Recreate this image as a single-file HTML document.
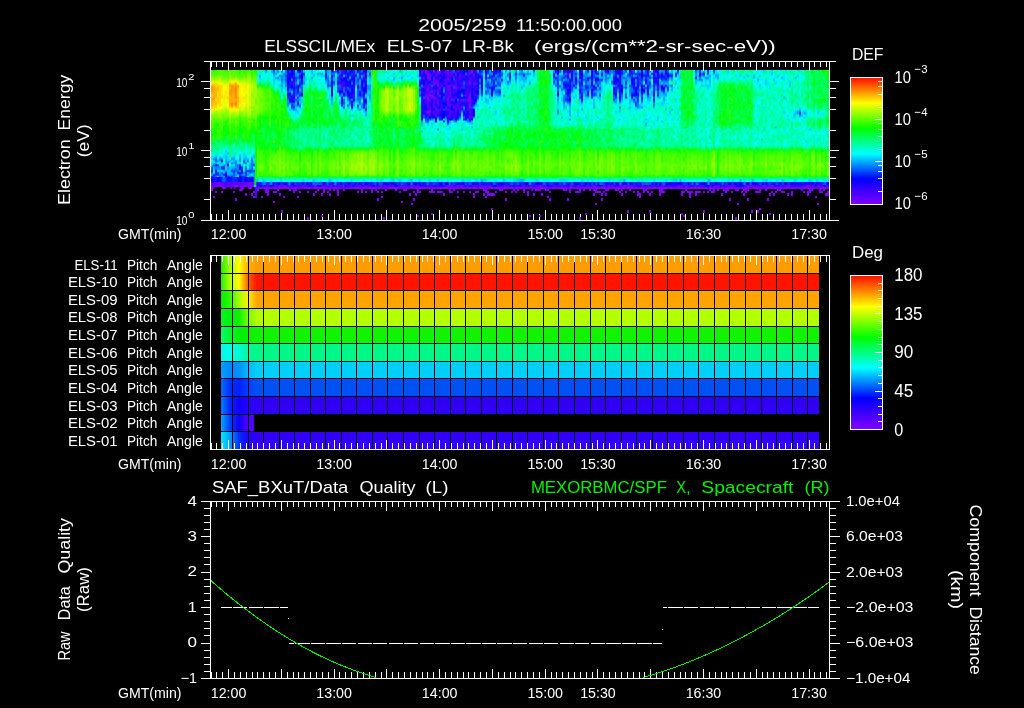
<!DOCTYPE html>
<html><head><meta charset="utf-8"><title>ELS plot</title>
<style>
html,body{margin:0;padding:0;background:#000}
#pg{position:relative;width:1024px;height:708px;background:#000;overflow:hidden}
#sp{position:absolute;left:211px;top:70px;width:618px;height:150px;display:flex;align-items:flex-start;background:#000}
#sp i{display:block;flex:0 0 2px;width:2px;height:107px}
#sb{position:absolute;left:211px;top:70px;width:618px;height:150px}
.st{position:absolute;left:0;width:618px}
svg{position:absolute;left:0;top:0;will-change:transform}
text{font-family:"Liberation Sans",sans-serif;fill:#fff}
</style></head><body><div id="pg">
<div id="sp"><i style="background:linear-gradient(#4f0,#5f0,#3f0,#7f0,#8f0,#af0,#df0,#fe0,#fa0,#f90,#f90,#fa0,#fb0,#fc0,#fb0,#fa0,#fa0,#fb0,#fb0,#fd0,#fe0,#cf0,#af0,#8f0,#7f0,#7f0,#4f0,#4f0,#4f0,#4f0,#2f0,#2f0,#1f0,#0f1,#0f2,#1f0,#0f4,#0f1,#0f7,#0f8,#0f6,#0f8,#0fd,#0ff,#0df,#0df,#0fd,#0df,#0cf,#07f,#05f,#02f,#06f,#0bf,#01f)"></i><i style="background:linear-gradient(#2f0,#3f0,#5f0,#5f0,#7f0,#9f0,#ef0,#fc0,#fb0,#fa0,#fa0,#fa0,#fb0,#fb0,#f90,#fa0,#fb0,#fc0,#fc0,#fd0,#fe0,#bf0,#9f0,#8f0,#6f0,#4f0,#5f0,#3f0,#3f0,#3f0,#1f0,#2f0,#0f1,#2f0,#4f0,#3f0,#0f8,#0f2,#0f5,#0f9,#0fc,#0fa,#0fa,#0fd,#0df,#08f,#0df,#0cf,#06f,#0af,#0af,#0ef,#0fd,#00f,#05f)"></i><i style="background:linear-gradient(#3f0,#4f0,#3f0,#6f0,#7f0,#9f0,#ef0,#fc0,#fd0,#fb0,#fb0,#fb0,#fb0,#fa0,#fc0,#fd0,#fc0,#fb0,#fc0,#fd0,#ef0,#af0,#8f0,#7f0,#6f0,#5f0,#3f0,#2f0,#1f0,#1f0,#2f0,#1f0,#0f0,#1f0,#1f0,#0f3,#0f8,#0f7,#0f6,#0f6,#0f7,#0fe,#0f8,#0df,#0bf,#04f,#05f,#0cf,#01f,#08f,#06f,#01f,#03f,#03f,#08f)"></i><i style="background:linear-gradient(#4f0,#5f0,#5f0,#8f0,#8f0,#bf0,#df0,#fe0,#fc0,#fb0,#fb0,#fc0,#fd0,#fd0,#fc0,#fc0,#fc0,#fd0,#ff0,#ff0,#df0,#bf0,#9f0,#8f0,#6f0,#4f0,#5f0,#2f0,#1f0,#3f0,#2f0,#4f0,#2f0,#3f0,#3f0,#0f6,#0f2,#0f6,#0f9,#0f7,#0f6,#0fb,#0df,#0fc,#0fe,#0ef,#09f,#0ff,#03f,#08f,#08f,#0df,#02f,#03f,#0fe)"></i><i style="background:linear-gradient(#4f0,#5f0,#4f0,#7f0,#9f0,#cf0,#cf0,#ef0,#fd0,#fd0,#fd0,#fc0,#fc0,#fc0,#fd0,#fd0,#fd0,#fd0,#fd0,#ff0,#df0,#af0,#9f0,#9f0,#7f0,#6f0,#4f0,#4f0,#4f0,#3f0,#3f0,#3f0,#2f0,#3f0,#4f0,#2f0,#0f6,#0f7,#0f8,#0f9,#0fa,#0fc,#0fb,#0ff,#0cf,#07f,#0af,#0df,#0cf,#09f,#09f,#0cf,#08f,#07f,#05f)"></i><i style="background:linear-gradient(#4f0,#5f0,#5f0,#7f0,#7f0,#8f0,#cf0,#ef0,#fd0,#fd0,#fe0,#fe0,#fe0,#fd0,#fd0,#ff0,#ff0,#fe0,#fe0,#ff0,#cf0,#af0,#8f0,#6f0,#8f0,#5f0,#5f0,#4f0,#4f0,#4f0,#4f0,#1f0,#1f0,#2f0,#2f0,#0f2,#0f6,#0f8,#0f8,#0f8,#0f9,#0fb,#0ef,#0fe,#0ef,#07f,#00f,#0bf,#0f9,#02f,#04f,#0fd,#05f,#08f,#08f)"></i><i style="background:linear-gradient(#3f0,#4f0,#4f0,#5f0,#6f0,#9f0,#af0,#cf0,#ff0,#ef0,#ff0,#ff0,#ff0,#fe0,#fd0,#df0,#df0,#ef0,#ef0,#cf0,#cf0,#af0,#8f0,#6f0,#6f0,#5f0,#3f0,#2f0,#2f0,#0f0,#0f0,#0f0,#2f0,#0f0,#0f3,#0f2,#0f5,#0f3,#0f5,#0fa,#0fe,#0fd,#0ef,#0ef,#0df,#0fe,#0f8,#0ff,#0af,#02f,#03f,#0bf,#0bf,#00f,#0df)"></i><i style="background:linear-gradient(#2f0,#3f0,#5f0,#6f0,#7f0,#8f0,#af0,#cf0,#ef0,#ff0,#fe0,#fd0,#fe0,#fe0,#fe0,#ef0,#ef0,#ef0,#ef0,#cf0,#af0,#8f0,#7f0,#8f0,#6f0,#5f0,#1f0,#1f0,#0f0,#2f0,#0f0,#0f1,#0f1,#1f0,#1f0,#0f4,#0f9,#0f6,#0f8,#0fc,#0ef,#0bf,#0fb,#0cf,#0bf,#0bf,#09f,#0af,#0af,#0df,#0cf,#09f,#20f,#00f,#00f)"></i><i style="background:linear-gradient(#2f0,#3f0,#4f0,#5f0,#6f0,#7f0,#af0,#df0,#fe0,#fe0,#ff0,#fe0,#fe0,#ff0,#fc0,#fe0,#fe0,#ff0,#ff0,#ef0,#cf0,#9f0,#8f0,#7f0,#5f0,#3f0,#2f0,#3f0,#3f0,#1f0,#0f0,#0f0,#0f0,#0f4,#0f7,#2f0,#0f4,#0f7,#0f9,#0f9,#0fa,#0fd,#0af,#0ef,#0df,#0df,#0cf,#07f,#00f,#09f,#09f,#0bf,#0bf,#09f,#10f)"></i><i style="background:linear-gradient(#6f0,#7f0,#8f0,#9f0,#8f0,#cf0,#fe0,#fb0,#f90,#fb0,#fa0,#f90,#f90,#fa0,#fb0,#fa0,#fa0,#fa0,#fa0,#fd0,#ef0,#ef0,#cf0,#af0,#8f0,#7f0,#7f0,#5f0,#4f0,#4f0,#4f0,#2f0,#2f0,#3f0,#2f0,#0f4,#1f0,#0f1,#0f3,#0f6,#0f8,#0fa,#0f7,#0f7,#0fa,#0fe,#09f,#0ff,#0fe,#0cf,#0bf,#0af,#0bf,#0af,#04f)"></i><i style="background:linear-gradient(#4f0,#5f0,#4f0,#7f0,#7f0,#bf0,#ef0,#fd0,#f90,#f90,#f90,#f90,#f90,#fa0,#fa0,#fa0,#fa0,#f80,#f80,#fc0,#fe0,#cf0,#af0,#8f0,#5f0,#5f0,#5f0,#3f0,#2f0,#2f0,#2f0,#2f0,#1f0,#1f0,#1f0,#3f0,#0f1,#0f4,#0f8,#0fa,#0fa,#0f7,#0f9,#0fc,#0df,#07f,#0fe,#07f,#0cf,#0bf,#09f,#03f,#0bf,#08f,#03f)"></i><i style="background:linear-gradient(#4f0,#5f0,#6f0,#5f0,#6f0,#bf0,#ef0,#fc0,#fa0,#f90,#f90,#f90,#fa0,#fa0,#fa0,#fa0,#fa0,#f90,#fb0,#fe0,#ff0,#cf0,#9f0,#9f0,#7f0,#4f0,#4f0,#3f0,#2f0,#2f0,#2f0,#2f0,#0f0,#0f3,#0f5,#0f3,#0f4,#0fa,#0fb,#0f9,#0f9,#0fd,#0ef,#0ef,#0bf,#08f,#0bf,#09f,#0ff,#0af,#09f,#04f,#04f,#06f,#06f)"></i><i style="background:linear-gradient(#3f0,#4f0,#6f0,#7f0,#af0,#cf0,#fe0,#fa0,#f90,#f80,#f80,#f80,#f80,#f80,#f80,#fa0,#f90,#f80,#f90,#fc0,#fe0,#df0,#af0,#9f0,#6f0,#4f0,#7f0,#5f0,#4f0,#4f0,#3f0,#3f0,#2f0,#5f0,#6f0,#0f4,#0f1,#0f5,#0f6,#0f8,#0fa,#0fb,#0f7,#0fa,#0fc,#0fc,#09f,#08f,#08f,#09f,#07f,#05f,#0af,#08f,#0bf)"></i><i style="background:linear-gradient(#3f0,#4f0,#5f0,#5f0,#7f0,#af0,#df0,#fe0,#f90,#fb0,#fb0,#fc0,#fc0,#fc0,#fa0,#fb0,#fb0,#fc0,#fc0,#fd0,#ef0,#df0,#bf0,#9f0,#6f0,#5f0,#4f0,#4f0,#4f0,#1f0,#2f0,#1f0,#1f0,#0f1,#0f3,#0f4,#0f5,#0f3,#0f7,#0f9,#0f9,#0ef,#0fc,#0fd,#0ff,#0ff,#0cf,#0ff,#06f,#08f,#07f,#07f,#10f,#0df,#0cf)"></i><i style="background:linear-gradient(#1f0,#2f0,#3f0,#4f0,#5f0,#8f0,#bf0,#ef0,#fe0,#fe0,#ff0,#fe0,#fe0,#fe0,#fe0,#fd0,#fd0,#fd0,#ff0,#bf0,#bf0,#af0,#7f0,#6f0,#3f0,#3f0,#2f0,#1f0,#0f0,#1f0,#0f0,#0f2,#0f1,#0f1,#0f2,#0f5,#0f7,#0f6,#0f8,#0f9,#0f9,#0ff,#0fe,#0bf,#0af,#08f,#09f,#0ef,#03f,#00f,#01f,#09f,#01f,#04f,#00f)"></i><i style="background:linear-gradient(#4f0,#5f0,#6f0,#4f0,#6f0,#9f0,#bf0,#df0,#fe0,#ff0,#ff0,#ff0,#ff0,#ef0,#fe0,#fe0,#fe0,#ef0,#df0,#df0,#ef0,#af0,#8f0,#7f0,#5f0,#5f0,#3f0,#2f0,#2f0,#3f0,#0f0,#0f0,#0f1,#0f4,#0f4,#1f0,#0f4,#0f7,#0f9,#0f8,#0f6,#0fc,#0fd,#0fe,#0fe,#0fa,#0fe,#0fd,#0df,#04f,#03f,#00f,#30f,#08f,#10f)"></i><i style="background:linear-gradient(#2f0,#3f0,#4f0,#5f0,#8f0,#af0,#df0,#fe0,#fe0,#fe0,#fe0,#fe0,#ff0,#ff0,#fd0,#fe0,#fe0,#ff0,#ff0,#df0,#cf0,#af0,#9f0,#7f0,#5f0,#4f0,#4f0,#3f0,#3f0,#1f0,#1f0,#2f0,#3f0,#4f0,#3f0,#0f2,#0f2,#0f4,#0f6,#0f8,#0fa,#0f8,#0df,#0df,#0df,#0bf,#04f,#08f,#0ff,#0f9,#0fb,#0df,#06f,#0af,#10f)"></i><i style="background:linear-gradient(#2f0,#3f0,#3f0,#5f0,#6f0,#8f0,#af0,#cf0,#cf0,#df0,#df0,#ef0,#df0,#cf0,#cf0,#df0,#df0,#df0,#cf0,#af0,#af0,#9f0,#8f0,#8f0,#4f0,#4f0,#2f0,#4f0,#3f0,#2f0,#1f0,#1f0,#0f1,#1f0,#1f0,#1f0,#0f5,#0fa,#0fb,#0fc,#0fd,#0ff,#0fd,#0df,#0cf,#0af,#0df,#06f,#0fc,#06f,#06f,#07f,#02f,#04f,#06f)"></i><i style="background:linear-gradient(#3f0,#4f0,#7f0,#9f0,#9f0,#af0,#bf0,#df0,#ef0,#ff0,#ef0,#ef0,#ef0,#df0,#ef0,#ef0,#ef0,#ef0,#ef0,#df0,#cf0,#bf0,#af0,#9f0,#7f0,#5f0,#5f0,#4f0,#4f0,#4f0,#3f0,#2f0,#2f0,#3f0,#3f0,#0f2,#0f0,#0f5,#0f7,#0f8,#0fa,#0fc,#0f8,#0fe,#0ff,#0bf,#06f,#0ff,#0f5,#0ff,#0df,#02f,#0cf,#08f,#0ff)"></i><i style="background:linear-gradient(#4f0,#5f0,#5f0,#7f0,#8f0,#af0,#af0,#cf0,#ef0,#cf0,#cf0,#cf0,#df0,#df0,#bf0,#cf0,#cf0,#cf0,#cf0,#af0,#bf0,#cf0,#bf0,#8f0,#7f0,#5f0,#6f0,#4f0,#4f0,#4f0,#3f0,#0f0,#1f0,#0f0,#0f1,#2f0,#0f0,#0f7,#0f8,#0f8,#0f9,#0f8,#0f9,#0fe,#0ff,#0fe,#0ff,#0cf,#0af,#0af,#08f,#03f,#06f,#0df,#08f)"></i><i style="background:linear-gradient(#1f0,#2f0,#3f0,#3f0,#5f0,#7f0,#8f0,#9f0,#bf0,#bf0,#af0,#af0,#9f0,#8f0,#af0,#9f0,#9f0,#af0,#af0,#7f0,#af0,#7f0,#7f0,#6f0,#5f0,#3f0,#5f0,#1f0,#1f0,#1f0,#1f0,#0f0,#0f1,#0f4,#0f6,#0f3,#0f2,#0f5,#0f7,#0f8,#0fa,#0ff,#0fc,#0fe,#0cf,#06f,#07f,#07f,#07f,#06f,#05f,#05f,#08f,#0ff,#04f)"></i><i style="background:linear-gradient(#3f0,#3f0,#4f0,#5f0,#5f0,#7f0,#8f0,#9f0,#af0,#af0,#9f0,#9f0,#af0,#9f0,#9f0,#bf0,#bf0,#af0,#9f0,#7f0,#8f0,#7f0,#7f0,#7f0,#7f0,#2f0,#2f0,#3f0,#3f0,#1f0,#0f0,#1f0,#0f2,#0f5,#0f4,#0f5,#0f8,#0f5,#0f6,#0fa,#0fe,#0fd,#0ef,#0bf,#0bf,#0ef,#0cf,#0bf,#03f,#0ff,#0cf,#03f,#0af,#0af,#0af)"></i><i style="background:linear-gradient(#1f0,#2f0,#4f0,#5f0,#6f0,#6f0,#7f0,#8f0,#9f0,#af0,#9f0,#9f0,#9f0,#af0,#9f0,#6f0,#6f0,#7f0,#9f0,#9f0,#8f0,#8f0,#8f0,#7f0,#6f0,#5f0,#4f0,#4f0,#3f0,#3f0,#3f0,#0f0,#0f0,#0f0,#0f0,#0f0,#0f0,#0f0,#0f0,#0f0,#0f0,#0f0,#0f0,#0f0,#0f0,#0f0,#0f0,#0f0,#0f0,#0f0,#0f0,#0f0,#0f0,#0f0,#0f0)"></i><i style="background:linear-gradient(#0fd,#0fc,#0f8,#0fc,#0fe,#0ff,#0ff,#0fa,#0f3,#4f0,#7f0,#8f0,#7f0,#7f0,#8f0,#9f0,#8f0,#7f0,#8f0,#9f0,#7f0,#8f0,#6f0,#4f0,#3f0,#1f0,#1f0,#3f0,#3f0,#0f0,#0f2,#2f0,#1f0,#1f0,#1f0,#0f4,#0f2,#0f0,#1f0,#3f0,#3f0,#5f0,#5f0,#5f0,#5f0,#4f0,#5f0,#5f0,#6f0,#6f0,#6f0,#5f0,#5f0,#6f0,#2f0)"></i><i style="background:linear-gradient(#0fa,#0fa,#0ef,#09f,#0cf,#0fd,#0f7,#0f3,#2f0,#7f0,#7f0,#7f0,#7f0,#8f0,#6f0,#6f0,#7f0,#7f0,#6f0,#6f0,#7f0,#5f0,#4f0,#2f0,#0f0,#1f0,#0f0,#0f1,#0f1,#0f0,#0f1,#4f0,#0f0,#0f2,#0f2,#0f3,#0f2,#0f0,#0f4,#0f3,#1f0,#2f0,#3f0,#4f0,#4f0,#4f0,#3f0,#5f0,#5f0,#6f0,#5f0,#5f0,#2f0,#3f0,#0f0)"></i><i style="background:linear-gradient(#0f9,#0f8,#0fb,#0ff,#0fe,#0fa,#0fc,#0f9,#1f0,#2f0,#5f0,#7f0,#7f0,#6f0,#7f0,#5f0,#5f0,#7f0,#7f0,#6f0,#6f0,#6f0,#5f0,#2f0,#1f0,#0f4,#3f0,#1f0,#0f0,#0f3,#0f6,#0f4,#1f0,#0f1,#0f2,#0f5,#0f0,#0f0,#0f0,#0f0,#1f0,#4f0,#4f0,#3f0,#4f0,#5f0,#6f0,#4f0,#7f0,#7f0,#6f0,#5f0,#4f0,#4f0,#0f0)"></i><i style="background:linear-gradient(#0df,#0ef,#0ff,#0ff,#0fd,#0fd,#0f9,#0f5,#1f0,#4f0,#4f0,#4f0,#5f0,#5f0,#5f0,#6f0,#6f0,#6f0,#5f0,#5f0,#5f0,#4f0,#3f0,#2f0,#0f0,#0f3,#0f1,#0f1,#0f2,#0f3,#0f6,#0f5,#0f2,#0f6,#0f8,#0f3,#0f0,#0f0,#0f0,#0f1,#0f0,#2f0,#1f0,#3f0,#3f0,#3f0,#4f0,#4f0,#4f0,#5f0,#5f0,#4f0,#3f0,#2f0,#0f0)"></i><i style="background:linear-gradient(#08f,#0af,#0ff,#0fc,#0fe,#0fc,#0fb,#0f8,#0f8,#1f0,#4f0,#4f0,#4f0,#4f0,#5f0,#4f0,#4f0,#5f0,#5f0,#5f0,#5f0,#3f0,#2f0,#1f0,#0f0,#0f2,#2f0,#0f2,#0f3,#0f7,#0f1,#0f2,#0f3,#0f1,#0f0,#0f2,#0f5,#2f0,#0f3,#0f1,#1f0,#2f0,#2f0,#2f0,#2f0,#2f0,#3f0,#2f0,#3f0,#4f0,#4f0,#4f0,#3f0,#3f0,#1f0)"></i><i style="background:linear-gradient(#0f9,#0f8,#0fe,#0fd,#0fc,#0f9,#0f8,#0f5,#0f1,#3f0,#4f0,#4f0,#4f0,#4f0,#4f0,#3f0,#4f0,#5f0,#4f0,#4f0,#3f0,#3f0,#2f0,#1f0,#1f0,#0f0,#0f3,#1f0,#0f0,#0f0,#0f1,#0f3,#0f2,#0f5,#0f5,#0f6,#0f4,#0f4,#0f3,#0f1,#1f0,#3f0,#2f0,#3f0,#3f0,#3f0,#5f0,#4f0,#4f0,#2f0,#2f0,#4f0,#3f0,#3f0,#0f2)"></i><i style="background:linear-gradient(#0ef,#0ff,#0fc,#0fe,#0ff,#0fd,#0fa,#0f7,#0f7,#3f0,#4f0,#5f0,#5f0,#6f0,#5f0,#4f0,#5f0,#5f0,#5f0,#5f0,#5f0,#4f0,#3f0,#4f0,#2f0,#5f0,#3f0,#5f0,#4f0,#0f6,#0f2,#1f0,#0f2,#0f3,#0f4,#0f0,#2f0,#0f2,#0f0,#1f0,#3f0,#2f0,#4f0,#3f0,#5f0,#6f0,#6f0,#7f0,#7f0,#6f0,#7f0,#8f0,#6f0,#3f0,#2f0)"></i><i style="background:linear-gradient(#0af,#0af,#0ff,#0ef,#0fd,#0ef,#0fe,#0fb,#0fb,#0f9,#0f2,#3f0,#3f0,#3f0,#4f0,#3f0,#3f0,#2f0,#1f0,#1f0,#2f0,#3f0,#2f0,#1f0,#0f0,#0f2,#0f4,#0f0,#0f1,#0f2,#0f2,#0f4,#0f4,#0f3,#0f3,#0f3,#0f3,#0f2,#0f3,#0f4,#0f2,#2f0,#3f0,#5f0,#4f0,#4f0,#6f0,#5f0,#5f0,#6f0,#6f0,#5f0,#3f0,#3f0,#0f0)"></i><i style="background:linear-gradient(#06f,#06f,#07f,#0cf,#0df,#0cf,#0cf,#0df,#0f7,#0f8,#0f6,#0f2,#1f0,#2f0,#1f0,#4f0,#4f0,#4f0,#3f0,#2f0,#4f0,#2f0,#1f0,#1f0,#0f0,#0f0,#0f2,#0f1,#0f1,#0f5,#0f1,#0f3,#0f3,#0f6,#0f7,#0f1,#5f0,#0f3,#0f3,#0f2,#0f0,#2f0,#3f0,#5f0,#5f0,#6f0,#6f0,#8f0,#4f0,#5f0,#5f0,#6f0,#6f0,#4f0,#2f0)"></i><i style="background:linear-gradient(#0cf,#0cf,#0af,#0ef,#0af,#0ef,#0fd,#0fc,#0ff,#0fe,#0fb,#0f6,#0f1,#2f0,#2f0,#1f0,#1f0,#2f0,#1f0,#1f0,#0f0,#2f0,#1f0,#1f0,#0f0,#2f0,#6f0,#2f0,#1f0,#1f0,#0f0,#0f2,#1f0,#0f5,#0f7,#0f4,#0f2,#0f0,#0f3,#0f3,#0f0,#1f0,#2f0,#5f0,#5f0,#5f0,#5f0,#7f0,#6f0,#5f0,#5f0,#6f0,#5f0,#4f0,#0f0)"></i><i style="background:linear-gradient(#08f,#08f,#0ef,#0fc,#07f,#0cf,#0fe,#0fc,#0ef,#0fa,#0f7,#0f1,#1f0,#1f0,#4f0,#1f0,#2f0,#4f0,#4f0,#3f0,#1f0,#2f0,#2f0,#2f0,#3f0,#1f0,#1f0,#0f1,#0f2,#0f2,#2f0,#0f1,#0f2,#0f0,#0f0,#0f2,#0f0,#0f1,#0f2,#0f2,#0f0,#5f0,#6f0,#4f0,#5f0,#6f0,#6f0,#5f0,#7f0,#6f0,#6f0,#6f0,#5f0,#5f0,#1f0)"></i><i style="background:linear-gradient(#0fd,#0fd,#0ff,#07f,#0cf,#0bf,#0fe,#0fc,#0cf,#0f9,#0fb,#0fa,#0f7,#0f5,#0f1,#0f5,#2f0,#3f0,#2f0,#2f0,#3f0,#2f0,#2f0,#3f0,#1f0,#3f0,#4f0,#3f0,#3f0,#0f3,#2f0,#0f0,#0f0,#0f0,#0f0,#0f2,#0f3,#0f1,#2f0,#5f0,#6f0,#5f0,#5f0,#5f0,#6f0,#7f0,#af0,#8f0,#8f0,#8f0,#8f0,#7f0,#6f0,#6f0,#4f0)"></i><i style="background:linear-gradient(#08f,#08f,#0ef,#07f,#09f,#05f,#09f,#0af,#08f,#0cf,#0bf,#0df,#0ef,#0ef,#0ff,#0f7,#0f6,#0f5,#0f2,#1f0,#2f0,#0f0,#0f0,#0f1,#0f0,#1f0,#0f3,#0f0,#0f1,#0f2,#0f1,#0f5,#0f1,#0f3,#0f3,#0f3,#3f0,#0f5,#0f4,#0f2,#1f0,#4f0,#4f0,#4f0,#4f0,#5f0,#4f0,#7f0,#4f0,#6f0,#5f0,#4f0,#5f0,#4f0,#3f0)"></i><i style="background:linear-gradient(#0ff,#0fe,#07f,#09f,#0af,#0af,#0bf,#0cf,#0f9,#0cf,#0ff,#0fb,#0f7,#0f5,#0f6,#0f1,#1f0,#2f0,#0f0,#0f0,#4f0,#3f0,#2f0,#0f2,#3f0,#0f1,#1f0,#1f0,#1f0,#1f0,#3f0,#2f0,#1f0,#0f2,#0f3,#0f5,#0f3,#0f3,#0f2,#1f0,#3f0,#4f0,#6f0,#6f0,#6f0,#7f0,#6f0,#7f0,#7f0,#9f0,#8f0,#6f0,#8f0,#6f0,#3f0)"></i><i style="background:linear-gradient(#06f,#07f,#07f,#04f,#07f,#04f,#07f,#09f,#07f,#0df,#0cf,#0fd,#0f8,#0f6,#0f4,#0f0,#0f1,#0f3,#0f3,#0f4,#0f1,#0f1,#0f1,#0f2,#2f0,#1f0,#0f0,#4f0,#3f0,#0f3,#0f7,#0f7,#0f6,#0f6,#0f6,#0f4,#0f7,#0f1,#0f4,#0f3,#1f0,#2f0,#2f0,#4f0,#4f0,#4f0,#4f0,#5f0,#6f0,#5f0,#4f0,#4f0,#5f0,#3f0,#1f0)"></i><i style="background:linear-gradient(#00f,#00f,#01f,#20f,#00f,#01f,#10f,#10f,#02f,#10f,#00f,#05f,#01f,#20f,#03f,#07f,#09f,#08f,#07f,#0df,#0fd,#0f9,#0f5,#0f1,#2f0,#0f1,#4f0,#4f0,#4f0,#0f1,#0f0,#0f3,#0f2,#0f2,#0f2,#0f1,#0f6,#0f4,#0f3,#0f2,#0f0,#2f0,#4f0,#4f0,#4f0,#5f0,#6f0,#7f0,#6f0,#7f0,#7f0,#5f0,#4f0,#5f0,#2f0)"></i><i style="background:linear-gradient(#03f,#03f,#10f,#20f,#10f,#00f,#01f,#02f,#02f,#02f,#08f,#07f,#10f,#30f,#03f,#10f,#01f,#09f,#0fc,#0fe,#0bf,#0ff,#0fc,#0f9,#0f5,#0f1,#0f1,#0f4,#0f4,#0f1,#0f3,#0f9,#0f5,#0f5,#0f5,#0f5,#0f4,#0f6,#0f4,#0f2,#0f1,#2f0,#1f0,#4f0,#4f0,#4f0,#4f0,#4f0,#4f0,#4f0,#4f0,#5f0,#5f0,#4f0,#0f0)"></i><i style="background:linear-gradient(#10f,#10f,#00f,#10f,#02f,#09f,#20f,#40f,#00f,#01f,#04f,#0cf,#08f,#02f,#20f,#40f,#10f,#06f,#02f,#03f,#0cf,#0ef,#0ff,#0fc,#0fd,#0f5,#0f1,#0f3,#0f3,#0f1,#0f6,#0f8,#0f7,#0f5,#0f4,#0f4,#0f8,#0f6,#0f7,#0f6,#0f2,#2f0,#3f0,#3f0,#3f0,#4f0,#4f0,#6f0,#5f0,#6f0,#5f0,#4f0,#4f0,#5f0,#0f0)"></i><i style="background:linear-gradient(#02f,#02f,#10f,#02f,#30f,#20f,#40f,#50f,#03f,#10f,#01f,#01f,#20f,#40f,#20f,#40f,#20f,#06f,#06f,#04f,#08f,#0fa,#0fd,#0fb,#0fd,#0fc,#0f7,#0f2,#0f1,#0f3,#0f2,#0f6,#0f9,#0f7,#0f5,#0f4,#0f6,#0f6,#0f5,#0f7,#0f5,#0f0,#3f0,#3f0,#4f0,#5f0,#5f0,#5f0,#5f0,#6f0,#6f0,#3f0,#3f0,#2f0,#0f0)"></i><i style="background:linear-gradient(#0bf,#0cf,#08f,#08f,#03f,#04f,#06f,#07f,#04f,#03f,#05f,#05f,#05f,#06f,#0cf,#04f,#09f,#0cf,#09f,#0cf,#0af,#0df,#0ef,#0fe,#0fc,#0f8,#0f4,#0f4,#0f4,#0f3,#0f5,#0fa,#0fa,#0f9,#0f9,#0fc,#0f6,#0f8,#0f7,#0f4,#0f0,#2f0,#3f0,#4f0,#4f0,#4f0,#3f0,#5f0,#4f0,#5f0,#5f0,#5f0,#5f0,#3f0,#0f0)"></i><i style="background:linear-gradient(#01f,#01f,#0bf,#09f,#05f,#0af,#0cf,#0cf,#00f,#01f,#01f,#00f,#05f,#09f,#70f,#08f,#03f,#00f,#07f,#0ef,#0fd,#0cf,#0df,#0ff,#0fc,#0f6,#0f7,#0f2,#0f0,#0f1,#0f6,#0f5,#0f6,#0f6,#0f6,#0f3,#0f4,#0f4,#0f8,#0f8,#0f4,#3f0,#4f0,#5f0,#5f0,#5f0,#5f0,#5f0,#5f0,#7f0,#6f0,#5f0,#4f0,#2f0,#1f0)"></i><i style="background:linear-gradient(#00f,#00f,#07f,#01f,#01f,#08f,#03f,#02f,#02f,#06f,#0bf,#07f,#04f,#04f,#0bf,#09f,#0cf,#0bf,#05f,#09f,#0fe,#0ff,#0fd,#0f9,#0f9,#0f4,#0f2,#0f4,#0f5,#0f8,#0fa,#0f7,#0fb,#0fc,#0fc,#0f9,#0f7,#0f5,#0f8,#0fa,#0f7,#0f1,#0f1,#0f0,#1f0,#1f0,#1f0,#3f0,#3f0,#3f0,#2f0,#2f0,#2f0,#0f0,#0f1)"></i><i style="background:linear-gradient(#04f,#04f,#10f,#10f,#00f,#00f,#01f,#02f,#08f,#05f,#06f,#07f,#01f,#20f,#0fa,#0cf,#0cf,#0df,#0ff,#0fa,#0fc,#0f8,#0f5,#0f4,#0f3,#0f2,#0f3,#0f0,#0f2,#0f7,#0f7,#0f6,#0f9,#0f9,#0f9,#0f8,#0f7,#0f5,#0f6,#0f8,#0f6,#0f0,#3f0,#3f0,#3f0,#4f0,#3f0,#6f0,#6f0,#5f0,#4f0,#4f0,#4f0,#3f0,#0f1)"></i><i style="background:linear-gradient(#0bf,#0cf,#00f,#07f,#09f,#0cf,#08f,#08f,#0f8,#0f8,#0f6,#0f5,#0f5,#0f5,#0f1,#0f8,#0f6,#0f1,#0f3,#0f8,#0f1,#0f3,#0f4,#0f5,#0f0,#0f5,#0f2,#0f4,#0f6,#0f5,#0f9,#0fa,#0f9,#0f7,#0f7,#0fb,#0f9,#0fc,#0f9,#0f7,#0f5,#2f0,#1f0,#3f0,#4f0,#4f0,#4f0,#4f0,#3f0,#4f0,#3f0,#3f0,#2f0,#2f0,#0f2)"></i><i style="background:linear-gradient(#0fb,#0fb,#0ff,#0ff,#0cf,#0cf,#0ef,#0ef,#0fb,#0f9,#0f8,#0f7,#0f4,#0f2,#0f2,#0f3,#0f2,#0f4,#0f4,#0f0,#0f1,#0f1,#0f2,#0f3,#0f5,#1f0,#0f3,#0f4,#0f6,#0f6,#0f8,#0f8,#0f6,#0fa,#0fb,#0fb,#0fc,#0f7,#0f8,#0f5,#0f0,#1f0,#2f0,#3f0,#4f0,#5f0,#6f0,#5f0,#4f0,#4f0,#4f0,#4f0,#2f0,#2f0,#0f2)"></i><i style="background:linear-gradient(#0ff,#0fe,#0fd,#0fa,#0fe,#0fe,#0ff,#0ef,#0fe,#0fb,#0f7,#0f3,#0f1,#0f1,#0f0,#0f2,#0f0,#1f0,#1f0,#4f0,#1f0,#0f3,#0f2,#1f0,#0f0,#0f0,#0f5,#0f0,#0f1,#0f5,#0f6,#0fa,#0f8,#0f6,#0f6,#0f8,#0f5,#0f6,#0f6,#0f5,#0f1,#1f0,#3f0,#3f0,#4f0,#4f0,#3f0,#7f0,#6f0,#6f0,#6f0,#3f0,#7f0,#3f0,#0f1)"></i><i style="background:linear-gradient(#0ef,#0ef,#0ff,#0fe,#0fa,#0f5,#0f7,#0f6,#0f1,#0f4,#0f1,#0f2,#0f3,#0f3,#0f6,#0f2,#0f2,#0f3,#0f3,#0f4,#0f1,#1f0,#0f0,#0f2,#0f1,#0f1,#1f0,#1f0,#0f1,#0f6,#0f8,#0f8,#0f8,#0f6,#0f5,#0f8,#0f9,#0fb,#0f7,#0f4,#0f1,#1f0,#3f0,#4f0,#4f0,#4f0,#5f0,#5f0,#6f0,#7f0,#6f0,#6f0,#6f0,#4f0,#1f0)"></i><i style="background:linear-gradient(#0af,#0bf,#0df,#0ef,#09f,#0df,#0df,#0fe,#0f9,#0f9,#0f6,#0f6,#0f0,#4f0,#0f6,#0f7,#0f5,#0f3,#0f4,#0f3,#0f3,#0f7,#0f6,#0f4,#0f4,#0f2,#0f0,#0f6,#0f7,#0f7,#0f9,#0f8,#0f9,#0f8,#0f8,#0fa,#0fa,#0f8,#0fa,#0f8,#0f2,#0f0,#0f0,#0f0,#1f0,#2f0,#3f0,#2f0,#4f0,#3f0,#3f0,#4f0,#2f0,#2f0,#0f2)"></i><i style="background:linear-gradient(#0fc,#0fc,#0df,#0bf,#0fe,#0fc,#0fa,#0f7,#0fb,#0f8,#0f6,#0f3,#0f1,#0f0,#0f3,#1f0,#0f1,#0f3,#0f1,#0f2,#2f0,#0f0,#0f0,#0f2,#0f4,#0f0,#0f0,#0f6,#0f7,#0f1,#0f9,#0f5,#0f5,#0f9,#0fa,#0f9,#0f8,#0f9,#0fb,#0f8,#0f2,#3f0,#4f0,#4f0,#4f0,#3f0,#3f0,#5f0,#6f0,#4f0,#4f0,#5f0,#5f0,#6f0,#0f0)"></i><i style="background:linear-gradient(#0ef,#0ff,#0f7,#0ff,#0fd,#0fc,#0fc,#0fa,#0fc,#0f4,#0f2,#0f2,#0f3,#0f2,#0f3,#0f4,#0f3,#1f0,#2f0,#0f2,#0f3,#0f3,#0f2,#0f0,#0f0,#0f1,#0f2,#0f1,#0f2,#0f1,#0f8,#0f9,#0f8,#0f6,#0f5,#0f6,#0f8,#0f6,#0f7,#0f6,#0f2,#4f0,#6f0,#4f0,#5f0,#6f0,#7f0,#6f0,#6f0,#6f0,#6f0,#7f0,#7f0,#5f0,#1f0)"></i><i style="background:linear-gradient(#0ff,#0ff,#09f,#0fa,#0fe,#0fe,#0fd,#0fd,#0fd,#0fd,#0f9,#0f3,#0f0,#0f0,#0f6,#0f2,#0f2,#0f2,#0f5,#0f6,#0f1,#0f3,#0f3,#0f5,#0f3,#0f3,#0f7,#0f3,#0f5,#0fa,#0f9,#0fb,#0f9,#0f8,#0f8,#0f6,#0f9,#0f8,#0fa,#0f6,#0f0,#1f0,#2f0,#3f0,#3f0,#4f0,#4f0,#4f0,#3f0,#4f0,#4f0,#3f0,#3f0,#2f0,#1f0)"></i><i style="background:linear-gradient(#0fe,#0fe,#0bf,#0ef,#0ff,#0ef,#0fd,#0fc,#0ff,#0fe,#0fa,#0f7,#0f4,#0f0,#6f0,#0f2,#0f2,#0f0,#3f0,#0f0,#0f3,#0f1,#0f1,#0f0,#2f0,#1f0,#1f0,#0f3,#0f4,#0f1,#0f6,#0f6,#0f5,#0f3,#0f3,#0f7,#0f3,#0f8,#0f7,#0f5,#0f3,#4f0,#5f0,#5f0,#6f0,#6f0,#6f0,#8f0,#7f0,#6f0,#6f0,#8f0,#7f0,#3f0,#3f0)"></i><i style="background:linear-gradient(#0fd,#0fc,#0af,#0cf,#0fd,#0ff,#0ef,#0fe,#0f9,#0f8,#0f5,#0f3,#1f0,#3f0,#0f5,#0f0,#0f3,#0f6,#0f4,#0f4,#0f1,#0f1,#0f1,#0f4,#0f1,#0f1,#0f2,#0f4,#0f6,#0f8,#0f9,#0f6,#0fb,#0fc,#0fc,#0f9,#0f7,#0f7,#0f8,#0f8,#0f4,#2f0,#3f0,#3f0,#3f0,#3f0,#4f0,#5f0,#6f0,#5f0,#5f0,#4f0,#2f0,#3f0,#0f0)"></i><i style="background:linear-gradient(#0ff,#0ff,#0f9,#0bf,#0ff,#0ff,#0ff,#0fd,#0ef,#0fb,#0f9,#0f6,#0f3,#0f2,#0f1,#0f4,#0f4,#0f2,#0f1,#0f2,#0f3,#0f4,#0f4,#0f4,#0f5,#2f0,#0f0,#0f0,#0f1,#0f8,#0f6,#0f8,#0fa,#0f7,#0f6,#0f6,#0f6,#0f8,#0fa,#0fb,#0f9,#0f0,#4f0,#3f0,#3f0,#4f0,#5f0,#5f0,#4f0,#5f0,#5f0,#4f0,#4f0,#3f0,#0f2)"></i><i style="background:linear-gradient(#04f,#04f,#01f,#02f,#02f,#06f,#0bf,#0df,#0ff,#0ff,#0fd,#0f5,#0f3,#0f4,#0f8,#0f6,#0f4,#0f3,#0f5,#0f2,#0f3,#0f5,#0f5,#0f5,#0f3,#0f3,#0f3,#0f1,#0f3,#0f8,#0f8,#0fa,#0fa,#0fc,#0fd,#0fc,#0f8,#0fd,#0fd,#0f7,#0f0,#1f0,#1f0,#2f0,#3f0,#4f0,#4f0,#5f0,#4f0,#4f0,#4f0,#3f0,#2f0,#2f0,#0f2)"></i><i style="background:linear-gradient(#0af,#0af,#0bf,#09f,#07f,#06f,#07f,#07f,#03f,#0af,#0df,#0ff,#0ff,#0fe,#0fd,#0f4,#0f3,#0f3,#0f2,#0f3,#0f6,#0f4,#0f5,#0f7,#0f6,#0f4,#0f4,#0f0,#0f1,#0f6,#0fc,#0fb,#0f9,#0f9,#0f9,#0f9,#0f6,#0f8,#0f8,#0f6,#0f1,#1f0,#1f0,#2f0,#3f0,#3f0,#4f0,#4f0,#5f0,#4f0,#4f0,#3f0,#2f0,#4f0,#0f0)"></i><i style="background:linear-gradient(#0bf,#0bf,#0cf,#0ff,#0cf,#0cf,#09f,#08f,#05f,#0fb,#0fd,#0fd,#0ff,#0df,#0ef,#0df,#0ff,#0fa,#0f7,#0fa,#0f3,#1f0,#1f0,#0f1,#1f0,#0f1,#0f0,#0f4,#0f5,#0f9,#0f7,#0f4,#0f3,#0f8,#0f9,#0f5,#0f7,#0f6,#0f7,#0f5,#0f0,#3f0,#3f0,#5f0,#5f0,#4f0,#5f0,#5f0,#8f0,#7f0,#7f0,#6f0,#6f0,#4f0,#2f0)"></i><i style="background:linear-gradient(#30f,#30f,#07f,#00f,#02f,#03f,#10f,#20f,#02f,#10f,#10f,#00f,#10f,#20f,#08f,#0af,#0af,#0af,#0df,#0df,#0fb,#0fb,#0f8,#0f7,#0f2,#0f5,#0f1,#0f3,#0f5,#0f6,#0f9,#0f7,#0f6,#0f8,#0f9,#0f9,#0f9,#0f3,#0f5,#0f7,#0f5,#2f0,#4f0,#4f0,#4f0,#4f0,#5f0,#6f0,#6f0,#5f0,#5f0,#6f0,#5f0,#5f0,#2f0)"></i><i style="background:linear-gradient(#04f,#04f,#08f,#04f,#0bf,#0af,#05f,#04f,#0bf,#0f7,#0fb,#0ff,#0fd,#0fc,#0ef,#0fc,#0f8,#0f4,#0f1,#2f0,#1f0,#0f3,#0f3,#0f4,#0f5,#0f3,#2f0,#0f5,#0f6,#0f6,#0f5,#0f3,#0f4,#0f7,#0f8,#0fa,#0f4,#0f8,#0f8,#0f4,#2f0,#3f0,#2f0,#2f0,#3f0,#5f0,#6f0,#7f0,#7f0,#7f0,#7f0,#6f0,#6f0,#5f0,#3f0)"></i><i style="background:linear-gradient(#05f,#05f,#0fe,#0f7,#0df,#0bf,#0df,#0ef,#0ff,#0fd,#0fc,#0fb,#0f9,#0f7,#0f4,#0f3,#0f3,#0f2,#0f2,#0f2,#0f2,#0f3,#0f3,#0f3,#0f0,#0f7,#0f3,#0f2,#0f3,#0f7,#0f8,#0fa,#0f6,#0f6,#0f6,#0f6,#0fd,#0fb,#0f7,#0f4,#0f1,#3f0,#4f0,#4f0,#4f0,#4f0,#5f0,#6f0,#5f0,#6f0,#5f0,#4f0,#4f0,#5f0,#0f1)"></i><i style="background:linear-gradient(#20f,#20f,#06f,#09f,#02f,#05f,#10f,#20f,#07f,#03f,#04f,#02f,#0ff,#0f9,#0fa,#0fa,#0fb,#0fb,#0f6,#0f4,#0f2,#0f2,#0f2,#0f1,#0f3,#2f0,#0f4,#0f7,#0f8,#0f8,#0f7,#0f5,#0f7,#0f7,#0f7,#0f7,#0f5,#0fa,#0f9,#0f4,#1f0,#5f0,#5f0,#6f0,#6f0,#6f0,#6f0,#af0,#7f0,#9f0,#8f0,#6f0,#7f0,#5f0,#2f0)"></i><i style="background:linear-gradient(#05f,#05f,#05f,#02f,#02f,#03f,#30f,#50f,#06f,#04f,#03f,#10f,#01f,#06f,#0ff,#0ef,#0bf,#0bf,#0fe,#0fe,#0fd,#0fc,#0f9,#0f6,#0f5,#0f3,#0f5,#0f6,#0f7,#0f6,#0fa,#0f6,#0fb,#0f8,#0f7,#0f7,#0f8,#0fa,#0fa,#0f8,#0f4,#2f0,#4f0,#3f0,#3f0,#4f0,#4f0,#4f0,#4f0,#6f0,#5f0,#3f0,#3f0,#3f0,#1f0)"></i><i style="background:linear-gradient(#50f,#50f,#40f,#20f,#70f,#00f,#20f,#30f,#40f,#40f,#40f,#00f,#07f,#09f,#40f,#20f,#00f,#02f,#03f,#0fd,#0fd,#0ef,#0fd,#0fa,#0f9,#0f3,#0f4,#0f5,#0f5,#0f3,#0f6,#0f9,#0f6,#0f7,#0f7,#0f9,#0f7,#0fb,#0f7,#0f3,#1f0,#4f0,#6f0,#5f0,#6f0,#6f0,#7f0,#7f0,#7f0,#6f0,#6f0,#6f0,#7f0,#5f0,#1f0)"></i><i style="background:linear-gradient(#02f,#02f,#20f,#0df,#00f,#10f,#30f,#40f,#30f,#05f,#06f,#06f,#00f,#20f,#0df,#06f,#05f,#05f,#0af,#05f,#0f9,#0fd,#0fb,#0f8,#0f8,#0f6,#0f3,#0f1,#0f1,#0f4,#0f6,#0f1,#0f9,#0f8,#0f7,#0fb,#0f6,#0fa,#0fa,#0f6,#0f0,#4f0,#6f0,#7f0,#7f0,#7f0,#7f0,#8f0,#9f0,#9f0,#9f0,#8f0,#8f0,#7f0,#3f0)"></i><i style="background:linear-gradient(#20f,#20f,#02f,#04f,#00f,#00f,#01f,#01f,#10f,#50f,#30f,#04f,#06f,#05f,#0fb,#0ef,#0ff,#0fe,#0fe,#0fd,#0f5,#0f5,#0f4,#0f6,#0f6,#0f8,#0f6,#0f3,#0f4,#0f8,#0fa,#0f9,#0fa,#0f9,#0f9,#0fa,#0fb,#0f7,#0f8,#0f5,#0f0,#2f0,#3f0,#5f0,#4f0,#4f0,#6f0,#7f0,#7f0,#7f0,#6f0,#5f0,#6f0,#5f0,#1f0)"></i><i style="background:linear-gradient(#04f,#04f,#00f,#20f,#30f,#05f,#10f,#20f,#00f,#06f,#03f,#00f,#20f,#30f,#06f,#07f,#0df,#0df,#04f,#0cf,#0fd,#0ef,#0fe,#0fa,#0f7,#0f6,#0f9,#0f4,#0f5,#0f8,#0f9,#0fc,#0fa,#0f7,#0f6,#0f9,#0fb,#0fa,#0fa,#0f4,#2f0,#4f0,#3f0,#3f0,#4f0,#6f0,#5f0,#7f0,#7f0,#6f0,#6f0,#6f0,#5f0,#3f0,#0f3)"></i><i style="background:linear-gradient(#02f,#02f,#01f,#03f,#0bf,#02f,#00f,#00f,#01f,#02f,#05f,#03f,#10f,#20f,#10f,#04f,#06f,#06f,#0bf,#0fe,#0f9,#0fa,#0f8,#0f6,#0f5,#0f6,#0f3,#0f9,#0fa,#0f5,#0f5,#0f9,#0f6,#0f6,#0f7,#0fe,#0f5,#0fb,#0fa,#0f7,#0f0,#3f0,#5f0,#7f0,#7f0,#7f0,#8f0,#7f0,#7f0,#8f0,#8f0,#8f0,#8f0,#7f0,#0f1)"></i><i style="background:linear-gradient(#00f,#00f,#04f,#02f,#01f,#30f,#04f,#07f,#00f,#02f,#00f,#10f,#10f,#10f,#20f,#08f,#00f,#40f,#10f,#00f,#0bf,#0ff,#0fe,#0cf,#0ff,#0fe,#0ef,#0f6,#0f4,#0f7,#0f6,#0f6,#0fb,#0fd,#0fd,#0f6,#0f8,#0f6,#0f6,#0f6,#0f2,#5f0,#7f0,#5f0,#6f0,#8f0,#8f0,#9f0,#9f0,#af0,#9f0,#8f0,#7f0,#7f0,#4f0)"></i><i style="background:linear-gradient(#03f,#03f,#40f,#50f,#10f,#10f,#10f,#10f,#30f,#30f,#30f,#30f,#40f,#50f,#03f,#00f,#05f,#0bf,#0af,#0ef,#0fe,#0fd,#0fb,#0f8,#0f9,#0fc,#1f0,#0f3,#0f4,#0fb,#0fa,#0fa,#0f9,#0fa,#0fa,#0fc,#0f7,#0f7,#0fa,#0f7,#0f1,#5f0,#5f0,#7f0,#7f0,#7f0,#8f0,#7f0,#af0,#9f0,#8f0,#8f0,#7f0,#6f0,#1f0)"></i><i style="background:linear-gradient(#07f,#07f,#06f,#10f,#09f,#06f,#07f,#08f,#0bf,#0fa,#0ff,#0df,#0df,#0df,#0cf,#09f,#0df,#0fe,#0fe,#0fc,#0fd,#0fa,#0f9,#0f6,#0f7,#0f4,#0f6,#0f6,#0f6,#0fb,#0fb,#0fb,#0f7,#0fb,#0fd,#0fa,#0fb,#0fa,#0f9,#0f7,#0f2,#5f0,#6f0,#8f0,#7f0,#6f0,#8f0,#8f0,#9f0,#af0,#9f0,#8f0,#7f0,#5f0,#0f1)"></i><i style="background:linear-gradient(#10f,#00f,#0bf,#0bf,#06f,#03f,#06f,#07f,#00f,#00f,#05f,#05f,#04f,#05f,#07f,#05f,#0af,#0df,#03f,#07f,#0cf,#0ff,#0fe,#0fe,#0fd,#0f9,#0f6,#0f6,#0f6,#0f7,#0f9,#0f9,#0fa,#0f8,#0f7,#0f9,#0fb,#0f9,#0fa,#0f5,#1f0,#5f0,#7f0,#9f0,#9f0,#8f0,#9f0,#9f0,#9f0,#9f0,#9f0,#6f0,#8f0,#7f0,#1f0)"></i><i style="background:linear-gradient(#03f,#03f,#20f,#04f,#00f,#09f,#09f,#09f,#07f,#05f,#08f,#01f,#10f,#01f,#07f,#07f,#06f,#07f,#0df,#0fe,#08f,#0f9,#0f8,#0fa,#0f7,#0f5,#0f7,#0f9,#0f9,#0f5,#0fd,#0f9,#0fc,#0f9,#0f7,#0f7,#0fc,#0f8,#0fc,#0f8,#0f0,#5f0,#7f0,#7f0,#7f0,#7f0,#8f0,#9f0,#af0,#8f0,#8f0,#af0,#8f0,#6f0,#1f0)"></i><i style="background:linear-gradient(#06f,#06f,#00f,#0bf,#08f,#02f,#00f,#00f,#00f,#10f,#02f,#05f,#05f,#03f,#07f,#0fb,#0ff,#09f,#09f,#08f,#0df,#0ff,#0fd,#0f7,#0fc,#0f8,#0f8,#0f5,#0f5,#0f8,#0f8,#0f8,#0f8,#0f6,#0f5,#0f9,#0fb,#0f8,#0f9,#0f5,#2f0,#5f0,#9f0,#9f0,#9f0,#9f0,#af0,#bf0,#bf0,#bf0,#bf0,#9f0,#af0,#6f0,#2f0)"></i><i style="background:linear-gradient(#10f,#10f,#60f,#05f,#30f,#40f,#01f,#04f,#05f,#10f,#00f,#00f,#10f,#20f,#04f,#20f,#00f,#03f,#02f,#01f,#0df,#0cf,#0ff,#0f9,#0fc,#0f5,#0fa,#0f9,#0f9,#0f8,#0fb,#0f8,#0f8,#0fc,#0fe,#0fb,#0f8,#0f9,#0f7,#0f5,#0f0,#7f0,#6f0,#7f0,#7f0,#7f0,#7f0,#8f0,#9f0,#7f0,#6f0,#7f0,#9f0,#6f0,#1f0)"></i><i style="background:linear-gradient(#00f,#00f,#02f,#10f,#20f,#03f,#01f,#00f,#00f,#01f,#00f,#10f,#06f,#0ef,#08f,#00f,#10f,#03f,#08f,#07f,#00f,#0af,#0bf,#0af,#0fd,#0fb,#0fc,#0fb,#0fa,#0f8,#0fc,#0fd,#0fa,#0f9,#0f9,#0f7,#0fd,#0fb,#0fb,#0f7,#0f1,#4f0,#7f0,#7f0,#7f0,#7f0,#8f0,#7f0,#8f0,#af0,#af0,#9f0,#8f0,#5f0,#0f0)"></i><i style="background:linear-gradient(#09f,#09f,#0ef,#09f,#0ef,#0ef,#0ef,#0ef,#08f,#08f,#0af,#0cf,#0cf,#0cf,#0ff,#0ef,#0fc,#0fa,#0fb,#0f7,#0fa,#0fb,#0fa,#0f7,#0f7,#0fb,#0fb,#0fc,#0fc,#0f8,#0f7,#0fb,#0fb,#0fe,#0fe,#0fe,#0ff,#0f6,#0f9,#0f8,#0f1,#3f0,#5f0,#5f0,#5f0,#6f0,#7f0,#6f0,#7f0,#7f0,#7f0,#6f0,#6f0,#4f0,#0f0)"></i><i style="background:linear-gradient(#0af,#0af,#01f,#08f,#0af,#0cf,#0cf,#0df,#08f,#09f,#09f,#0cf,#0bf,#09f,#09f,#0cf,#0df,#0ff,#0fc,#0fc,#0ff,#0fd,#0fc,#0fa,#0f7,#0fb,#0f6,#0fa,#0fb,#0f5,#0fd,#0f3,#0f5,#0f8,#0f9,#0f7,#0fc,#0f8,#0f5,#0f2,#2f0,#7f0,#8f0,#5f0,#6f0,#9f0,#af0,#bf0,#9f0,#9f0,#9f0,#9f0,#bf0,#7f0,#2f0)"></i><i style="background:linear-gradient(#0f2,#0f1,#0f3,#0f6,#0f6,#0fa,#0fb,#0fc,#0f6,#0f9,#0f8,#0f5,#0f4,#0f6,#0f5,#0f5,#0f6,#0f6,#0f4,#0f8,#0f7,#0f6,#0f7,#0f8,#0f8,#0fa,#0f7,#0f3,#0f4,#0f7,#0f8,#0f6,#0f5,#0f5,#0f5,#0fa,#0f6,#0fa,#0f8,#0f7,#0f2,#6f0,#8f0,#7f0,#8f0,#8f0,#8f0,#8f0,#8f0,#af0,#9f0,#8f0,#7f0,#7f0,#1f0)"></i><i style="background:linear-gradient(#2f0,#2f0,#3f0,#4f0,#3f0,#3f0,#3f0,#3f0,#4f0,#2f0,#2f0,#2f0,#3f0,#4f0,#2f0,#4f0,#5f0,#5f0,#4f0,#4f0,#3f0,#3f0,#3f0,#2f0,#3f0,#5f0,#1f0,#0f0,#0f1,#0f2,#0f5,#0f0,#0f4,#0f4,#0f4,#0f4,#0f1,#0f2,#0f5,#0f1,#4f0,#7f0,#7f0,#8f0,#8f0,#8f0,#9f0,#9f0,#9f0,#af0,#af0,#9f0,#8f0,#8f0,#1f0)"></i><i style="background:linear-gradient(#1f0,#1f0,#1f0,#2f0,#1f0,#2f0,#3f0,#3f0,#1f0,#3f0,#2f0,#1f0,#2f0,#2f0,#2f0,#1f0,#1f0,#1f0,#1f0,#3f0,#1f0,#0f0,#0f0,#2f0,#0f0,#0f0,#0f0,#0f3,#0f4,#0f6,#1f0,#0f4,#0f3,#0f3,#0f3,#0f4,#0f2,#0f2,#0f3,#0f2,#1f0,#4f0,#6f0,#6f0,#6f0,#7f0,#9f0,#8f0,#7f0,#7f0,#7f0,#6f0,#6f0,#7f0,#1f0)"></i><i style="background:linear-gradient(#0f5,#0f6,#0fd,#0df,#0fe,#0f9,#0f3,#1f0,#2f0,#1f0,#0f0,#1f0,#1f0,#1f0,#2f0,#0f0,#0f0,#1f0,#2f0,#0f0,#0f0,#1f0,#1f0,#0f0,#0f0,#4f0,#2f0,#0f1,#0f2,#0f2,#0f7,#0f4,#0f7,#0f4,#0f3,#0f4,#0f5,#0f1,#0f3,#0f5,#0f2,#2f0,#4f0,#4f0,#4f0,#3f0,#5f0,#5f0,#6f0,#5f0,#5f0,#6f0,#5f0,#3f0,#0f0)"></i><i style="background:linear-gradient(#0fb,#0fa,#0f9,#0fb,#0fa,#0ef,#0fa,#0f5,#0f3,#0f2,#4f0,#6f0,#5f0,#4f0,#4f0,#6f0,#6f0,#6f0,#6f0,#6f0,#6f0,#5f0,#4f0,#2f0,#2f0,#4f0,#3f0,#1f0,#0f0,#0f1,#0f2,#0f0,#2f0,#0f2,#0f3,#0f0,#1f0,#0f0,#0f2,#1f0,#4f0,#6f0,#4f0,#5f0,#6f0,#7f0,#7f0,#7f0,#9f0,#af0,#9f0,#8f0,#6f0,#5f0,#4f0)"></i><i style="background:linear-gradient(#0f9,#0f8,#0ff,#0fe,#0fe,#0fd,#0f8,#0f3,#0f1,#3f0,#7f0,#8f0,#7f0,#7f0,#6f0,#8f0,#8f0,#7f0,#8f0,#8f0,#7f0,#5f0,#4f0,#5f0,#3f0,#0f0,#3f0,#1f0,#1f0,#0f0,#0f3,#0f0,#0f3,#0f4,#0f4,#0f2,#0f0,#0f7,#0f4,#2f0,#5f0,#3f0,#5f0,#5f0,#6f0,#6f0,#6f0,#7f0,#8f0,#7f0,#7f0,#6f0,#7f0,#6f0,#2f0)"></i><i style="background:linear-gradient(#0f8,#0f7,#0f9,#0fb,#0fb,#0ef,#0fb,#0f6,#0f2,#0f1,#5f0,#8f0,#9f0,#9f0,#9f0,#9f0,#8f0,#7f0,#9f0,#9f0,#8f0,#7f0,#5f0,#2f0,#0f0,#0f1,#0f0,#0f5,#0f6,#0f0,#0f3,#0f8,#0f1,#0f3,#0f4,#0f1,#0f5,#0f3,#0f2,#0f0,#2f0,#3f0,#3f0,#3f0,#4f0,#4f0,#5f0,#5f0,#7f0,#6f0,#5f0,#5f0,#4f0,#2f0,#0f0)"></i><i style="background:linear-gradient(#0df,#0df,#0fe,#0fd,#0fe,#0f9,#0f4,#1f0,#4f0,#9f0,#bf0,#bf0,#af0,#9f0,#af0,#af0,#af0,#bf0,#af0,#bf0,#af0,#9f0,#7f0,#5f0,#2f0,#3f0,#0f0,#0f1,#0f1,#0f1,#0f3,#0f2,#0f2,#0f4,#0f4,#0f3,#0f4,#0f3,#0f2,#0f1,#2f0,#3f0,#3f0,#4f0,#5f0,#6f0,#6f0,#6f0,#6f0,#6f0,#6f0,#6f0,#6f0,#5f0,#2f0)"></i><i style="background:linear-gradient(#0fb,#0fa,#0fa,#0fe,#0df,#0fc,#0f5,#0f0,#2f0,#7f0,#bf0,#bf0,#bf0,#bf0,#af0,#bf0,#bf0,#bf0,#9f0,#9f0,#bf0,#8f0,#6f0,#4f0,#3f0,#1f0,#2f0,#0f0,#0f0,#0f5,#3f0,#0f0,#0f1,#0f2,#0f1,#0f2,#0f1,#0f3,#0f4,#0f1,#3f0,#5f0,#6f0,#5f0,#5f0,#6f0,#6f0,#8f0,#7f0,#7f0,#7f0,#6f0,#6f0,#6f0,#2f0)"></i><i style="background:linear-gradient(#0fd,#0fb,#0ff,#0ef,#0fe,#0fb,#0fa,#0f6,#0f1,#4f0,#7f0,#7f0,#8f0,#8f0,#8f0,#7f0,#7f0,#6f0,#7f0,#7f0,#9f0,#5f0,#3f0,#3f0,#0f0,#0f8,#2f0,#0f0,#0f0,#0f5,#0f5,#0f3,#0f5,#0f3,#0f3,#0f2,#0f0,#0f1,#0f3,#0f3,#0f1,#1f0,#2f0,#1f0,#1f0,#2f0,#3f0,#5f0,#4f0,#4f0,#4f0,#5f0,#2f0,#3f0,#0f1)"></i><i style="background:linear-gradient(#0ef,#0ff,#0fa,#0ef,#0ff,#0ef,#0f7,#0f1,#4f0,#7f0,#af0,#8f0,#8f0,#9f0,#bf0,#8f0,#8f0,#8f0,#8f0,#8f0,#9f0,#6f0,#5f0,#4f0,#2f0,#1f0,#2f0,#0f3,#0f4,#0f0,#1f0,#0f6,#0f2,#0f3,#0f3,#0f6,#0f3,#0f2,#0f1,#0f0,#1f0,#4f0,#5f0,#5f0,#6f0,#5f0,#5f0,#5f0,#6f0,#5f0,#5f0,#5f0,#4f0,#4f0,#1f0)"></i><i style="background:linear-gradient(#0fe,#0fe,#0af,#0fb,#0af,#0af,#0ef,#0fb,#0f8,#0f1,#4f0,#6f0,#5f0,#4f0,#7f0,#7f0,#7f0,#7f0,#6f0,#5f0,#4f0,#5f0,#3f0,#0f0,#0f2,#0f9,#0f2,#0f3,#0f4,#0f3,#0f9,#0f8,#0f6,#0fa,#0fb,#0f7,#0f6,#0f6,#0f6,#0f6,#0f3,#0f0,#0f0,#1f0,#1f0,#1f0,#2f0,#3f0,#4f0,#3f0,#2f0,#1f0,#1f0,#2f0,#0f2)"></i><i style="background:linear-gradient(#0fe,#0fd,#0fc,#0fa,#0fa,#0ef,#0fc,#0f7,#0f7,#3f0,#8f0,#8f0,#9f0,#9f0,#9f0,#9f0,#8f0,#8f0,#7f0,#8f0,#8f0,#7f0,#5f0,#3f0,#1f0,#1f0,#2f0,#0f0,#0f1,#2f0,#0f1,#0f3,#0f5,#0f6,#0f6,#0f5,#0f1,#0f3,#0f1,#1f0,#2f0,#3f0,#4f0,#3f0,#4f0,#4f0,#5f0,#7f0,#6f0,#5f0,#4f0,#5f0,#5f0,#6f0,#2f0)"></i><i style="background:linear-gradient(#0fc,#0fb,#0f8,#0fd,#0fd,#0fc,#0f4,#1f0,#5f0,#9f0,#bf0,#af0,#af0,#af0,#bf0,#af0,#af0,#af0,#af0,#9f0,#af0,#9f0,#7f0,#5f0,#5f0,#2f0,#6f0,#5f0,#4f0,#0f2,#0f1,#1f0,#0f1,#0f0,#0f0,#2f0,#0f2,#0f2,#0f0,#1f0,#3f0,#7f0,#5f0,#6f0,#7f0,#7f0,#7f0,#7f0,#7f0,#9f0,#8f0,#6f0,#7f0,#7f0,#3f0)"></i><i style="background:linear-gradient(#0af,#0bf,#0fe,#0fe,#0df,#0ff,#0fa,#0f6,#0f7,#2f0,#4f0,#7f0,#7f0,#7f0,#6f0,#6f0,#5f0,#5f0,#6f0,#5f0,#7f0,#6f0,#4f0,#1f0,#1f0,#0f0,#2f0,#4f0,#3f0,#0f0,#0fa,#0f4,#0f5,#0f4,#0f3,#0f8,#0f3,#0f4,#0f4,#0f4,#0f2,#1f0,#3f0,#2f0,#3f0,#4f0,#5f0,#5f0,#4f0,#6f0,#5f0,#3f0,#4f0,#2f0,#1f0)"></i><i style="background:linear-gradient(#0f4,#0f3,#0f8,#0df,#09f,#0df,#0f8,#0f2,#1f0,#3f0,#7f0,#8f0,#8f0,#8f0,#7f0,#6f0,#7f0,#7f0,#6f0,#6f0,#7f0,#6f0,#4f0,#0f0,#0f1,#0f2,#4f0,#0f3,#0f4,#0f2,#0f5,#0f6,#0f6,#0f5,#0f4,#0f4,#0f7,#0f5,#0f6,#0f5,#0f2,#1f0,#1f0,#3f0,#3f0,#2f0,#3f0,#5f0,#4f0,#5f0,#4f0,#3f0,#4f0,#4f0,#0f0)"></i><i style="background:linear-gradient(#0fe,#0fe,#0fb,#0df,#0fd,#0f8,#0f3,#2f0,#7f0,#9f0,#8f0,#9f0,#af0,#af0,#bf0,#9f0,#9f0,#9f0,#9f0,#af0,#9f0,#7f0,#5f0,#4f0,#2f0,#1f0,#0f0,#3f0,#2f0,#2f0,#0f3,#0f6,#0f4,#0f5,#0f6,#0f2,#0f5,#0f2,#0f4,#0f2,#2f0,#2f0,#4f0,#4f0,#4f0,#5f0,#5f0,#4f0,#6f0,#5f0,#5f0,#7f0,#6f0,#2f0,#0f0)"></i><i style="background:linear-gradient(#0fc,#0fb,#0cf,#0ff,#0ff,#0fb,#0f7,#0f2,#1f0,#6f0,#8f0,#8f0,#af0,#af0,#7f0,#8f0,#9f0,#9f0,#8f0,#af0,#af0,#8f0,#6f0,#3f0,#1f0,#0f0,#0f1,#3f0,#2f0,#1f0,#0f5,#0f4,#0f5,#0f3,#0f2,#1f0,#0f5,#0f4,#0f3,#0f3,#0f2,#2f0,#2f0,#4f0,#4f0,#4f0,#6f0,#4f0,#7f0,#5f0,#5f0,#5f0,#4f0,#4f0,#0f1)"></i><i style="background:linear-gradient(#0ff,#0ef,#0fe,#0df,#0ff,#0f8,#0f2,#4f0,#af0,#df0,#cf0,#bf0,#bf0,#cf0,#af0,#af0,#bf0,#bf0,#bf0,#af0,#df0,#af0,#7f0,#4f0,#3f0,#0f1,#0f2,#1f0,#0f0,#4f0,#0f8,#0f0,#0f4,#0f2,#0f1,#0f4,#0f5,#0f1,#0f4,#0f1,#4f0,#3f0,#4f0,#5f0,#6f0,#5f0,#6f0,#6f0,#8f0,#6f0,#6f0,#6f0,#5f0,#5f0,#3f0)"></i><i style="background:linear-gradient(#0ff,#0fe,#0f8,#0ef,#0ff,#0df,#0fa,#0f4,#0f0,#7f0,#cf0,#cf0,#cf0,#cf0,#cf0,#bf0,#bf0,#df0,#df0,#df0,#df0,#9f0,#6f0,#4f0,#3f0,#2f0,#3f0,#1f0,#0f0,#1f0,#0f1,#0f1,#0f5,#0f4,#0f3,#0f1,#0f2,#0f4,#0f2,#2f0,#4f0,#3f0,#4f0,#4f0,#5f0,#6f0,#7f0,#8f0,#6f0,#5f0,#5f0,#8f0,#5f0,#4f0,#0f0)"></i><i style="background:linear-gradient(#0fc,#0fb,#0fc,#0fe,#0cf,#0fe,#0f5,#0f0,#4f0,#8f0,#bf0,#bf0,#bf0,#bf0,#af0,#bf0,#cf0,#cf0,#bf0,#af0,#bf0,#9f0,#7f0,#5f0,#3f0,#4f0,#0f2,#5f0,#4f0,#0f0,#0f6,#2f0,#0f2,#2f0,#3f0,#0f1,#0f1,#1f0,#0f0,#1f0,#3f0,#4f0,#5f0,#6f0,#6f0,#6f0,#7f0,#8f0,#6f0,#8f0,#7f0,#6f0,#8f0,#4f0,#3f0)"></i><i style="background:linear-gradient(#0fb,#0fa,#0fd,#0fe,#0fb,#0fa,#0f6,#0f2,#3f0,#6f0,#8f0,#9f0,#9f0,#8f0,#9f0,#8f0,#8f0,#9f0,#9f0,#9f0,#af0,#8f0,#6f0,#4f0,#2f0,#4f0,#3f0,#2f0,#1f0,#2f0,#1f0,#0f2,#0f2,#0f2,#0f2,#0f1,#1f0,#0f1,#0f1,#3f0,#6f0,#5f0,#5f0,#6f0,#7f0,#7f0,#7f0,#9f0,#9f0,#8f0,#8f0,#7f0,#8f0,#7f0,#2f0)"></i><i style="background:linear-gradient(#0fc,#0fc,#0fb,#0fc,#0fc,#0fb,#0f4,#1f0,#4f0,#3f0,#3f0,#5f0,#5f0,#5f0,#5f0,#5f0,#5f0,#6f0,#6f0,#5f0,#5f0,#2f0,#2f0,#1f0,#0f1,#0f2,#2f0,#0f1,#0f2,#0f4,#0f5,#0f7,#0f6,#0f5,#0f4,#0f4,#0f1,#0f3,#0f4,#0f2,#1f0,#3f0,#2f0,#3f0,#4f0,#5f0,#4f0,#6f0,#6f0,#4f0,#4f0,#4f0,#3f0,#4f0,#0f0)"></i><i style="background:linear-gradient(#0df,#0ef,#0fd,#0bf,#0fd,#0ff,#0fd,#0fa,#0f8,#0f2,#0f0,#0f0,#1f0,#1f0,#2f0,#0f0,#0f0,#1f0,#1f0,#1f0,#1f0,#0f1,#0f1,#1f0,#0f0,#2f0,#2f0,#0f2,#0f3,#0f3,#0f7,#0f6,#0f3,#0f3,#0f3,#0f2,#0f4,#0f0,#0f4,#0f4,#0f1,#2f0,#2f0,#3f0,#4f0,#5f0,#4f0,#5f0,#8f0,#7f0,#6f0,#5f0,#4f0,#4f0,#0f2)"></i><i style="background:linear-gradient(#00f,#00f,#30f,#00f,#0cf,#04f,#20f,#30f,#00f,#08f,#02f,#07f,#07f,#03f,#0ef,#0ff,#0fe,#0fa,#0f6,#0f3,#0f4,#0f6,#0f6,#0f5,#0f6,#0f5,#0f6,#0f4,#0f4,#0f5,#0f4,#0f4,#0f0,#1f0,#2f0,#0f2,#0f1,#0f5,#0f5,#0f5,#0f2,#2f0,#6f0,#7f0,#7f0,#7f0,#8f0,#8f0,#7f0,#6f0,#6f0,#6f0,#6f0,#5f0,#3f0)"></i><i style="background:linear-gradient(#60f,#60f,#60f,#10f,#50f,#20f,#01f,#01f,#09f,#40f,#10f,#40f,#30f,#01f,#20f,#30f,#40f,#40f,#10f,#10f,#40f,#20f,#20f,#30f,#00f,#00f,#08f,#0af,#0bf,#0fc,#0fd,#0bf,#0fb,#0fe,#0fa,#0f6,#0f4,#0f4,#0f7,#0f6,#0f2,#3f0,#5f0,#3f0,#3f0,#4f0,#5f0,#6f0,#6f0,#6f0,#5f0,#5f0,#7f0,#4f0,#1f0)"></i><i style="background:linear-gradient(#20f,#20f,#10f,#02f,#60f,#30f,#00f,#00f,#40f,#50f,#00f,#20f,#30f,#10f,#06f,#20f,#20f,#20f,#30f,#10f,#01f,#30f,#10f,#05f,#05f,#0fa,#0ff,#0fa,#0f9,#0f8,#0f8,#0fc,#0fc,#0fb,#0fb,#0f8,#0f7,#0f8,#0f9,#0f5,#1f0,#1f0,#4f0,#4f0,#4f0,#4f0,#5f0,#6f0,#5f0,#4f0,#4f0,#5f0,#4f0,#1f0,#1f0)"></i><i style="background:linear-gradient(#80f,#80f,#50f,#00f,#10f,#00f,#40f,#50f,#30f,#30f,#40f,#30f,#50f,#60f,#60f,#40f,#40f,#40f,#20f,#01f,#10f,#50f,#40f,#01f,#02f,#04f,#07f,#0df,#0ff,#0fc,#0f9,#0fe,#0fc,#0fc,#0fc,#0f9,#0fe,#0f8,#0f8,#0f7,#0f4,#3f0,#5f0,#4f0,#4f0,#5f0,#5f0,#6f0,#7f0,#5f0,#5f0,#5f0,#4f0,#3f0,#3f0)"></i><i style="background:linear-gradient(#40f,#40f,#80f,#70f,#70f,#60f,#20f,#10f,#50f,#80f,#70f,#40f,#40f,#50f,#80f,#80f,#50f,#40f,#60f,#30f,#40f,#80f,#70f,#30f,#04f,#01f,#05f,#0cf,#0df,#0fe,#0ff,#0fd,#0fb,#0fc,#0fb,#0f7,#0fe,#0f8,#0f9,#0f6,#0f0,#2f0,#3f0,#3f0,#3f0,#4f0,#6f0,#6f0,#7f0,#5f0,#5f0,#6f0,#5f0,#4f0,#2f0)"></i><i style="background:linear-gradient(#20f,#20f,#50f,#70f,#70f,#70f,#00f,#03f,#50f,#30f,#40f,#50f,#70f,#80f,#10f,#60f,#50f,#30f,#30f,#50f,#50f,#80f,#60f,#03f,#00f,#05f,#0fe,#0ff,#0fe,#0fc,#0fa,#0fd,#0fb,#0fc,#0fd,#0fb,#0fe,#0f8,#0f9,#0f8,#0f3,#2f0,#3f0,#3f0,#3f0,#4f0,#5f0,#3f0,#5f0,#6f0,#5f0,#4f0,#4f0,#3f0,#0f0)"></i><i style="background:linear-gradient(#20f,#20f,#30f,#03f,#00f,#10f,#30f,#30f,#06f,#40f,#02f,#05f,#30f,#80f,#70f,#01f,#10f,#20f,#10f,#20f,#20f,#30f,#20f,#01f,#20f,#08f,#0fe,#0cf,#0df,#0fa,#0ff,#0fd,#0fa,#0fa,#0fa,#0f9,#0fc,#0fc,#0fe,#0fa,#0f3,#1f0,#3f0,#3f0,#2f0,#1f0,#4f0,#4f0,#5f0,#3f0,#3f0,#4f0,#3f0,#2f0,#0f1)"></i><i style="background:linear-gradient(#80f,#80f,#10f,#30f,#70f,#60f,#60f,#60f,#60f,#00f,#50f,#60f,#50f,#60f,#80f,#40f,#50f,#60f,#60f,#50f,#00f,#60f,#50f,#10f,#10f,#0bf,#0df,#0fb,#0fa,#0ff,#0fa,#0ef,#0fc,#0fd,#0fd,#0f8,#0ff,#0fd,#0fb,#0f6,#0f2,#1f0,#2f0,#2f0,#2f0,#3f0,#3f0,#5f0,#4f0,#7f0,#6f0,#5f0,#4f0,#3f0,#0f1)"></i><i style="background:linear-gradient(#10f,#10f,#40f,#60f,#00f,#40f,#60f,#70f,#10f,#00f,#30f,#30f,#00f,#01f,#60f,#40f,#30f,#20f,#30f,#03f,#60f,#30f,#40f,#70f,#10f,#00f,#30f,#0ff,#0fe,#0fd,#0fb,#0ff,#0fb,#0fc,#0fb,#0f7,#0fa,#0f6,#0f7,#0f5,#0f1,#1f0,#5f0,#5f0,#6f0,#6f0,#5f0,#8f0,#6f0,#7f0,#7f0,#5f0,#7f0,#4f0,#1f0)"></i><i style="background:linear-gradient(#80f,#80f,#60f,#00f,#40f,#10f,#60f,#70f,#80f,#20f,#40f,#60f,#70f,#60f,#30f,#50f,#50f,#70f,#50f,#01f,#50f,#50f,#50f,#10f,#07f,#0cf,#0fe,#0fd,#0fc,#0fe,#08f,#0ff,#0fb,#0f8,#0f8,#0fc,#0fb,#0fb,#0fb,#0f8,#0f3,#1f0,#2f0,#3f0,#3f0,#4f0,#4f0,#3f0,#4f0,#4f0,#4f0,#4f0,#4f0,#3f0,#0f0)"></i><i style="background:linear-gradient(#70f,#70f,#30f,#10f,#60f,#00f,#20f,#40f,#01f,#70f,#40f,#30f,#00f,#05f,#01f,#20f,#20f,#10f,#20f,#20f,#50f,#30f,#30f,#20f,#03f,#02f,#0f9,#0f9,#0f8,#0fd,#0fa,#0f8,#0f8,#0fc,#0fa,#0f8,#0f7,#0f9,#0f7,#0f5,#0f1,#4f0,#5f0,#6f0,#6f0,#5f0,#6f0,#7f0,#8f0,#9f0,#9f0,#7f0,#6f0,#6f0,#3f0)"></i><i style="background:linear-gradient(#10f,#10f,#40f,#01f,#20f,#00f,#20f,#30f,#60f,#01f,#00f,#01f,#00f,#10f,#00f,#30f,#20f,#20f,#50f,#30f,#20f,#01f,#00f,#10f,#00f,#02f,#0fc,#0df,#0ef,#0fe,#0ff,#0fb,#0fa,#0fb,#0fa,#0f9,#0f9,#0f9,#0f7,#0f7,#0f5,#2f0,#2f0,#4f0,#4f0,#3f0,#4f0,#5f0,#6f0,#5f0,#5f0,#6f0,#4f0,#2f0,#0f0)"></i><i style="background:linear-gradient(#20f,#20f,#10f,#10f,#20f,#02f,#30f,#40f,#00f,#05f,#08f,#08f,#01f,#20f,#05f,#03f,#01f,#10f,#01f,#00f,#05f,#00f,#00f,#00f,#00f,#0cf,#03f,#0fd,#0fa,#0f9,#0ff,#0fb,#0f9,#0fc,#0fd,#0f7,#0f8,#0f9,#0fa,#0f7,#0f1,#2f0,#5f0,#5f0,#5f0,#5f0,#5f0,#5f0,#7f0,#4f0,#4f0,#5f0,#4f0,#3f0,#0f0)"></i><i style="background:linear-gradient(#60f,#60f,#40f,#40f,#20f,#50f,#50f,#50f,#30f,#50f,#30f,#40f,#50f,#50f,#50f,#40f,#20f,#00f,#10f,#04f,#50f,#20f,#20f,#01f,#06f,#0af,#0ef,#0df,#0ef,#0fc,#0ef,#0ff,#0fe,#0fb,#0fa,#0fe,#0fc,#0fb,#0f9,#0f6,#0f2,#2f0,#4f0,#4f0,#3f0,#3f0,#6f0,#3f0,#5f0,#3f0,#3f0,#4f0,#6f0,#3f0,#2f0)"></i><i style="background:linear-gradient(#70f,#70f,#60f,#40f,#60f,#70f,#20f,#00f,#70f,#60f,#70f,#40f,#30f,#40f,#60f,#70f,#60f,#50f,#60f,#20f,#70f,#00f,#10f,#50f,#10f,#30f,#40f,#05f,#0cf,#0fe,#0df,#0ff,#0ef,#0ff,#0fe,#0cf,#0fc,#0ff,#0fd,#0f9,#0f5,#1f0,#3f0,#2f0,#2f0,#2f0,#2f0,#3f0,#4f0,#3f0,#3f0,#4f0,#3f0,#3f0,#0f0)"></i><i style="background:linear-gradient(#40f,#40f,#50f,#50f,#20f,#60f,#20f,#00f,#70f,#60f,#50f,#60f,#60f,#50f,#60f,#30f,#40f,#60f,#50f,#02f,#30f,#50f,#50f,#40f,#50f,#20f,#0af,#0cf,#0ff,#0cf,#0fa,#0fd,#0fd,#0fd,#0fd,#0f9,#0f9,#0fc,#0fc,#0f8,#0f3,#2f0,#2f0,#2f0,#3f0,#3f0,#4f0,#5f0,#6f0,#4f0,#4f0,#4f0,#5f0,#2f0,#0f0)"></i><i style="background:linear-gradient(#03f,#03f,#60f,#30f,#20f,#10f,#30f,#40f,#50f,#10f,#30f,#30f,#20f,#20f,#30f,#05f,#01f,#30f,#30f,#10f,#10f,#50f,#40f,#10f,#20f,#01f,#0ff,#0fe,#0fc,#0fd,#0fd,#0ef,#0f8,#0fb,#0fc,#0f9,#0fa,#0fa,#0fa,#0f7,#0f3,#2f0,#2f0,#2f0,#3f0,#4f0,#5f0,#6f0,#6f0,#7f0,#6f0,#5f0,#4f0,#4f0,#1f0)"></i><i style="background:linear-gradient(#05f,#05f,#20f,#40f,#04f,#04f,#20f,#30f,#60f,#06f,#20f,#50f,#30f,#10f,#20f,#80f,#40f,#10f,#50f,#50f,#10f,#30f,#30f,#40f,#50f,#05f,#0af,#0fe,#0fe,#0fc,#0fc,#0f5,#0f8,#0fc,#0fb,#0f5,#0f5,#0f4,#0f5,#0f3,#2f0,#7f0,#6f0,#5f0,#7f0,#8f0,#7f0,#9f0,#8f0,#8f0,#7f0,#7f0,#5f0,#7f0,#3f0)"></i><i style="background:linear-gradient(#30f,#20f,#70f,#40f,#30f,#50f,#50f,#50f,#60f,#70f,#40f,#40f,#20f,#00f,#70f,#00f,#00f,#30f,#50f,#40f,#50f,#40f,#30f,#20f,#02f,#00f,#07f,#0ef,#0fe,#0ef,#0fc,#0fa,#0fb,#0fa,#0fa,#0fc,#0f7,#0f9,#0f8,#0f3,#3f0,#0f0,#2f0,#3f0,#4f0,#5f0,#7f0,#6f0,#6f0,#5f0,#5f0,#6f0,#4f0,#4f0,#2f0)"></i><i style="background:linear-gradient(#50f,#50f,#00f,#00f,#30f,#20f,#10f,#10f,#10f,#50f,#10f,#00f,#00f,#01f,#00f,#06f,#02f,#40f,#50f,#20f,#30f,#10f,#10f,#20f,#10f,#04f,#0f8,#0fc,#0fb,#0fb,#0fc,#0fc,#0fa,#0fa,#0f8,#0f7,#0f7,#0f5,#0f7,#0f4,#2f0,#5f0,#6f0,#7f0,#6f0,#6f0,#8f0,#7f0,#6f0,#9f0,#9f0,#8f0,#6f0,#4f0,#3f0)"></i><i style="background:linear-gradient(#20f,#20f,#02f,#80f,#40f,#40f,#40f,#40f,#10f,#20f,#20f,#10f,#20f,#30f,#10f,#50f,#40f,#30f,#20f,#40f,#50f,#50f,#50f,#30f,#06f,#0bf,#0fe,#0fc,#0fc,#0ff,#0fa,#0fb,#0fb,#0f7,#0f5,#0f4,#0f9,#0f8,#0f7,#0f5,#0f1,#3f0,#5f0,#4f0,#5f0,#5f0,#4f0,#7f0,#8f0,#6f0,#6f0,#6f0,#6f0,#6f0,#3f0)"></i><i style="background:linear-gradient(#00f,#01f,#30f,#10f,#40f,#20f,#30f,#40f,#40f,#50f,#10f,#00f,#04f,#0af,#00f,#60f,#40f,#20f,#50f,#50f,#01f,#08f,#0cf,#0df,#0ff,#0fc,#0ef,#0fa,#0f9,#0fa,#0cf,#0fb,#0fb,#0f8,#0f8,#0f6,#0fa,#0f8,#0fb,#0f5,#4f0,#4f0,#2f0,#4f0,#4f0,#4f0,#6f0,#5f0,#5f0,#5f0,#4f0,#5f0,#5f0,#2f0,#0f0)"></i><i style="background:linear-gradient(#00f,#00f,#00f,#50f,#30f,#00f,#05f,#06f,#03f,#04f,#10f,#20f,#00f,#03f,#00f,#04f,#03f,#00f,#02f,#0af,#05f,#01f,#00f,#20f,#07f,#10f,#0ff,#0df,#0ef,#0df,#0fa,#0ff,#0fe,#0fd,#0fb,#0fa,#0fa,#0f8,#0fb,#0fa,#0f4,#2f0,#4f0,#3f0,#4f0,#4f0,#5f0,#5f0,#5f0,#4f0,#4f0,#4f0,#5f0,#4f0,#1f0)"></i><i style="background:linear-gradient(#10f,#10f,#07f,#00f,#20f,#20f,#40f,#40f,#01f,#30f,#30f,#30f,#50f,#60f,#10f,#50f,#40f,#20f,#10f,#20f,#20f,#30f,#20f,#10f,#20f,#00f,#0cf,#0ff,#0fe,#0fc,#0f8,#0fe,#0f9,#0f9,#0f8,#0fa,#0ff,#0f7,#0f7,#0f5,#0f0,#3f0,#7f0,#4f0,#5f0,#6f0,#7f0,#6f0,#7f0,#7f0,#7f0,#6f0,#5f0,#6f0,#2f0)"></i><i style="background:linear-gradient(#01f,#01f,#40f,#50f,#20f,#20f,#30f,#40f,#30f,#20f,#50f,#40f,#30f,#40f,#40f,#70f,#50f,#30f,#30f,#20f,#60f,#00f,#00f,#30f,#00f,#07f,#07f,#0ff,#0fd,#0f9,#0f9,#0f9,#0fa,#0fc,#0fb,#0f6,#0fa,#0f8,#0f8,#0f7,#0f3,#4f0,#6f0,#6f0,#6f0,#7f0,#7f0,#7f0,#7f0,#7f0,#6f0,#5f0,#6f0,#5f0,#1f0)"></i><i style="background:linear-gradient(#60f,#60f,#70f,#10f,#50f,#40f,#70f,#80f,#30f,#20f,#30f,#40f,#60f,#80f,#80f,#80f,#70f,#70f,#80f,#80f,#40f,#50f,#50f,#40f,#70f,#30f,#06f,#0df,#0fd,#0fc,#0fb,#0f9,#0f9,#0f8,#0f8,#0fc,#0f6,#0fa,#0f9,#0f6,#0f3,#2f0,#1f0,#5f0,#4f0,#4f0,#5f0,#5f0,#5f0,#5f0,#5f0,#5f0,#4f0,#4f0,#2f0)"></i><i style="background:linear-gradient(#80f,#80f,#30f,#40f,#40f,#40f,#30f,#30f,#20f,#30f,#10f,#10f,#10f,#00f,#00f,#40f,#30f,#30f,#30f,#05f,#20f,#20f,#20f,#20f,#50f,#10f,#0bf,#0bf,#0ef,#0af,#0fd,#0ff,#0fe,#0fe,#0fe,#0fc,#0fa,#0fa,#0fa,#0f6,#0f0,#3f0,#1f0,#4f0,#5f0,#5f0,#5f0,#5f0,#7f0,#6f0,#5f0,#4f0,#5f0,#4f0,#0f0)"></i><i style="background:linear-gradient(#10f,#10f,#50f,#03f,#40f,#00f,#40f,#60f,#40f,#00f,#20f,#40f,#40f,#20f,#02f,#10f,#10f,#10f,#05f,#0bf,#00f,#00f,#00f,#00f,#08f,#0fc,#0fd,#0fc,#0fb,#0fd,#0f8,#0fb,#0fb,#0fb,#0fb,#0f9,#0f8,#0fb,#0f8,#0f3,#1f0,#2f0,#5f0,#7f0,#6f0,#5f0,#5f0,#8f0,#7f0,#6f0,#5f0,#4f0,#5f0,#4f0,#1f0)"></i><i style="background:linear-gradient(#50f,#50f,#00f,#20f,#30f,#10f,#50f,#60f,#01f,#40f,#30f,#10f,#30f,#50f,#20f,#00f,#02f,#07f,#0bf,#0ef,#0fd,#0f9,#0f8,#0f9,#0fb,#0f8,#0f8,#0f9,#0f8,#0f9,#0f8,#0fa,#0f8,#0fa,#0fa,#0fa,#0f6,#0f9,#0f7,#0f4,#0f0,#3f0,#5f0,#4f0,#5f0,#6f0,#7f0,#7f0,#8f0,#6f0,#5f0,#6f0,#5f0,#6f0,#2f0)"></i><i style="background:linear-gradient(#08f,#08f,#30f,#20f,#10f,#20f,#20f,#20f,#00f,#30f,#01f,#00f,#00f,#04f,#03f,#0af,#0ef,#0ff,#0cf,#0ef,#0df,#0fd,#0fd,#0ef,#0cf,#0fc,#0fc,#0ff,#0ff,#0fc,#0f5,#0fe,#0fa,#0f8,#0f7,#0fa,#0f5,#0fa,#0f9,#0f7,#0f3,#3f0,#5f0,#3f0,#4f0,#4f0,#4f0,#5f0,#4f0,#5f0,#5f0,#4f0,#6f0,#4f0,#1f0)"></i><i style="background:linear-gradient(#01f,#01f,#05f,#01f,#30f,#08f,#05f,#03f,#0cf,#06f,#0bf,#0af,#0af,#0ef,#0ff,#0ff,#0fd,#0fc,#0fd,#0ff,#0fd,#0f8,#0f8,#0f9,#0f8,#0fd,#0fc,#0fa,#0f9,#0f9,#0f8,#0fc,#0f9,#0f8,#0f8,#0f4,#0fe,#0f8,#0f8,#0f4,#1f0,#3f0,#3f0,#5f0,#4f0,#4f0,#6f0,#5f0,#8f0,#6f0,#6f0,#6f0,#4f0,#6f0,#2f0)"></i><i style="background:linear-gradient(#03f,#03f,#07f,#03f,#40f,#00f,#10f,#20f,#00f,#20f,#01f,#02f,#03f,#07f,#0ef,#0bf,#0ff,#0fc,#0fd,#0ff,#0f6,#0fa,#0fb,#0fc,#0fd,#0fa,#0f8,#0f9,#0f8,#0fb,#0fb,#0fc,#0f8,#0f6,#0f5,#0f5,#0f8,#0f8,#0f9,#0f8,#0f4,#1f0,#3f0,#2f0,#3f0,#4f0,#5f0,#6f0,#4f0,#6f0,#6f0,#5f0,#4f0,#5f0,#2f0)"></i><i style="background:linear-gradient(#0bf,#0bf,#0ef,#0ff,#0df,#0fe,#0fc,#0fb,#0fc,#0ff,#0fe,#0fe,#0fe,#0fe,#0fb,#0fe,#0fc,#0fb,#0fc,#0fd,#0f8,#0fc,#0fc,#0fc,#0fa,#0fc,#0fc,#0fd,#0fc,#0f9,#0fa,#0f1,#0f4,#0f5,#0f5,#0f6,#0f6,#0f8,#0f9,#0f6,#0f0,#4f0,#6f0,#5f0,#5f0,#5f0,#6f0,#6f0,#6f0,#6f0,#6f0,#6f0,#5f0,#4f0,#1f0)"></i><i style="background:linear-gradient(#10f,#10f,#10f,#00f,#10f,#03f,#06f,#07f,#03f,#08f,#0bf,#03f,#05f,#0ef,#0df,#0af,#0bf,#0ef,#0fd,#0fc,#0f7,#0f8,#0f9,#0fb,#0fd,#0fb,#0fa,#0fc,#0fb,#0fa,#0f7,#0f9,#0fa,#0f5,#0f3,#0f8,#0f3,#0f4,#0f7,#0f6,#0f2,#3f0,#5f0,#4f0,#5f0,#6f0,#5f0,#5f0,#6f0,#7f0,#6f0,#5f0,#4f0,#3f0,#1f0)"></i><i style="background:linear-gradient(#02f,#02f,#05f,#0fe,#04f,#0bf,#06f,#04f,#03f,#04f,#07f,#06f,#09f,#0ef,#0ff,#0bf,#0cf,#0df,#0ff,#0fc,#0f9,#0fe,#0fd,#0f9,#0fa,#0fa,#0fb,#0ef,#0fe,#0f5,#0f8,#0f6,#0fa,#0f8,#0f7,#0f4,#0f5,#0f2,#0f5,#0f2,#3f0,#4f0,#5f0,#5f0,#6f0,#7f0,#7f0,#7f0,#7f0,#6f0,#6f0,#7f0,#5f0,#5f0,#0f0)"></i><i style="background:linear-gradient(#09f,#09f,#07f,#04f,#20f,#0cf,#09f,#07f,#06f,#10f,#0af,#0af,#08f,#0bf,#0af,#0fd,#0fe,#0fe,#0fd,#0bf,#0ff,#0f9,#0f9,#0fa,#0f9,#0ff,#0ff,#0fa,#0f9,#0fb,#0f8,#0f3,#0f7,#0f3,#0f1,#0f5,#0f7,#0f6,#0f6,#0f3,#1f0,#1f0,#2f0,#3f0,#3f0,#4f0,#5f0,#4f0,#3f0,#7f0,#6f0,#3f0,#2f0,#3f0,#0f1)"></i><i style="background:linear-gradient(#03f,#03f,#0af,#02f,#04f,#03f,#05f,#06f,#06f,#20f,#10f,#00f,#10f,#00f,#0df,#0cf,#0ef,#0fe,#0fe,#0ff,#0ff,#0fd,#0fd,#0fa,#0fe,#0fb,#0fe,#0fc,#0fb,#0f6,#0f9,#0f8,#0fb,#0f8,#0f8,#0f3,#0f3,#0f1,#0f5,#0f5,#0f1,#3f0,#3f0,#4f0,#5f0,#6f0,#5f0,#4f0,#5f0,#5f0,#5f0,#5f0,#4f0,#4f0,#0f0)"></i><i style="background:linear-gradient(#40f,#40f,#01f,#20f,#07f,#04f,#02f,#02f,#04f,#00f,#04f,#08f,#0bf,#0ef,#0df,#0ff,#0fe,#0fe,#0fc,#0f8,#0fb,#0fa,#0fa,#0fa,#0fe,#0f7,#0fd,#0fe,#0fb,#0f5,#0f1,#0f5,#0f4,#0f3,#0f2,#0f2,#0f1,#0f4,#0f4,#0f3,#0f1,#4f0,#3f0,#5f0,#6f0,#7f0,#7f0,#7f0,#7f0,#5f0,#5f0,#7f0,#4f0,#5f0,#1f0)"></i><i style="background:linear-gradient(#10f,#10f,#03f,#09f,#04f,#03f,#09f,#0bf,#01f,#0bf,#08f,#05f,#08f,#0bf,#0fb,#0f9,#0fb,#0fd,#0fb,#0fd,#0fd,#0cf,#0cf,#0ef,#0fd,#0fb,#0f9,#0f7,#0f6,#0fb,#0f9,#0f3,#0f4,#0f3,#0f3,#0f2,#0f1,#0f5,#0f3,#0f3,#0f3,#2f0,#3f0,#2f0,#3f0,#4f0,#4f0,#3f0,#6f0,#4f0,#4f0,#4f0,#5f0,#2f0,#0f0)"></i><i style="background:linear-gradient(#02f,#02f,#06f,#04f,#06f,#07f,#05f,#04f,#06f,#0df,#05f,#05f,#08f,#09f,#0fc,#0fd,#0fd,#0fd,#0fb,#0fd,#0fd,#0fe,#0fe,#0fe,#0fb,#0fd,#0ef,#0fb,#0f9,#0f5,#0f2,#0f4,#0f3,#0f7,#0f8,#0f4,#0f7,#0f4,#0f3,#0f5,#0f4,#1f0,#3f0,#2f0,#2f0,#3f0,#4f0,#4f0,#4f0,#4f0,#4f0,#5f0,#3f0,#3f0,#0f0)"></i><i style="background:linear-gradient(#00f,#00f,#05f,#01f,#06f,#09f,#06f,#05f,#05f,#0df,#06f,#01f,#05f,#09f,#0ef,#0ef,#0ef,#0fe,#0fb,#0fb,#0fa,#0fb,#0fb,#0fa,#0fa,#0fc,#0fb,#0ef,#0fc,#0f6,#0f7,#0f5,#0f3,#1f0,#2f0,#0f1,#0f2,#0f0,#0f1,#0f0,#2f0,#5f0,#6f0,#4f0,#5f0,#5f0,#6f0,#7f0,#6f0,#5f0,#5f0,#6f0,#6f0,#6f0,#1f0)"></i><i style="background:linear-gradient(#09f,#09f,#04f,#06f,#0cf,#10f,#09f,#0ef,#0ef,#0ff,#0fe,#0ff,#0fd,#0fb,#0fe,#0fb,#0fc,#0fd,#0fc,#0fc,#0df,#0fc,#0fc,#0fc,#0ef,#0fd,#0fd,#0fc,#0fa,#0f8,#0f6,#0f5,#0f3,#0f6,#0f7,#0f7,#0f3,#0f3,#0f2,#1f0,#2f0,#1f0,#3f0,#3f0,#3f0,#3f0,#4f0,#3f0,#6f0,#4f0,#3f0,#5f0,#4f0,#1f0,#0f0)"></i><i style="background:linear-gradient(#0ff,#0fe,#0df,#0fd,#0ff,#0bf,#0ef,#0ff,#0ff,#0fb,#0fa,#0fa,#0ef,#09f,#0fa,#0fc,#0fd,#0fc,#0fa,#0fa,#0f8,#0f4,#0f6,#0fc,#0fd,#0fa,#0ff,#0fe,#0fc,#0f6,#0f7,#0f0,#0f2,#0f6,#0f7,#0f1,#0f5,#0f0,#0f2,#0f2,#0f0,#3f0,#3f0,#4f0,#4f0,#4f0,#5f0,#5f0,#6f0,#5f0,#4f0,#4f0,#3f0,#2f0,#0f0)"></i><i style="background:linear-gradient(#08f,#0bf,#0ef,#0cf,#0bf,#0df,#0cf,#0cf,#0fa,#0fc,#0fc,#0fa,#0f9,#0f9,#0fc,#0f9,#0fa,#0fb,#0fa,#0f6,#0fa,#0f8,#0f8,#0fa,#0f8,#0f9,#0f9,#0fa,#0f8,#0f4,#0f3,#0f6,#0f3,#0f3,#0f3,#0f4,#2f0,#0f1,#0f1,#0f0,#2f0,#6f0,#4f0,#5f0,#5f0,#6f0,#7f0,#7f0,#7f0,#9f0,#8f0,#6f0,#7f0,#5f0,#3f0)"></i><i style="background:linear-gradient(#0fb,#0fb,#09f,#07f,#0fd,#0fc,#06f,#09f,#0df,#0cf,#0ef,#0fe,#0fc,#0fb,#0f6,#0fe,#0fe,#0fd,#0fa,#0f8,#0f7,#0f9,#0f9,#0f8,#0f9,#0f6,#0fa,#0fc,#0fa,#0f6,#0f1,#1f0,#1f0,#0f2,#0f2,#0f3,#3f0,#0f0,#0f0,#1f0,#2f0,#4f0,#5f0,#6f0,#5f0,#4f0,#2f0,#6f0,#6f0,#7f0,#6f0,#5f0,#5f0,#3f0,#1f0)"></i><i style="background:linear-gradient(#0af,#0af,#00f,#04f,#10f,#06f,#09f,#0cf,#0fd,#0fd,#0fa,#0fd,#0fc,#0f8,#0fa,#0fd,#0fb,#0fa,#0fc,#0fb,#0fa,#0f5,#0f6,#0f8,#0fc,#0f9,#0fc,#0f9,#0f7,#0f7,#0f1,#2f0,#0f4,#0f1,#0f0,#0f1,#0f3,#0f1,#0f3,#0f1,#2f0,#3f0,#6f0,#6f0,#6f0,#5f0,#6f0,#6f0,#6f0,#7f0,#7f0,#6f0,#6f0,#3f0,#1f0)"></i><i style="background:linear-gradient(#0f9,#0f8,#0fd,#0fc,#0fc,#0df,#0fd,#0fb,#0f9,#0f9,#0fa,#0fa,#0f7,#0f5,#0f8,#0fa,#0fa,#0f8,#0f7,#0f9,#0f6,#0fb,#0fb,#0f9,#0fd,#0fc,#0fb,#0f6,#0f4,#1f0,#0f1,#0f1,#0f1,#0f2,#0f3,#4f0,#0f3,#0f3,#0f2,#0f0,#2f0,#4f0,#6f0,#8f0,#7f0,#5f0,#5f0,#5f0,#8f0,#9f0,#8f0,#7f0,#7f0,#6f0,#2f0)"></i><i style="background:linear-gradient(#0f8,#0f8,#0cf,#0bf,#0ff,#0ef,#0fc,#0fa,#0fa,#0fe,#0fc,#0fa,#0f8,#0f7,#0fb,#0f4,#0f6,#0f9,#0f9,#0f6,#0f5,#0fa,#0f9,#0f6,#0fa,#0f9,#0f8,#0fb,#0f9,#0f6,#0f7,#0f5,#0f2,#0f4,#0f4,#0f0,#0f3,#0f3,#0f1,#0f1,#1f0,#4f0,#3f0,#5f0,#5f0,#5f0,#8f0,#6f0,#7f0,#6f0,#6f0,#6f0,#4f0,#6f0,#1f0)"></i><i style="background:linear-gradient(#09f,#09f,#00f,#09f,#05f,#08f,#0bf,#0df,#0fb,#0fa,#0fc,#0fa,#0f8,#0f8,#0f9,#0fa,#0fa,#0f8,#0f8,#0f9,#0fa,#0fa,#0fa,#0fa,#0f6,#0f7,#0fc,#0fa,#0f8,#0f1,#0f2,#2f0,#0f2,#0f2,#0f1,#0f2,#0f4,#0f1,#0f1,#0f3,#1f0,#4f0,#5f0,#6f0,#7f0,#8f0,#9f0,#7f0,#9f0,#9f0,#9f0,#8f0,#6f0,#5f0,#1f0)"></i><i style="background:linear-gradient(#0fe,#0fe,#0bf,#0cf,#0ef,#0ff,#0ff,#0ff,#0fc,#0fc,#0fd,#0fd,#0f8,#0f5,#0f4,#0fb,#0f9,#0f7,#0f7,#0f5,#0f8,#0f7,#0f8,#0f8,#0f7,#0f9,#0f2,#0f4,#0f2,#0f6,#0f2,#0f2,#0f2,#0f0,#0f0,#0f2,#0f3,#0f2,#0f1,#0f0,#2f0,#5f0,#4f0,#4f0,#4f0,#5f0,#6f0,#6f0,#7f0,#7f0,#7f0,#8f0,#7f0,#7f0,#3f0)"></i><i style="background:linear-gradient(#0af,#0bf,#07f,#0bf,#0cf,#0cf,#0df,#0ef,#0fb,#0f9,#0f9,#0f9,#0f9,#0f8,#0f8,#0f6,#0f9,#0fb,#0f9,#0fb,#0f8,#0f7,#0f7,#0f9,#0f9,#0fa,#0f7,#0f6,#0f4,#0f3,#0f6,#0f0,#1f0,#0f1,#0f1,#0f3,#0f6,#0f4,#0f4,#0f2,#0f0,#3f0,#2f0,#3f0,#4f0,#5f0,#6f0,#5f0,#5f0,#7f0,#6f0,#5f0,#3f0,#3f0,#1f0)"></i><i style="background:linear-gradient(#06f,#08f,#06f,#0af,#0bf,#0bf,#0ff,#0fd,#0cf,#09f,#0ef,#0ff,#0fd,#0fb,#0fb,#0f9,#0fa,#0fc,#0fd,#0fe,#0f7,#0fd,#0fc,#0f8,#0fb,#0f9,#0fe,#0f8,#0f7,#0f5,#0f4,#0f3,#0f3,#0f5,#0f6,#1f0,#0f0,#0f3,#0f3,#0f3,#0f2,#0f0,#0f0,#2f0,#2f0,#2f0,#2f0,#2f0,#4f0,#5f0,#4f0,#2f0,#1f0,#1f0,#0f1)"></i><i style="background:linear-gradient(#0ef,#0ff,#04f,#02f,#0cf,#0af,#0cf,#0df,#0bf,#0fc,#0fd,#0fa,#0f8,#0f9,#0f6,#0fe,#0fb,#0f8,#0fa,#0f9,#0f6,#0f7,#0f8,#0f9,#0f7,#0f8,#0fb,#0f6,#0f4,#0f3,#0f3,#0f4,#0f6,#0f3,#0f2,#0f4,#0f3,#0f2,#0f5,#0f3,#0f0,#3f0,#3f0,#2f0,#4f0,#5f0,#5f0,#4f0,#5f0,#4f0,#4f0,#6f0,#5f0,#3f0,#0f1)"></i><i style="background:linear-gradient(#0ff,#0fe,#09f,#0bf,#09f,#0bf,#0df,#0ff,#0fd,#0f8,#0fb,#0fb,#0f8,#0f7,#0fa,#0fa,#0f9,#0fa,#0fc,#0fc,#0fa,#0fb,#0fa,#0f8,#0fc,#0f6,#0fd,#0f8,#0f6,#0f5,#0f1,#0f4,#0f3,#0f1,#0f1,#0f5,#0f4,#0f8,#0f6,#0f3,#0f1,#2f0,#4f0,#1f0,#2f0,#3f0,#2f0,#5f0,#5f0,#4f0,#4f0,#4f0,#3f0,#2f0,#0f1)"></i><i style="background:linear-gradient(#0af,#0cf,#07f,#0df,#0df,#0ef,#0fc,#0fa,#0f9,#0f9,#0f7,#0f6,#0f4,#0f4,#0f6,#0f4,#0f5,#0f7,#0f6,#0f3,#0f7,#0f7,#0f6,#0f6,#0f5,#0f7,#0fc,#0f8,#0f6,#0f8,#0f6,#0f0,#0f2,#0f0,#0f0,#1f0,#0f5,#0f0,#0f1,#0f0,#2f0,#4f0,#4f0,#4f0,#5f0,#6f0,#7f0,#6f0,#7f0,#7f0,#7f0,#7f0,#7f0,#5f0,#2f0)"></i><i style="background:linear-gradient(#0fd,#0fc,#09f,#0fc,#0ff,#0fe,#0af,#09f,#0fb,#0f8,#0f9,#0f7,#0f7,#0f9,#0f7,#0f8,#0f9,#0f9,#0f7,#0f7,#0f7,#0f8,#0f7,#0f7,#0f4,#0f7,#0f5,#0f6,#0f5,#0f4,#0f3,#0f3,#0f2,#0f2,#0f2,#0f4,#0f4,#0f2,#0f0,#1f0,#1f0,#2f0,#4f0,#3f0,#3f0,#3f0,#4f0,#5f0,#4f0,#4f0,#4f0,#4f0,#4f0,#2f0,#0f0)"></i><i style="background:linear-gradient(#0ef,#0ff,#0ef,#0ff,#0fd,#0ef,#0fe,#0fc,#0f9,#0f9,#0f7,#0f7,#0f8,#0f8,#0f3,#0f5,#0f7,#0fb,#0f8,#0f3,#0f4,#0f7,#0f7,#0fb,#0f9,#0f5,#0f9,#0f9,#0f8,#0f7,#0f4,#0f3,#0f5,#0f2,#0f1,#0f6,#0f4,#0f1,#0f1,#0f1,#0f0,#2f0,#4f0,#4f0,#3f0,#3f0,#4f0,#3f0,#3f0,#4f0,#4f0,#4f0,#3f0,#1f0,#0f0)"></i><i style="background:linear-gradient(#02f,#08f,#0cf,#0bf,#0fd,#0fd,#0fc,#0fa,#0fa,#0f6,#0f5,#0f5,#0f8,#0f9,#0f6,#0f9,#0f7,#0f5,#0f5,#0f8,#0fa,#0f8,#0f8,#0f7,#0f5,#0f5,#0f7,#0f7,#0f6,#0f5,#0f3,#1f0,#0f0,#0f1,#0f0,#0f3,#1f0,#0f2,#0f3,#0f1,#1f0,#2f0,#2f0,#5f0,#5f0,#5f0,#6f0,#8f0,#6f0,#5f0,#5f0,#6f0,#5f0,#3f0,#1f0)"></i><i style="background:linear-gradient(#0fa,#0fb,#0fa,#0ef,#0fd,#0fe,#0fb,#0f8,#0f5,#0f8,#0f8,#0f6,#0f5,#0f5,#0f6,#0f6,#0f6,#0f5,#0f3,#0f2,#0f7,#0f8,#0f7,#0f3,#0f7,#0f7,#0f7,#0f5,#0f4,#0f3,#0f5,#0f3,#0f0,#0f2,#0f2,#0f3,#0f4,#0f3,#0f5,#0f2,#1f0,#1f0,#0f0,#1f0,#2f0,#3f0,#4f0,#4f0,#4f0,#4f0,#3f0,#3f0,#4f0,#1f0,#0f1)"></i><i style="background:linear-gradient(#0f7,#0f7,#0f5,#0f5,#0f6,#0f4,#0f8,#0f9,#0f4,#0f8,#0f8,#0f7,#0f6,#0f6,#0f5,#0f8,#0fa,#0fa,#0f6,#0f4,#0f5,#0f4,#0f4,#0f4,#0f4,#0f7,#0f7,#0f6,#0f6,#0f2,#0f5,#0f2,#0f2,#0f3,#0f3,#0f3,#0f3,#0f7,#0f4,#0f1,#0f0,#2f0,#2f0,#2f0,#2f0,#3f0,#4f0,#6f0,#5f0,#4f0,#4f0,#3f0,#4f0,#2f0,#0f2)"></i><i style="background:linear-gradient(#1f0,#1f0,#0f3,#0f0,#0f3,#0f1,#1f0,#2f0,#0f1,#0f1,#0f1,#0f2,#1f0,#3f0,#2f0,#0f5,#0f2,#1f0,#0f3,#0f6,#1f0,#0f1,#0f2,#0f3,#0f6,#0f0,#0f0,#0f5,#0f4,#3f0,#0f2,#4f0,#0f0,#0f1,#0f0,#0f2,#3f0,#2f0,#1f0,#1f0,#3f0,#3f0,#6f0,#6f0,#6f0,#7f0,#8f0,#8f0,#9f0,#7f0,#7f0,#7f0,#7f0,#4f0,#4f0)"></i><i style="background:linear-gradient(#0f4,#0f4,#0f5,#0f2,#0f0,#0f3,#0f1,#0f1,#0f4,#0f2,#0f3,#0f6,#0f2,#1f0,#0f5,#0f3,#0f3,#0f4,#0f3,#0f0,#0f0,#0f0,#0f0,#0f3,#0f2,#0f4,#0f4,#0f4,#0f4,#0f3,#0f1,#0f1,#0f3,#0f6,#0f7,#0f1,#4f0,#0f1,#0f3,#0f1,#1f0,#2f0,#2f0,#3f0,#4f0,#5f0,#4f0,#3f0,#5f0,#4f0,#4f0,#5f0,#5f0,#2f0,#2f0)"></i><i style="background:linear-gradient(#0f0,#0f0,#0f3,#0f4,#0f1,#0f0,#3f0,#3f0,#0f2,#0f3,#0f5,#0f4,#0f2,#0f2,#0f4,#0f1,#0f2,#0f2,#0f2,#0f6,#0f0,#2f0,#1f0,#0f3,#0f3,#3f0,#0f3,#0f2,#0f2,#0f3,#0f4,#0f4,#0f0,#0f2,#0f2,#0f4,#0f2,#0f2,#0f3,#0f4,#0f1,#1f0,#1f0,#2f0,#2f0,#2f0,#3f0,#4f0,#5f0,#5f0,#4f0,#2f0,#4f0,#1f0,#0f0)"></i><i style="background:linear-gradient(#0f1,#0f1,#5f0,#1f0,#0f2,#0f1,#0f0,#0f0,#0f1,#0f0,#1f0,#1f0,#1f0,#1f0,#0f1,#0f0,#0f0,#1f0,#3f0,#0f0,#2f0,#2f0,#2f0,#2f0,#0f0,#0f0,#0f1,#0f2,#0f3,#2f0,#3f0,#0f4,#0f2,#0f0,#0f0,#0f2,#0f3,#0f2,#0f3,#0f2,#1f0,#5f0,#5f0,#4f0,#6f0,#7f0,#7f0,#6f0,#7f0,#6f0,#6f0,#7f0,#5f0,#4f0,#1f0)"></i><i style="background:linear-gradient(#1f0,#1f0,#0f2,#0f3,#0f6,#1f0,#1f0,#0f0,#0f5,#0f3,#0f4,#0f4,#0f4,#0f4,#0f0,#0f4,#0f4,#0f3,#0f3,#0f5,#0f0,#0f5,#0f4,#0f2,#0f5,#0f0,#0f4,#0f2,#0f2,#1f0,#1f0,#1f0,#2f0,#0f0,#0f1,#0f1,#0f1,#0f6,#0f5,#0f4,#0f0,#4f0,#4f0,#4f0,#4f0,#5f0,#5f0,#6f0,#5f0,#6f0,#6f0,#5f0,#4f0,#4f0,#2f0)"></i><i style="background:linear-gradient(#0fb,#0fb,#0f7,#0f0,#0f4,#0f4,#0f3,#0f3,#0f8,#0f9,#0f6,#0f5,#0f6,#0f6,#0f8,#0f8,#0f7,#0f7,#0f8,#0f7,#0f8,#0f4,#0f4,#0f4,#0f6,#0f2,#0f5,#0f8,#0f7,#0f0,#0f3,#2f0,#0f2,#0f0,#1f0,#0f5,#0f8,#0f2,#0f2,#0f0,#1f0,#3f0,#3f0,#5f0,#5f0,#5f0,#5f0,#6f0,#5f0,#6f0,#5f0,#5f0,#4f0,#2f0,#1f0)"></i><i style="background:linear-gradient(#0ef,#0ff,#0fa,#0fd,#0fb,#0fe,#0ff,#0fe,#0f8,#0fb,#0fa,#0f6,#0f6,#0f8,#0f5,#0f9,#0f8,#0f7,#0f6,#0f9,#0f9,#0f8,#0f8,#0fa,#0f9,#0fa,#0f7,#0fa,#0f8,#0f5,#0f8,#0f4,#0f0,#0f1,#0f1,#0f2,#1f0,#0f2,#0f0,#0f1,#0f1,#3f0,#1f0,#2f0,#3f0,#4f0,#4f0,#5f0,#6f0,#6f0,#5f0,#3f0,#3f0,#3f0,#0f0)"></i><i style="background:linear-gradient(#09f,#09f,#01f,#00f,#03f,#08f,#03f,#07f,#0fe,#0ff,#0fd,#0fc,#0fc,#0fb,#0fe,#0f9,#0f8,#0fa,#0fc,#0f9,#0f9,#0fc,#0fc,#0fc,#0f9,#0fa,#0fe,#0fb,#0f9,#0f6,#0f3,#0f4,#0f0,#0f1,#0f1,#0f4,#0f0,#2f0,#0f2,#0f3,#0f0,#2f0,#4f0,#3f0,#3f0,#3f0,#4f0,#5f0,#7f0,#4f0,#3f0,#4f0,#4f0,#2f0,#0f1)"></i><i style="background:linear-gradient(#10f,#10f,#08f,#0cf,#10f,#07f,#09f,#09f,#05f,#0fd,#0ef,#0fe,#0fb,#0fa,#0fd,#0fc,#0fc,#0fc,#0fb,#0fb,#0fa,#0fb,#0fb,#0fa,#0fb,#0ff,#0f8,#0fb,#0f9,#0f6,#0f2,#0f4,#0f3,#0f1,#0f1,#0f2,#0f1,#0f0,#0f1,#0f2,#0f0,#3f0,#4f0,#2f0,#2f0,#3f0,#4f0,#5f0,#6f0,#3f0,#3f0,#4f0,#5f0,#3f0,#0f0)"></i><i style="background:linear-gradient(#20f,#10f,#00f,#06f,#05f,#04f,#03f,#03f,#04f,#03f,#07f,#02f,#00f,#01f,#0bf,#08f,#0bf,#0cf,#0df,#0ef,#0bf,#07f,#09f,#0fc,#0fc,#0ff,#0fa,#0fd,#0fb,#0fc,#0f5,#0f5,#0f0,#0f3,#0f4,#0f5,#0f5,#0f5,#0f5,#0f4,#0f1,#1f0,#0f0,#0f0,#2f0,#3f0,#4f0,#3f0,#6f0,#3f0,#3f0,#3f0,#4f0,#2f0,#0f1)"></i><i style="background:linear-gradient(#04f,#04f,#0fe,#09f,#0af,#07f,#0ff,#0fd,#05f,#0af,#0ef,#0fe,#0ff,#0ff,#0fd,#0ff,#0fd,#0fb,#0fc,#0fb,#0fd,#0f8,#0f9,#0fc,#0fc,#0fa,#0ff,#0fd,#0fa,#0f7,#0f2,#1f0,#2f0,#0f0,#0f0,#2f0,#0f0,#0f5,#0f4,#0f0,#2f0,#4f0,#3f0,#7f0,#7f0,#6f0,#6f0,#7f0,#8f0,#6f0,#6f0,#6f0,#6f0,#3f0,#1f0)"></i><i style="background:linear-gradient(#0cf,#0cf,#0ef,#08f,#06f,#03f,#08f,#0af,#0bf,#09f,#07f,#0cf,#0df,#0df,#0df,#0cf,#0ef,#0fe,#0fe,#0ff,#0fb,#0fc,#0fb,#0fc,#0bf,#0fc,#0f9,#0ff,#0fc,#0f8,#0f2,#0f4,#0f3,#0f3,#0f4,#0f3,#2f0,#0f2,#0f3,#0f1,#1f0,#2f0,#1f0,#1f0,#2f0,#4f0,#4f0,#6f0,#4f0,#5f0,#4f0,#3f0,#4f0,#4f0,#0f0)"></i><i style="background:linear-gradient(#01f,#01f,#04f,#07f,#00f,#0cf,#03f,#00f,#04f,#03f,#08f,#0fd,#0ef,#08f,#08f,#06f,#07f,#0af,#0af,#0af,#0df,#0ff,#0fe,#0fb,#0fd,#0fc,#0fd,#0fd,#0fb,#0f7,#0f4,#1f0,#1f0,#3f0,#3f0,#1f0,#0f3,#3f0,#1f0,#0f0,#1f0,#3f0,#4f0,#3f0,#4f0,#5f0,#6f0,#7f0,#7f0,#5f0,#5f0,#5f0,#6f0,#6f0,#1f0)"></i><i style="background:linear-gradient(#40f,#40f,#08f,#02f,#07f,#08f,#03f,#02f,#00f,#30f,#05f,#04f,#02f,#07f,#05f,#01f,#09f,#0ef,#0cf,#0bf,#0fb,#0fc,#0fc,#0fd,#0fb,#0fd,#0fd,#0fa,#0f8,#0f5,#0f5,#0f4,#0f2,#0f3,#0f3,#2f0,#0f3,#2f0,#0f1,#0f0,#2f0,#2f0,#3f0,#3f0,#3f0,#3f0,#4f0,#5f0,#6f0,#5f0,#5f0,#5f0,#4f0,#4f0,#0f0)"></i><i style="background:linear-gradient(#10f,#10f,#50f,#50f,#10f,#08f,#04f,#02f,#10f,#04f,#00f,#10f,#10f,#20f,#05f,#01f,#04f,#0af,#0ef,#0ff,#0fa,#0df,#0ff,#0fc,#0fc,#0f9,#0fb,#0df,#0fe,#0f3,#0f4,#0f2,#0f4,#0f3,#0f2,#0f3,#0f6,#1f0,#0f0,#0f3,#0f1,#2f0,#4f0,#4f0,#4f0,#4f0,#5f0,#4f0,#4f0,#6f0,#5f0,#5f0,#4f0,#3f0,#0f0)"></i><i style="background:linear-gradient(#20f,#20f,#08f,#0bf,#07f,#00f,#01f,#02f,#20f,#30f,#00f,#01f,#02f,#04f,#30f,#00f,#02f,#07f,#0af,#0bf,#0cf,#0af,#0af,#0af,#0fe,#09f,#0ff,#0fc,#0fa,#0f9,#0f5,#0f3,#0f5,#0f7,#0f7,#0f1,#0f3,#0f5,#0f4,#0f1,#0f0,#1f0,#2f0,#2f0,#2f0,#3f0,#4f0,#5f0,#6f0,#2f0,#2f0,#2f0,#2f0,#2f0,#0f1)"></i><i style="background:linear-gradient(#30f,#30f,#30f,#00f,#30f,#20f,#04f,#06f,#05f,#04f,#05f,#08f,#0ef,#0fb,#0fb,#0ef,#0fe,#0fe,#0fd,#0fc,#0fa,#0ff,#0ff,#0fd,#0fc,#0fb,#0fd,#0fd,#0fb,#0f2,#1f0,#0f1,#0f2,#0f0,#1f0,#0f2,#0f4,#0f1,#0f2,#0f1,#1f0,#5f0,#4f0,#6f0,#6f0,#6f0,#6f0,#6f0,#6f0,#7f0,#7f0,#6f0,#5f0,#3f0,#0f0)"></i><i style="background:linear-gradient(#05f,#05f,#05f,#08f,#07f,#08f,#07f,#07f,#10f,#0af,#0cf,#0cf,#0ef,#0fd,#0cf,#0fe,#0fd,#0fd,#0fd,#0fb,#0fa,#0fc,#0fc,#0fc,#0fa,#0fe,#0fa,#0fc,#0fa,#0f6,#0f2,#0f6,#0f1,#0f3,#0f3,#0f0,#0f6,#0f6,#0f5,#0f4,#0f1,#3f0,#4f0,#4f0,#4f0,#5f0,#6f0,#6f0,#7f0,#6f0,#5f0,#5f0,#5f0,#3f0,#2f0)"></i><i style="background:linear-gradient(#08f,#08f,#00f,#06f,#00f,#10f,#30f,#30f,#09f,#02f,#0ef,#0fc,#0df,#0cf,#0df,#0fd,#0fb,#0fc,#0fe,#0fb,#0f9,#0fe,#0fe,#0fc,#0fc,#0df,#0fc,#0fe,#0fb,#0f7,#0f9,#0f2,#0f2,#0f2,#0f2,#0f1,#0f4,#0f8,#0f4,#1f0,#2f0,#4f0,#2f0,#4f0,#5f0,#6f0,#4f0,#6f0,#4f0,#5f0,#5f0,#7f0,#6f0,#6f0,#3f0)"></i><i style="background:linear-gradient(#0fe,#0fe,#09f,#0fe,#0bf,#09f,#07f,#0af,#0fe,#0fe,#0cf,#0ef,#0fe,#0fe,#0fe,#0f7,#0f7,#0f9,#0fd,#0fd,#0f6,#0df,#0df,#0cf,#0fd,#0f7,#0f9,#0f8,#0f6,#0f6,#0f5,#1f0,#2f0,#0f0,#0f1,#2f0,#3f0,#2f0,#0f1,#1f0,#3f0,#4f0,#5f0,#4f0,#4f0,#4f0,#5f0,#7f0,#6f0,#6f0,#6f0,#7f0,#6f0,#6f0,#1f0)"></i><i style="background:linear-gradient(#01f,#01f,#20f,#50f,#01f,#07f,#03f,#02f,#40f,#05f,#00f,#00f,#04f,#07f,#02f,#0cf,#0cf,#0df,#0ef,#0fe,#0fd,#0fd,#0fc,#0fd,#0f8,#0f6,#0f8,#0fb,#0f8,#0f6,#0f5,#0f1,#1f0,#0f2,#0f3,#0f3,#0f2,#0f2,#0f1,#2f0,#3f0,#5f0,#5f0,#5f0,#6f0,#6f0,#6f0,#8f0,#7f0,#7f0,#7f0,#6f0,#6f0,#4f0,#3f0)"></i><i style="background:linear-gradient(#30f,#30f,#00f,#10f,#10f,#10f,#01f,#02f,#03f,#06f,#04f,#05f,#02f,#01f,#00f,#00f,#05f,#0cf,#0ef,#0df,#09f,#0fe,#0fd,#0fe,#0fd,#0f9,#0f8,#0f9,#0f7,#0f5,#0f4,#0f3,#0f4,#0f3,#0f3,#0f2,#3f0,#0f3,#0f3,#0f4,#0f0,#4f0,#5f0,#5f0,#5f0,#5f0,#5f0,#6f0,#6f0,#6f0,#6f0,#6f0,#6f0,#4f0,#1f0)"></i><i style="background:linear-gradient(#0ff,#0ff,#0af,#05f,#0bf,#04f,#0cf,#0ff,#07f,#09f,#06f,#08f,#0bf,#0cf,#0ff,#0df,#0fe,#0fc,#0fd,#0fb,#0fe,#0fa,#0fb,#0fe,#0ef,#0ef,#0ef,#0fe,#0fc,#0f7,#0f2,#0f6,#0f7,#0f5,#0f5,#0f3,#0f6,#0f5,#0f7,#0f4,#0f0,#3f0,#3f0,#1f0,#2f0,#3f0,#4f0,#4f0,#6f0,#4f0,#4f0,#2f0,#4f0,#2f0,#1f0)"></i><i style="background:linear-gradient(#08f,#08f,#07f,#09f,#06f,#05f,#05f,#06f,#02f,#02f,#05f,#0af,#09f,#08f,#0cf,#0df,#0df,#0ef,#0fe,#0fc,#0ff,#0fe,#0ff,#0df,#0cf,#0ef,#0ef,#0fd,#0fb,#0fd,#0f8,#0f7,#0f4,#0f3,#0f3,#0f2,#0f7,#0f7,#0f5,#0f5,#0f3,#0f0,#2f0,#3f0,#3f0,#3f0,#3f0,#5f0,#5f0,#4f0,#4f0,#6f0,#6f0,#4f0,#1f0)"></i><i style="background:linear-gradient(#02f,#02f,#0af,#0af,#02f,#20f,#07f,#0af,#04f,#02f,#07f,#01f,#10f,#03f,#0bf,#0ef,#0ff,#0fe,#0fe,#0fb,#0fc,#0f9,#0f8,#0f8,#0f8,#0f8,#0fa,#0fb,#0f9,#0f7,#0f3,#0f3,#0f2,#0f0,#0f0,#0f2,#0f4,#0f5,#0f4,#0f1,#2f0,#5f0,#4f0,#3f0,#4f0,#5f0,#6f0,#6f0,#6f0,#7f0,#7f0,#6f0,#5f0,#5f0,#4f0)"></i><i style="background:linear-gradient(#0cf,#0cf,#0fd,#0af,#02f,#09f,#0af,#09f,#07f,#06f,#09f,#0cf,#0df,#0df,#0fd,#0fd,#0fb,#0fb,#0fe,#0ff,#0fd,#0ff,#0fe,#0fc,#0fd,#0fb,#0ef,#0f8,#0f7,#0fa,#0f3,#0f3,#0f4,#0f7,#0f8,#0f5,#0f5,#1f0,#0f4,#0f4,#0f0,#2f0,#4f0,#5f0,#4f0,#4f0,#6f0,#5f0,#6f0,#5f0,#4f0,#5f0,#5f0,#3f0,#1f0)"></i><i style="background:linear-gradient(#20f,#20f,#10f,#10f,#30f,#30f,#20f,#20f,#30f,#06f,#10f,#40f,#20f,#02f,#03f,#0ff,#0ff,#0df,#0ff,#0fe,#0fb,#0fc,#0fd,#0df,#0fb,#0df,#0fa,#0fb,#0f9,#0f8,#0f9,#0f6,#0f6,#0f2,#0f1,#0f4,#0f2,#0f7,#0f5,#0f1,#2f0,#4f0,#4f0,#4f0,#4f0,#5f0,#6f0,#6f0,#6f0,#5f0,#5f0,#5f0,#5f0,#3f0,#0f0)"></i><i style="background:linear-gradient(#04f,#04f,#06f,#04f,#05f,#08f,#0bf,#0cf,#00f,#20f,#03f,#07f,#04f,#04f,#0ff,#0cf,#0cf,#0bf,#0bf,#0bf,#0fb,#0fe,#0fe,#0fd,#0fc,#0fd,#0ff,#0fe,#0fc,#0f9,#0f6,#0f4,#0f5,#0f5,#0f6,#0f5,#0f9,#0f3,#0f5,#0f6,#0f3,#2f0,#3f0,#4f0,#4f0,#4f0,#5f0,#4f0,#3f0,#4f0,#4f0,#5f0,#4f0,#3f0,#1f0)"></i><i style="background:linear-gradient(#00f,#00f,#04f,#09f,#01f,#10f,#04f,#05f,#0bf,#10f,#05f,#0af,#06f,#07f,#0fe,#0fd,#0fc,#0fd,#0fc,#0f7,#0fb,#0f6,#0f6,#0f7,#0fe,#0fb,#0fc,#0f8,#0f6,#0f7,#0f2,#0f4,#0f3,#0f4,#0f4,#0f3,#0f5,#0f3,#0f4,#0f5,#0f1,#5f0,#6f0,#6f0,#7f0,#7f0,#5f0,#8f0,#af0,#6f0,#6f0,#7f0,#7f0,#6f0,#2f0)"></i><i style="background:linear-gradient(#07f,#07f,#20f,#0af,#10f,#00f,#05f,#06f,#10f,#0df,#08f,#0bf,#0df,#0df,#0bf,#0fe,#0fe,#0fe,#0ff,#0ff,#0fd,#0ff,#0ff,#0ff,#0cf,#0fe,#0f8,#0fa,#0f8,#0fa,#0f6,#0f9,#0f8,#0f4,#0f3,#0f4,#0f5,#0f7,#0f8,#0f5,#0f1,#1f0,#1f0,#1f0,#2f0,#2f0,#3f0,#5f0,#5f0,#6f0,#6f0,#3f0,#2f0,#4f0,#0f2)"></i><i style="background:linear-gradient(#0df,#0df,#0af,#0ef,#0af,#05f,#07f,#07f,#0bf,#04f,#07f,#0bf,#07f,#03f,#0bf,#0bf,#0ef,#0fd,#0ff,#0fe,#0fa,#0f9,#0fa,#0fe,#0fc,#0df,#0f9,#0fa,#0f8,#0f9,#0f3,#0f6,#0f6,#0f7,#0f7,#0f1,#0f5,#0f4,#0f2,#0f1,#1f0,#5f0,#4f0,#4f0,#6f0,#8f0,#7f0,#7f0,#7f0,#9f0,#8f0,#6f0,#6f0,#7f0,#2f0)"></i><i style="background:linear-gradient(#07f,#08f,#02f,#03f,#0cf,#00f,#0cf,#0fe,#0cf,#0df,#0cf,#0df,#0fe,#0fe,#0fa,#0fe,#0fe,#0fc,#0fa,#0fb,#0fd,#0fb,#0fb,#0fc,#0fc,#0f7,#0f8,#0fb,#0f9,#0fa,#0f7,#0f7,#0f7,#0f6,#0f6,#0f7,#0f9,#0f4,#0f5,#0f6,#0f3,#4f0,#4f0,#6f0,#6f0,#7f0,#7f0,#6f0,#6f0,#6f0,#6f0,#6f0,#5f0,#4f0,#3f0)"></i><i style="background:linear-gradient(#05f,#09f,#0bf,#0bf,#0bf,#0bf,#0ef,#0fe,#0fc,#0fc,#0fd,#0fb,#0f8,#0f9,#0f9,#0fc,#0fa,#0f8,#0f9,#0f9,#0f9,#0fc,#0fc,#0fc,#0ef,#0f7,#0fc,#0fa,#0f9,#0fb,#0f4,#0f6,#0f0,#0f4,#0f6,#0f9,#0f6,#0fa,#0f6,#0f5,#0f3,#3f0,#4f0,#4f0,#4f0,#5f0,#5f0,#6f0,#6f0,#5f0,#4f0,#5f0,#4f0,#4f0,#0f0)"></i><i style="background:linear-gradient(#30f,#30f,#08f,#04f,#08f,#06f,#09f,#0cf,#0ef,#0fd,#0fd,#0ff,#0fd,#0fb,#0f8,#0fa,#0fb,#0fb,#0fb,#0fc,#0f9,#0fc,#0fb,#0f8,#0fa,#0f7,#0fb,#0f7,#0f6,#0f9,#0f4,#0f7,#0fa,#0f7,#0f6,#0f4,#0f6,#0f7,#0f8,#0f7,#0f2,#1f0,#3f0,#3f0,#3f0,#4f0,#5f0,#5f0,#5f0,#5f0,#5f0,#5f0,#5f0,#3f0,#0f0)"></i><i style="background:linear-gradient(#10f,#10f,#05f,#0fe,#06f,#0cf,#0bf,#0df,#0fe,#0fe,#0fb,#0f9,#0f7,#0f6,#0f3,#0f7,#0f6,#0f5,#0f6,#0f9,#0f4,#0f6,#0f6,#0f7,#0f9,#0f9,#0f7,#0f6,#0f5,#0f7,#0f2,#0f5,#0f7,#0f6,#0f6,#0f4,#0f0,#0f3,#0f5,#0f2,#3f0,#5f0,#5f0,#5f0,#6f0,#6f0,#6f0,#7f0,#8f0,#8f0,#7f0,#7f0,#6f0,#5f0,#3f0)"></i><i style="background:linear-gradient(#06f,#06f,#06f,#0af,#0af,#0df,#0fe,#0fc,#0fd,#0ef,#0fa,#0f6,#0f7,#0f8,#0f7,#0fa,#0fa,#0fb,#0fa,#0f8,#0fc,#0fa,#0f9,#0f5,#0f8,#0fb,#0f7,#0f8,#0f7,#0f7,#0f7,#0f2,#0f5,#0f5,#0f4,#0f4,#0f4,#0fb,#0f7,#0f4,#0f1,#3f0,#5f0,#4f0,#5f0,#6f0,#5f0,#7f0,#7f0,#5f0,#5f0,#6f0,#5f0,#3f0,#1f0)"></i><i style="background:linear-gradient(#08f,#08f,#0cf,#0ef,#0cf,#0df,#04f,#07f,#0ff,#0fe,#0fd,#0fa,#0f9,#0f9,#0f7,#0f6,#0f8,#0fb,#0fb,#0f8,#0f8,#0fc,#0fc,#0fb,#0f8,#0fc,#0fb,#0f5,#0f5,#0fb,#0f8,#0f2,#0f4,#0f5,#0f5,#0f4,#0f5,#0f7,#0f5,#0f3,#0f0,#6f0,#6f0,#5f0,#6f0,#7f0,#7f0,#8f0,#7f0,#8f0,#7f0,#6f0,#6f0,#4f0,#4f0)"></i><i style="background:linear-gradient(#05f,#05f,#07f,#04f,#10f,#02f,#00f,#00f,#0af,#10f,#20f,#20f,#01f,#05f,#07f,#03f,#09f,#0ef,#0fd,#0f9,#0ff,#0ff,#0fe,#0fb,#0fa,#0f8,#0f8,#0fc,#0fb,#0fb,#0f8,#0f4,#0f5,#0f9,#0fa,#0f4,#0f7,#0f8,#0f5,#0f5,#0f3,#3f0,#4f0,#7f0,#6f0,#6f0,#6f0,#6f0,#6f0,#8f0,#7f0,#6f0,#5f0,#5f0,#0f1)"></i><i style="background:linear-gradient(#10f,#00f,#30f,#10f,#00f,#10f,#20f,#20f,#07f,#50f,#03f,#03f,#20f,#20f,#03f,#0af,#09f,#0bf,#0ff,#0fe,#0fe,#0cf,#0ef,#0fb,#0fc,#0fe,#0ff,#0ff,#0fe,#0f9,#0f6,#0fb,#0f7,#0f9,#0f9,#0f6,#0f7,#0fb,#0f7,#0f3,#0f1,#1f0,#3f0,#3f0,#4f0,#4f0,#4f0,#4f0,#6f0,#4f0,#4f0,#5f0,#4f0,#3f0,#0f0)"></i><i style="background:linear-gradient(#00f,#00f,#01f,#0af,#04f,#00f,#02f,#03f,#02f,#03f,#08f,#09f,#0df,#0fe,#0cf,#0fe,#0fe,#0fd,#0fb,#0fb,#0fd,#0f8,#0fa,#0ff,#0fd,#0fb,#0df,#0fd,#0fb,#0f9,#0f8,#0f5,#0f7,#0f4,#0f3,#0f8,#0f7,#0f5,#0f7,#0f5,#0f1,#2f0,#4f0,#4f0,#4f0,#5f0,#6f0,#5f0,#5f0,#5f0,#5f0,#5f0,#6f0,#3f0,#1f0)"></i><i style="background:linear-gradient(#10f,#10f,#10f,#10f,#40f,#30f,#20f,#20f,#20f,#50f,#20f,#01f,#01f,#00f,#20f,#01f,#05f,#0cf,#0ef,#06f,#0cf,#0cf,#0ef,#0ef,#0fe,#0df,#0fd,#0fe,#0fd,#0fc,#0f9,#0f6,#0f7,#0fb,#0fb,#0f8,#0fa,#0f9,#0f9,#0f8,#0f4,#0f0,#2f0,#3f0,#3f0,#3f0,#5f0,#2f0,#4f0,#4f0,#4f0,#3f0,#3f0,#2f0,#0f0)"></i><i style="background:linear-gradient(#02f,#02f,#02f,#06f,#07f,#08f,#08f,#08f,#10f,#01f,#10f,#00f,#04f,#07f,#09f,#0af,#0cf,#0fd,#0fa,#0fd,#0fb,#0fe,#0fd,#0fb,#0fd,#0fd,#0fb,#0fd,#0fb,#0f6,#0f3,#0f4,#0f2,#0f7,#0f9,#0fa,#0f7,#0f7,#0f6,#0f3,#1f0,#4f0,#5f0,#6f0,#6f0,#6f0,#7f0,#7f0,#5f0,#7f0,#7f0,#7f0,#6f0,#5f0,#2f0)"></i><i style="background:linear-gradient(#08f,#08f,#06f,#0cf,#05f,#0bf,#0cf,#0cf,#0bf,#07f,#0fe,#0fe,#0fc,#0f9,#0ef,#0fd,#0fe,#0fe,#0fb,#0fa,#0f9,#0fb,#0fb,#0fe,#0ef,#0fc,#0ef,#0fc,#0fb,#0fa,#0f6,#0f8,#0f4,#0f6,#0f7,#0fa,#0f7,#0fa,#0f9,#0f7,#0f4,#6f0,#4f0,#4f0,#5f0,#5f0,#5f0,#6f0,#4f0,#8f0,#7f0,#6f0,#4f0,#5f0,#1f0)"></i><i style="background:linear-gradient(#04f,#04f,#0fe,#0cf,#06f,#09f,#04f,#03f,#08f,#03f,#0bf,#0bf,#06f,#05f,#04f,#0fd,#0fd,#0fe,#0fe,#0fd,#0fe,#0fd,#0fd,#0fe,#0fb,#0fd,#0ef,#0fd,#0fb,#0fa,#0f8,#0f9,#0fb,#0f9,#0f8,#0fa,#0f8,#0fa,#0fa,#0f5,#1f0,#2f0,#2f0,#2f0,#3f0,#5f0,#4f0,#6f0,#5f0,#5f0,#4f0,#4f0,#3f0,#4f0,#0f1)"></i><i style="background:linear-gradient(#0ef,#0ef,#08f,#03f,#0bf,#08f,#0bf,#0cf,#0f5,#0cf,#0fd,#0fd,#0ff,#0fd,#0cf,#0fe,#0fe,#0fe,#0fe,#0fa,#0f9,#0ff,#0ff,#0fd,#0fd,#0fd,#0f9,#0fa,#0f9,#0f9,#0f5,#0fc,#0f8,#0f6,#0f6,#0f8,#0f6,#0f7,#0f7,#0f5,#0f1,#2f0,#4f0,#6f0,#6f0,#5f0,#6f0,#6f0,#5f0,#8f0,#8f0,#6f0,#4f0,#3f0,#0f0)"></i><i style="background:linear-gradient(#00f,#00f,#03f,#03f,#08f,#0af,#0bf,#0cf,#04f,#09f,#08f,#07f,#09f,#0af,#0fd,#0cf,#0bf,#0bf,#0ef,#0bf,#0ef,#0fa,#0fa,#0fb,#0fd,#0fe,#0fc,#0fe,#0fd,#0fa,#0f8,#0fa,#0fb,#0f8,#0f7,#0fa,#0fb,#0f7,#0f8,#0f4,#1f0,#1f0,#3f0,#2f0,#3f0,#4f0,#3f0,#4f0,#3f0,#6f0,#5f0,#3f0,#3f0,#2f0,#0f1)"></i><i style="background:linear-gradient(#60f,#60f,#50f,#04f,#00f,#10f,#00f,#00f,#02f,#06f,#07f,#06f,#01f,#00f,#02f,#0af,#0cf,#0ef,#0ef,#0ef,#0fd,#0ef,#0fe,#0fb,#0fe,#0f9,#0fa,#0fb,#0fa,#0f9,#0f9,#0f6,#0f9,#0f8,#0f7,#0fa,#0fa,#0f9,#0f8,#0f5,#1f0,#2f0,#4f0,#4f0,#4f0,#4f0,#5f0,#4f0,#6f0,#5f0,#5f0,#3f0,#3f0,#3f0,#0f1)"></i><i style="background:linear-gradient(#05f,#05f,#04f,#0bf,#02f,#02f,#01f,#00f,#02f,#10f,#03f,#05f,#01f,#00f,#0cf,#03f,#07f,#0df,#0ff,#0fd,#0fd,#0fe,#0ff,#0df,#0fb,#0f8,#0fd,#0fc,#0fa,#0fc,#0f3,#0f8,#0f8,#0f5,#0f4,#0f7,#0f9,#0f4,#0f5,#0f3,#1f0,#2f0,#6f0,#4f0,#5f0,#5f0,#5f0,#5f0,#5f0,#4f0,#4f0,#5f0,#5f0,#4f0,#1f0)"></i><i style="background:linear-gradient(#0fe,#0fe,#01f,#0af,#00f,#09f,#07f,#06f,#08f,#20f,#20f,#10f,#00f,#02f,#06f,#0af,#07f,#02f,#05f,#0cf,#0df,#0fb,#0fb,#0fd,#0fa,#0f9,#0fb,#0fa,#0fa,#0f5,#0f6,#0f9,#0f7,#0f7,#0f7,#0f9,#0fa,#0f4,#0f4,#0f6,#0f5,#4f0,#5f0,#5f0,#6f0,#7f0,#5f0,#7f0,#8f0,#7f0,#7f0,#6f0,#6f0,#3f0,#3f0)"></i><i style="background:linear-gradient(#06f,#06f,#03f,#04f,#40f,#50f,#40f,#40f,#00f,#30f,#03f,#06f,#10f,#40f,#05f,#02f,#05f,#08f,#07f,#08f,#0ef,#0fe,#0fd,#0fb,#0fe,#0fc,#0fe,#0fe,#0fd,#0fc,#0f8,#0f9,#0fb,#0f8,#0f7,#0f8,#0f9,#0f8,#0fa,#0f8,#0f2,#0f0,#5f0,#4f0,#4f0,#4f0,#4f0,#4f0,#4f0,#6f0,#5f0,#6f0,#5f0,#4f0,#0f1)"></i><i style="background:linear-gradient(#08f,#08f,#02f,#03f,#05f,#04f,#04f,#04f,#05f,#0cf,#06f,#09f,#0cf,#0bf,#0ff,#0fe,#0fd,#0ef,#0bf,#0bf,#0fb,#0fe,#0fd,#0f9,#0f9,#0ef,#0fb,#0fe,#0fd,#0fb,#0f8,#0f6,#0f8,#0f9,#0f9,#0fb,#0f5,#0fb,#0fa,#0f6,#0f1,#3f0,#3f0,#4f0,#4f0,#4f0,#5f0,#4f0,#5f0,#7f0,#6f0,#3f0,#4f0,#5f0,#1f0)"></i><i style="background:linear-gradient(#00f,#00f,#10f,#00f,#01f,#02f,#05f,#06f,#00f,#20f,#00f,#20f,#00f,#06f,#02f,#02f,#06f,#0cf,#0df,#08f,#0fe,#0fc,#0fc,#0fd,#0fe,#0fe,#0fc,#0fd,#0fc,#0f8,#0fc,#0f7,#0fa,#0f6,#0f4,#0f8,#0fb,#0ff,#0fa,#0f5,#0f1,#1f0,#4f0,#5f0,#4f0,#3f0,#4f0,#5f0,#6f0,#5f0,#5f0,#6f0,#4f0,#4f0,#1f0)"></i><i style="background:linear-gradient(#0af,#0af,#05f,#20f,#0af,#06f,#0ef,#0fd,#00f,#06f,#00f,#00f,#0af,#0fd,#0df,#0fe,#0fd,#0ff,#0df,#0ff,#0fa,#0f9,#0f9,#0fa,#0fb,#0fc,#0df,#0f9,#0f8,#0fa,#0f7,#0f6,#0f9,#0f5,#0f4,#0f4,#0f6,#0f7,#0f9,#0f7,#0f3,#4f0,#5f0,#3f0,#4f0,#4f0,#4f0,#6f0,#6f0,#6f0,#6f0,#6f0,#5f0,#4f0,#1f0)"></i><i style="background:linear-gradient(#03f,#03f,#05f,#01f,#04f,#10f,#00f,#02f,#0fd,#03f,#09f,#0af,#0bf,#0ef,#0df,#0fe,#0ef,#0ef,#0fc,#0df,#0ff,#0ef,#0ef,#0ef,#0fe,#0cf,#0fd,#0af,#0bf,#0fb,#0fb,#0fc,#0fa,#0fa,#0fa,#0fb,#0fd,#0f7,#0f8,#0f7,#0f3,#0f0,#2f0,#1f0,#2f0,#3f0,#3f0,#5f0,#4f0,#3f0,#3f0,#2f0,#3f0,#3f0,#0f1)"></i><i style="background:linear-gradient(#40f,#40f,#30f,#20f,#07f,#05f,#05f,#06f,#40f,#02f,#30f,#20f,#00f,#03f,#09f,#0cf,#0df,#0ef,#0ff,#0ef,#0f9,#0fe,#0fd,#0fd,#0ff,#0ef,#0df,#0fc,#0fb,#0fc,#0fd,#0f7,#0f6,#0fb,#0fd,#0fd,#0f7,#0fb,#0fd,#0fa,#0f4,#2f0,#3f0,#4f0,#4f0,#3f0,#3f0,#4f0,#6f0,#5f0,#5f0,#5f0,#5f0,#4f0,#0f1)"></i><i style="background:linear-gradient(#08f,#08f,#0ef,#05f,#03f,#0cf,#04f,#02f,#06f,#07f,#0cf,#0ef,#0cf,#0bf,#0af,#0bf,#0df,#0fe,#0fd,#0fc,#0f9,#0fe,#0fe,#0ff,#0df,#0fd,#0fd,#0fc,#0fb,#0ff,#0f8,#0fa,#0fb,#0fc,#0fc,#0f7,#0f6,#0f9,#0f9,#0f8,#0f3,#3f0,#3f0,#3f0,#4f0,#5f0,#6f0,#4f0,#5f0,#5f0,#5f0,#5f0,#4f0,#3f0,#0f0)"></i><i style="background:linear-gradient(#0ff,#0fe,#01f,#0ff,#07f,#0fe,#0f9,#0f9,#0af,#0cf,#0ef,#0af,#0bf,#0df,#0fe,#0fb,#0fd,#0fc,#0f8,#0fa,#0fd,#0fc,#0fc,#0fb,#0ff,#0fe,#0f8,#0fe,#0fd,#0f9,#0fb,#0f5,#0fa,#0fb,#0fa,#0fb,#0f6,#0f9,#0f8,#0f4,#1f0,#4f0,#4f0,#5f0,#5f0,#5f0,#6f0,#7f0,#5f0,#5f0,#5f0,#6f0,#6f0,#4f0,#3f0)"></i><i style="background:linear-gradient(#50f,#50f,#50f,#00f,#00f,#30f,#00f,#03f,#01f,#04f,#03f,#03f,#00f,#00f,#06f,#10f,#05f,#09f,#07f,#0bf,#0fd,#0ff,#0ff,#0ef,#0ff,#0fd,#0fc,#0df,#0ef,#0ff,#0fa,#0f6,#0f7,#0f8,#0f8,#0fb,#0f9,#0f6,#0f7,#0f8,#0f7,#0f0,#3f0,#2f0,#3f0,#3f0,#3f0,#4f0,#5f0,#4f0,#4f0,#4f0,#5f0,#2f0,#0f1)"></i><i style="background:linear-gradient(#10f,#10f,#06f,#04f,#30f,#30f,#01f,#03f,#07f,#09f,#08f,#0df,#0fe,#0ff,#0fd,#0ff,#0fc,#0f9,#0fc,#0fd,#0fd,#0f9,#0fa,#0fe,#0fa,#0fd,#0ef,#0fe,#0fd,#0fc,#0f8,#0f8,#0fa,#0fa,#0fa,#0f5,#0f5,#0f7,#0f7,#0f4,#1f0,#4f0,#4f0,#4f0,#5f0,#7f0,#7f0,#5f0,#7f0,#7f0,#6f0,#4f0,#6f0,#6f0,#2f0)"></i><i style="background:linear-gradient(#00f,#00f,#20f,#20f,#01f,#02f,#00f,#00f,#50f,#50f,#10f,#06f,#03f,#00f,#0bf,#0fc,#0fe,#0df,#0fe,#0fd,#0f9,#0fd,#0fd,#0ef,#0cf,#0cf,#0fa,#0fd,#0fc,#0fa,#0f6,#0f4,#0f4,#0f6,#0f6,#0f9,#0f4,#0fa,#0f7,#0f4,#0f0,#5f0,#6f0,#5f0,#6f0,#6f0,#6f0,#6f0,#6f0,#7f0,#7f0,#6f0,#5f0,#4f0,#1f0)"></i><i style="background:linear-gradient(#09f,#09f,#05f,#30f,#02f,#0df,#0af,#09f,#06f,#07f,#0af,#0bf,#0af,#0cf,#0bf,#0fe,#0fd,#0fa,#0f9,#0fc,#0fb,#0fd,#0fc,#0fc,#0fb,#0fe,#0fd,#0fd,#0fc,#0fa,#0f9,#0f9,#0f8,#0f7,#0f7,#0f7,#0f7,#0f9,#0f8,#0f6,#0f2,#2f0,#4f0,#6f0,#6f0,#6f0,#7f0,#7f0,#8f0,#7f0,#6f0,#6f0,#6f0,#5f0,#2f0)"></i><i style="background:linear-gradient(#08f,#08f,#10f,#20f,#02f,#02f,#0af,#0cf,#10f,#00f,#01f,#08f,#0cf,#0cf,#0fd,#0fe,#0ef,#0af,#0df,#0fb,#0fd,#0fe,#0fe,#0ff,#0ff,#0ff,#0cf,#0ff,#0fe,#0fb,#0f8,#0f7,#0fa,#0fe,#0ef,#0fa,#0fa,#0f8,#0fb,#0f4,#4f0,#1f0,#3f0,#2f0,#2f0,#3f0,#3f0,#4f0,#5f0,#5f0,#5f0,#4f0,#4f0,#3f0,#0f3)"></i><i style="background:linear-gradient(#07f,#08f,#07f,#03f,#20f,#06f,#08f,#08f,#06f,#20f,#10f,#03f,#08f,#0cf,#0af,#09f,#0cf,#0df,#0ef,#0fc,#0fc,#0fb,#0fb,#0fb,#0fa,#0fe,#0ef,#0fb,#0fa,#0fe,#0f9,#0fd,#0fb,#0f8,#0f7,#0fb,#0fd,#0fb,#0f9,#0f8,#0f6,#2f0,#4f0,#3f0,#4f0,#4f0,#4f0,#6f0,#6f0,#5f0,#5f0,#4f0,#4f0,#2f0,#0f0)"></i><i style="background:linear-gradient(#01f,#01f,#10f,#04f,#02f,#01f,#09f,#0bf,#30f,#09f,#0df,#0cf,#0af,#0af,#0fd,#0df,#0fe,#0fb,#0fb,#0f9,#0bf,#0fa,#0fb,#0fd,#0fc,#0f5,#0fe,#0fa,#0f9,#0fc,#0f8,#0f8,#0fc,#0f9,#0f7,#0f7,#0f7,#0f9,#0f8,#0f5,#0f1,#3f0,#3f0,#5f0,#5f0,#4f0,#4f0,#6f0,#7f0,#4f0,#4f0,#5f0,#5f0,#5f0,#3f0)"></i><i style="background:linear-gradient(#05f,#05f,#01f,#00f,#04f,#06f,#08f,#0af,#08f,#03f,#02f,#0af,#0fe,#0fc,#0ff,#0fe,#0ff,#0df,#0ff,#0fc,#0fc,#0fc,#0fd,#0df,#0fe,#0fd,#0ff,#0f9,#0f9,#0fb,#0f6,#0fa,#0fa,#0f8,#0f8,#0f8,#0fc,#0fc,#0fb,#0f8,#0f3,#3f0,#4f0,#4f0,#4f0,#4f0,#4f0,#7f0,#5f0,#6f0,#5f0,#4f0,#6f0,#3f0,#0f1)"></i><i style="background:linear-gradient(#0fc,#0fb,#06f,#01f,#0af,#0cf,#0ff,#0fd,#08f,#0ff,#0fc,#0fd,#0fd,#0fc,#0fd,#0fc,#0fd,#0ff,#0fc,#0f6,#0f8,#0cf,#0cf,#0ff,#0ef,#0fd,#0fe,#0ff,#0fe,#0fb,#0fa,#0fa,#0f9,#0fa,#0fb,#0fd,#0f9,#0f8,#0f9,#0f5,#2f0,#1f0,#3f0,#4f0,#4f0,#4f0,#5f0,#4f0,#5f0,#6f0,#5f0,#6f0,#7f0,#4f0,#0f0)"></i><i style="background:linear-gradient(#0af,#0bf,#06f,#10f,#08f,#08f,#0fb,#0f8,#05f,#0cf,#0af,#0df,#0ff,#0ef,#0ff,#0f7,#0f8,#0fc,#0fd,#0fd,#0af,#0fc,#0fc,#0fa,#0fe,#0df,#0fe,#0fd,#0fd,#0fd,#0f6,#0f8,#0fe,#0fb,#0f9,#0f7,#0f6,#0fa,#0fa,#0f8,#0f3,#3f0,#4f0,#3f0,#4f0,#6f0,#6f0,#5f0,#6f0,#7f0,#7f0,#7f0,#5f0,#4f0,#1f0)"></i><i style="background:linear-gradient(#0ef,#0ff,#0ff,#0fb,#0fd,#0fb,#0fb,#0fa,#0fe,#0df,#0fe,#0fb,#0fc,#0fe,#0f8,#0fa,#0fb,#0fc,#0fd,#0fd,#0fb,#0fd,#0fc,#0fa,#0fb,#0fb,#0fd,#0fa,#0f9,#0f7,#0fd,#0fa,#0f9,#0fd,#0fe,#0f7,#0fb,#0f9,#0f8,#0f6,#0f3,#2f0,#3f0,#5f0,#5f0,#4f0,#5f0,#5f0,#6f0,#5f0,#5f0,#7f0,#6f0,#3f0,#0f0)"></i><i style="background:linear-gradient(#0df,#0df,#01f,#02f,#0ff,#0fd,#0cf,#0cf,#0ff,#0fe,#0fc,#0fc,#0fc,#0fb,#0fe,#0bf,#0df,#0fe,#0fd,#0fb,#0fe,#0f9,#0fa,#0fc,#0fd,#0fc,#0fe,#0fd,#0fd,#0fb,#0fc,#0fe,#0fb,#0fc,#0fd,#0fd,#0fb,#0f8,#0f7,#0f4,#0f0,#2f0,#5f0,#4f0,#4f0,#4f0,#4f0,#3f0,#7f0,#5f0,#5f0,#5f0,#3f0,#4f0,#2f0)"></i><i style="background:linear-gradient(#01f,#02f,#09f,#0ff,#0df,#0df,#0fe,#0fd,#0fc,#0cf,#0fd,#0fc,#0fc,#0fb,#0ef,#0fe,#0fd,#0fd,#0fe,#0fb,#0ef,#0df,#0df,#0ef,#0fd,#0cf,#0fd,#0fd,#0fd,#0fd,#0fc,#0f9,#0fa,#0fa,#0f9,#0fd,#0fa,#0fa,#0f8,#0f6,#0f3,#0f0,#3f0,#2f0,#4f0,#6f0,#5f0,#4f0,#5f0,#5f0,#5f0,#5f0,#5f0,#3f0,#0f1)"></i><i style="background:linear-gradient(#0f8,#0f9,#0df,#0cf,#0bf,#0df,#0ef,#0fe,#0f9,#0f9,#0fb,#0fb,#0fb,#0fb,#0fc,#0f6,#0f8,#0fc,#0fb,#0f7,#0f4,#0fc,#0fc,#0f9,#0f8,#0fa,#0f8,#0fa,#0fa,#0fa,#0ff,#0fb,#0fb,#0fa,#0fa,#0f8,#0f9,#0f8,#0f9,#0f8,#0f5,#1f0,#2f0,#3f0,#4f0,#4f0,#4f0,#4f0,#5f0,#4f0,#4f0,#4f0,#3f0,#4f0,#0f0)"></i><i style="background:linear-gradient(#0f4,#0f4,#0f1,#0f3,#0f0,#0f6,#0f7,#0f7,#0f5,#0f3,#0f4,#0f7,#0f7,#0f6,#0f5,#0f1,#0f2,#0f3,#0f4,#0f1,#0f4,#0f4,#0f4,#0f4,#0f3,#0f4,#0f8,#0f6,#0f7,#0f7,#0f9,#0f9,#0f9,#0f4,#0f3,#0f9,#0f7,#0f7,#0f9,#0f5,#2f0,#4f0,#3f0,#4f0,#4f0,#4f0,#6f0,#5f0,#6f0,#8f0,#7f0,#4f0,#5f0,#2f0,#1f0)"></i><i style="background:linear-gradient(#0f5,#0f5,#0f1,#0f1,#0f5,#0f2,#0f4,#0f4,#0f3,#0f4,#0f3,#0f2,#0f1,#0f1,#0f1,#0f4,#0f3,#0f2,#0f3,#0f0,#0f6,#0f3,#0f4,#0f6,#0f8,#0f4,#0f5,#0f7,#0f8,#0f5,#0f8,#0fc,#0fb,#0fc,#0fc,#0f9,#0fa,#0fc,#0f8,#0f4,#1f0,#1f0,#3f0,#4f0,#3f0,#2f0,#3f0,#6f0,#6f0,#5f0,#4f0,#3f0,#4f0,#2f0,#0f0)"></i><i style="background:linear-gradient(#0f5,#0f5,#0f5,#0f7,#0f2,#0f3,#0f4,#0f4,#0f4,#0f3,#0f2,#0f2,#0f3,#0f3,#0f5,#0f3,#0f4,#0f5,#0f2,#0f0,#0f4,#0f2,#0f2,#0f3,#0f1,#0f3,#0f5,#0f6,#0f8,#0f1,#0fd,#0f6,#0f8,#0fa,#0fa,#0f7,#0f9,#0fc,#0fa,#0f7,#0f2,#3f0,#1f0,#2f0,#3f0,#4f0,#5f0,#4f0,#5f0,#5f0,#5f0,#6f0,#5f0,#4f0,#0f0)"></i><i style="background:linear-gradient(#0f1,#0f1,#0f4,#1f0,#0f2,#0f3,#0f3,#0f3,#0f4,#0f0,#0f6,#0f5,#0f3,#0f3,#0f2,#0f5,#0f3,#0f2,#0f3,#0f1,#0f6,#0f0,#0f0,#0f1,#0f1,#0f1,#0f4,#0f1,#0f3,#0f7,#0f8,#0fa,#0fb,#0f8,#0f7,#0f4,#0fb,#0f8,#0f9,#0f6,#0f0,#4f0,#5f0,#6f0,#5f0,#5f0,#7f0,#6f0,#8f0,#6f0,#6f0,#7f0,#6f0,#5f0,#1f0)"></i><i style="background:linear-gradient(#0f6,#0f6,#0f4,#0f4,#0f6,#0f6,#0f5,#0f5,#0f2,#0f3,#0f3,#0f4,#0f5,#0f6,#0f2,#0f2,#0f2,#0f3,#0f5,#0f3,#0f4,#0f1,#0f1,#0f4,#0f6,#0f5,#0f9,#0f8,#0fa,#0fa,#0f9,#0fb,#0fb,#0fd,#0fe,#0fb,#0f9,#0fc,#0fd,#0f9,#0f2,#2f0,#3f0,#3f0,#3f0,#4f0,#6f0,#4f0,#5f0,#6f0,#5f0,#5f0,#4f0,#3f0,#0f2)"></i><i style="background:linear-gradient(#0f0,#0f0,#0f0,#0f4,#0f1,#0f2,#0f0,#1f0,#0f2,#0f0,#0f3,#0f6,#0f4,#0f2,#0f0,#0f6,#0f4,#0f1,#0f0,#0f4,#0f3,#2f0,#1f0,#0f3,#0f0,#0f5,#0f2,#0f4,#0f6,#0fc,#0f9,#0f7,#0fa,#0f8,#0f8,#0f8,#0f8,#0f7,#0f9,#0f7,#0f1,#2f0,#4f0,#5f0,#5f0,#6f0,#7f0,#7f0,#7f0,#6f0,#6f0,#5f0,#6f0,#4f0,#2f0)"></i><i style="background:linear-gradient(#0fc,#0fb,#0fd,#0ff,#0fb,#0fb,#0fb,#0f9,#0f8,#0f6,#0f2,#0f4,#0f7,#0f7,#0f3,#0fc,#0f8,#0f5,#0f8,#0f7,#0f1,#0fa,#0f9,#0f4,#0f2,#0f5,#0f6,#0f7,#0f9,#0fb,#0f9,#0f8,#0fc,#0f7,#0f6,#0fd,#0fb,#0f9,#0f9,#0f6,#0f2,#3f0,#2f0,#4f0,#5f0,#5f0,#5f0,#5f0,#7f0,#7f0,#6f0,#4f0,#3f0,#2f0,#0f0)"></i><i style="background:linear-gradient(#05f,#06f,#0af,#08f,#10f,#0bf,#0bf,#0cf,#0fb,#0ff,#0fd,#0fa,#0f7,#0f7,#0f7,#0fa,#0fa,#0f8,#0f7,#0f8,#0f8,#0f8,#0f8,#0f7,#0f7,#0f9,#0f7,#0fa,#0fa,#0f9,#0fb,#0fa,#0fa,#0fa,#0fa,#0fa,#0f6,#0f8,#0f9,#0f7,#0f1,#3f0,#3f0,#4f0,#5f0,#5f0,#6f0,#6f0,#7f0,#8f0,#7f0,#6f0,#5f0,#5f0,#2f0)"></i><i style="background:linear-gradient(#0af,#0bf,#0ef,#0af,#0ef,#0af,#0fe,#0fb,#0fe,#0fd,#0f9,#0f9,#0fb,#0fb,#0fb,#0f7,#0f8,#0fc,#0fe,#0fb,#0fc,#0fc,#0fc,#0fa,#0fb,#0f6,#0fe,#0fb,#0fb,#0fe,#0ef,#0fe,#0fa,#0fc,#0fc,#0fa,#0fb,#0fb,#0fd,#0fa,#0f3,#3f0,#3f0,#4f0,#4f0,#4f0,#5f0,#5f0,#5f0,#4f0,#4f0,#4f0,#4f0,#4f0,#1f0)"></i><i style="background:linear-gradient(#03f,#04f,#00f,#10f,#08f,#06f,#0fe,#0fc,#0fd,#0df,#0fc,#0fb,#0fb,#0fa,#0fa,#0fe,#0fa,#0f7,#0fa,#0fa,#0fd,#0fe,#0fc,#0f7,#0fa,#0fd,#0fc,#0f9,#0f9,#0fc,#0fb,#0fa,#0fc,#0fd,#0fd,#0fa,#0f6,#0f9,#0f8,#0f6,#0f2,#2f0,#3f0,#4f0,#4f0,#5f0,#6f0,#6f0,#8f0,#7f0,#6f0,#4f0,#4f0,#5f0,#2f0)"></i><i style="background:linear-gradient(#0cf,#0cf,#05f,#08f,#0fd,#06f,#0cf,#0ef,#0cf,#0fd,#0fb,#0fc,#0f9,#0f5,#0fa,#0fc,#0fb,#0fc,#0fd,#0f8,#0fd,#0f9,#0f9,#0fb,#0f8,#0fa,#0fd,#0f8,#0f8,#0fc,#0fa,#0f6,#0fc,#0fb,#0fa,#0df,#0fd,#0fb,#0fb,#0fa,#0f6,#2f0,#4f0,#5f0,#5f0,#4f0,#5f0,#7f0,#4f0,#6f0,#6f0,#4f0,#5f0,#3f0,#1f0)"></i><i style="background:linear-gradient(#08f,#09f,#10f,#08f,#0df,#0ef,#0ff,#0fe,#0df,#0fd,#0fb,#0f8,#0fa,#0fc,#0fc,#0fc,#0fc,#0fb,#0fb,#0fc,#0fd,#0fd,#0fd,#0fd,#0fb,#0ff,#0f7,#0f9,#0f8,#0f9,#0fb,#0fe,#0fd,#0fc,#0fc,#0fa,#0ef,#0fd,#0fe,#0fc,#0f7,#1f0,#3f0,#2f0,#2f0,#3f0,#4f0,#4f0,#4f0,#6f0,#5f0,#3f0,#4f0,#2f0,#0f1)"></i><i style="background:linear-gradient(#0ff,#0fe,#0f6,#0fd,#07f,#0cf,#0df,#0df,#0cf,#0fa,#0fb,#0fd,#0fe,#0fe,#0fa,#0f7,#0fa,#0fb,#0f9,#0fa,#0f9,#0f8,#0f8,#0f7,#0fa,#0f4,#0ef,#0ef,#0ff,#0f9,#0ff,#0f8,#0fa,#0fb,#0fb,#0f9,#0f8,#0f9,#0f9,#0f7,#0f3,#3f0,#4f0,#4f0,#4f0,#5f0,#5f0,#6f0,#6f0,#9f0,#8f0,#6f0,#4f0,#5f0,#1f0)"></i><i style="background:linear-gradient(#02f,#03f,#04f,#0df,#07f,#0df,#0ff,#0fe,#0cf,#0cf,#0ef,#0fd,#0fd,#0fe,#0fe,#0fd,#0fe,#0ff,#0fd,#0fe,#0f7,#0fc,#0fc,#0fc,#0fc,#0ff,#0ff,#0f8,#0f8,#0ff,#0fe,#0fe,#0fe,#0fc,#0fb,#0fa,#0fd,#0f8,#0fc,#0f9,#0f1,#0f0,#2f0,#2f0,#2f0,#3f0,#5f0,#3f0,#4f0,#3f0,#3f0,#3f0,#3f0,#1f0,#0f0)"></i><i style="background:linear-gradient(#0df,#0df,#0fd,#09f,#0df,#0bf,#0bf,#0cf,#0cf,#0fc,#0fe,#0ff,#0fc,#0f9,#0fe,#0fb,#0fb,#0fc,#0fd,#0ff,#0fc,#0fc,#0fc,#0fd,#0fa,#0fd,#0fa,#0fb,#0fb,#0fd,#0fb,#0fa,#0fb,#0ef,#0cf,#0fc,#0fe,#0ef,#0fe,#0fd,#0fa,#2f0,#4f0,#4f0,#4f0,#4f0,#4f0,#5f0,#5f0,#5f0,#4f0,#4f0,#4f0,#3f0,#1f0)"></i><i style="background:linear-gradient(#0ef,#0ff,#0fe,#0fe,#0fe,#0ff,#0fe,#0fd,#0fd,#0fd,#0fd,#0f8,#0f6,#0f7,#0fb,#0fa,#0fa,#0fc,#0fb,#0f9,#0f8,#0ff,#0fe,#0fc,#0fb,#0f9,#0fb,#0fb,#0fa,#0fb,#0f6,#0f9,#0f8,#0f9,#0f9,#0f8,#0f8,#0fb,#0fc,#0f9,#0f4,#3f0,#5f0,#3f0,#4f0,#6f0,#7f0,#9f0,#8f0,#7f0,#6f0,#5f0,#3f0,#5f0,#1f0)"></i><i style="background:linear-gradient(#05f,#05f,#0af,#0fc,#0df,#0ef,#0fb,#0f9,#0f9,#0fa,#0fb,#0fc,#0f9,#0f7,#0fa,#0fa,#0f9,#0f7,#0f8,#0f9,#0fc,#0f3,#0f4,#0f7,#0f7,#0f8,#0f6,#0f6,#0f6,#0f7,#0fc,#0f9,#0f5,#0f6,#0f7,#0f8,#0f4,#0f6,#0f8,#0f5,#1f0,#6f0,#7f0,#8f0,#9f0,#8f0,#7f0,#8f0,#9f0,#8f0,#8f0,#9f0,#af0,#8f0,#4f0)"></i><i style="background:linear-gradient(#0cf,#0df,#0df,#09f,#0df,#0fe,#0fd,#0fc,#0fd,#0fd,#0fa,#0f9,#0f9,#0f8,#0fb,#0f3,#0f7,#0fb,#0f8,#0f7,#0f3,#0f5,#0f6,#0f6,#0f4,#0f6,#0f3,#0f7,#0f8,#0f7,#0f9,#0fa,#0fc,#0fb,#0fb,#0fc,#0fb,#0ff,#0fe,#0f9,#0f2,#3f0,#3f0,#4f0,#4f0,#4f0,#4f0,#6f0,#5f0,#5f0,#5f0,#5f0,#4f0,#2f0,#0f0)"></i><i style="background:linear-gradient(#0fd,#0ff,#0cf,#09f,#0af,#0df,#0fc,#0f9,#0f7,#0f5,#0f5,#0f5,#0f4,#0f4,#0f4,#0f5,#0f5,#0f5,#0f7,#0fb,#0f6,#0f6,#0f7,#0f8,#0f2,#0f8,#0f8,#0f5,#0f7,#0fc,#0fc,#0ff,#0fb,#0fc,#0fd,#0fe,#0fd,#0ff,#0fb,#0f8,#0f3,#0f2,#1f0,#0f1,#0f0,#1f0,#2f0,#1f0,#2f0,#1f0,#1f0,#0f0,#2f0,#0f1,#0f4)"></i><i style="background:linear-gradient(#0fc,#0fe,#0fb,#0fd,#0fc,#0fc,#0f6,#0f3,#1f0,#0f2,#0f3,#0f5,#0f5,#0f5,#0f5,#0f4,#0f4,#0f4,#0f3,#0f1,#0f6,#0f2,#0f2,#0f2,#0f0,#0f2,#0f1,#0f2,#0f4,#0fa,#0fb,#0f7,#0ff,#0ff,#0ff,#0fa,#0fa,#0fd,#0fb,#0f6,#0f1,#3f0,#2f0,#3f0,#4f0,#4f0,#3f0,#5f0,#6f0,#7f0,#6f0,#5f0,#4f0,#3f0,#0f1)"></i><i style="background:linear-gradient(#0ff,#0ef,#0fc,#0fd,#0fe,#0ff,#0fa,#0f7,#0f5,#0f3,#0f0,#0f0,#0f2,#0f4,#0f0,#0f1,#0f2,#0f1,#1f0,#0f5,#0f4,#0f4,#0f3,#0f1,#3f0,#4f0,#0f0,#0f0,#0f2,#0f2,#0f8,#0f9,#0f9,#0f8,#0f8,#0f8,#0f7,#0fa,#0fa,#0fa,#0f6,#4f0,#5f0,#5f0,#5f0,#6f0,#6f0,#6f0,#7f0,#6f0,#6f0,#6f0,#6f0,#3f0,#3f0)"></i><i style="background:linear-gradient(#0f7,#0f9,#0fa,#0fe,#0fc,#0f9,#0f6,#0f3,#0f4,#0f4,#0f3,#0f3,#0f3,#0f2,#0f1,#0f5,#0f3,#0f1,#0f5,#0f3,#0f3,#0f0,#0f0,#0f2,#0f0,#0f4,#0f3,#0f0,#0f2,#0f8,#0f7,#0fc,#0f9,#0fa,#0fa,#0fa,#0f7,#0f8,#0fa,#0f6,#2f0,#3f0,#4f0,#3f0,#3f0,#5f0,#6f0,#5f0,#4f0,#6f0,#6f0,#5f0,#5f0,#4f0,#0f0)"></i><i style="background:linear-gradient(#0f6,#0f7,#0fb,#0fc,#0fd,#0fd,#0f8,#0f4,#6f0,#0f1,#0f0,#0f0,#0f0,#0f0,#0f1,#0f0,#0f1,#0f3,#0f2,#0f1,#2f0,#1f0,#1f0,#0f0,#0f3,#0f2,#0f1,#0f1,#0f3,#0f5,#0f8,#0fd,#0f8,#0fa,#0fb,#0f8,#0f8,#0f9,#0fb,#0f6,#1f0,#4f0,#5f0,#6f0,#6f0,#7f0,#6f0,#7f0,#9f0,#8f0,#7f0,#7f0,#4f0,#6f0,#2f0)"></i><i style="background:linear-gradient(#0df,#0cf,#0ef,#0ef,#0ff,#0fc,#0f9,#0f7,#0f0,#0f8,#0f4,#0f2,#0f3,#0f3,#1f0,#0f6,#0f6,#0f5,#0f5,#0f5,#3f0,#0f6,#0f5,#0f3,#0f1,#0f3,#0f3,#0f3,#0f5,#0fa,#0fd,#0f8,#0fc,#0fb,#0fb,#0fd,#0fa,#0fb,#0fa,#0f8,#0f4,#3f0,#2f0,#4f0,#4f0,#4f0,#5f0,#5f0,#6f0,#5f0,#5f0,#4f0,#4f0,#3f0,#0f0)"></i><i style="background:linear-gradient(#0fd,#0fd,#0fc,#0fe,#0fe,#0fa,#0f8,#0f5,#0f3,#0f1,#1f0,#2f0,#1f0,#0f0,#0f4,#0f5,#0f1,#2f0,#0f0,#0f2,#0f1,#5f0,#4f0,#0f2,#4f0,#2f0,#0f6,#1f0,#0f1,#0f3,#0f9,#0fc,#0f7,#0fa,#0fb,#0f8,#0f7,#0fa,#0f7,#0f3,#2f0,#3f0,#5f0,#6f0,#6f0,#6f0,#8f0,#7f0,#8f0,#7f0,#7f0,#8f0,#6f0,#5f0,#3f0)"></i><i style="background:linear-gradient(#0f7,#0fa,#0fb,#0ff,#0f9,#0fb,#0f7,#0f4,#0f0,#0f2,#0f1,#0f2,#0f4,#0f4,#0f1,#6f0,#2f0,#0f3,#0f1,#0f4,#0f3,#0f2,#0f2,#0f0,#2f0,#1f0,#0f1,#0f3,#0f5,#0f7,#0f7,#0f7,#0fb,#0fb,#0fb,#0fd,#0fb,#0f8,#0f9,#0f8,#0f3,#3f0,#3f0,#4f0,#5f0,#5f0,#6f0,#5f0,#8f0,#6f0,#6f0,#7f0,#4f0,#3f0,#0f0)"></i><i style="background:linear-gradient(#0f4,#0f7,#0fc,#0fa,#0fb,#0ef,#0f7,#0f2,#0f4,#0f1,#0f0,#0f0,#0f2,#0f3,#1f0,#0f3,#0f2,#0f0,#0f1,#0f4,#0f1,#0f5,#0f4,#0f2,#0f5,#0f6,#0f1,#0f3,#0f5,#0fb,#0f7,#0f8,#0f7,#0fc,#0fd,#0fc,#0f8,#0f9,#0fa,#0f7,#0f0,#3f0,#3f0,#4f0,#5f0,#5f0,#5f0,#6f0,#7f0,#6f0,#5f0,#6f0,#5f0,#4f0,#2f0)"></i><i style="background:linear-gradient(#0fc,#0fc,#0ff,#0df,#0fd,#0fa,#0fb,#0f9,#0f8,#0f6,#0f2,#0f2,#0f3,#0f3,#0f2,#0f5,#0f3,#0f2,#0f3,#0f2,#0f1,#0f6,#0f5,#0f4,#0f5,#0f4,#0f0,#0f5,#0f7,#0f9,#0f4,#0fe,#0fa,#0fd,#0ff,#0fc,#0fa,#0fa,#0fb,#0f9,#0f4,#3f0,#4f0,#4f0,#5f0,#6f0,#5f0,#5f0,#5f0,#6f0,#6f0,#5f0,#6f0,#2f0,#2f0)"></i><i style="background:linear-gradient(#0f7,#0f9,#0ff,#0fe,#0fb,#0f9,#0fa,#0f9,#0f4,#0f5,#0f3,#0f4,#0f4,#0f3,#0f4,#0f2,#0f3,#0f2,#1f0,#2f0,#0f4,#0f2,#0f2,#0f5,#0f6,#0f2,#0f0,#0f6,#0f8,#0f8,#0f7,#0fb,#0fb,#0f9,#0f8,#0f6,#0f9,#0fd,#0fa,#0f5,#0f0,#3f0,#2f0,#5f0,#6f0,#6f0,#7f0,#7f0,#7f0,#7f0,#7f0,#5f0,#5f0,#3f0,#2f0)"></i><i style="background:linear-gradient(#0fa,#0fb,#0df,#0cf,#0fe,#0fa,#0f5,#0f2,#0f5,#4f0,#2f0,#0f3,#0f4,#0f3,#0f4,#2f0,#0f1,#0f3,#0f2,#0f1,#0f1,#0f3,#0f3,#0f2,#0f3,#0f5,#0f1,#0f5,#0f7,#0f5,#0f8,#0f8,#0fa,#0fc,#0fc,#0fc,#0f9,#0fa,#0f9,#0f7,#0f3,#3f0,#5f0,#6f0,#6f0,#6f0,#7f0,#6f0,#8f0,#8f0,#7f0,#6f0,#7f0,#5f0,#1f0)"></i><i style="background:linear-gradient(#0f5,#0f8,#0f9,#0fc,#0fe,#0fd,#0f8,#0f5,#0f5,#0f0,#0f3,#0f7,#0f5,#0f2,#0f3,#0f2,#0f3,#0f4,#0f4,#0f5,#0f3,#0f5,#0f4,#0f2,#0f3,#0f6,#0f4,#0f6,#0f8,#0f9,#0fa,#0fb,#0fb,#0fb,#0fb,#0fc,#0fc,#0f8,#0f9,#0f6,#1f0,#0f0,#4f0,#3f0,#4f0,#6f0,#6f0,#6f0,#7f0,#5f0,#5f0,#4f0,#3f0,#4f0,#0f0)"></i><i style="background:linear-gradient(#0f9,#0f9,#0fd,#0fc,#0cf,#0fe,#0fa,#0f7,#0f4,#0f2,#0f3,#0f4,#0f4,#0f4,#0f6,#0f8,#0f5,#0f1,#0f1,#0f0,#0f2,#0f4,#0f4,#0f2,#0f4,#2f0,#0f5,#0f5,#0f7,#0f9,#0fa,#0fd,#0fb,#0fc,#0fc,#0fa,#0ef,#0fc,#0fa,#0f9,#0f6,#1f0,#2f0,#4f0,#4f0,#3f0,#4f0,#3f0,#6f0,#6f0,#6f0,#4f0,#5f0,#2f0,#0f0)"></i><i style="background:linear-gradient(#0fb,#0fd,#0f7,#0df,#0fd,#0f7,#0fa,#0fa,#0f4,#0f2,#0f3,#0f2,#0f4,#0f5,#0f1,#0f7,#0f5,#0f2,#0f4,#0f7,#0f1,#0f5,#0f4,#0f2,#0f3,#0f4,#0f5,#0f5,#0f7,#0f6,#0fb,#0fc,#0f8,#0fe,#0ff,#0fb,#0f9,#0fb,#0fc,#0f7,#0f0,#1f0,#5f0,#4f0,#4f0,#4f0,#4f0,#5f0,#7f0,#5f0,#4f0,#4f0,#6f0,#5f0,#1f0)"></i><i style="background:linear-gradient(#0fa,#0fc,#0fa,#0bf,#0fc,#0fd,#0f7,#0f4,#0f7,#0f6,#0f3,#0f1,#0f1,#0f1,#0f2,#0f0,#0f1,#0f3,#0f4,#0f3,#0f6,#0f4,#0f4,#0f3,#0f0,#0f0,#0f4,#0f2,#0f4,#0f9,#0fe,#0f7,#0f7,#0fd,#0ff,#0fa,#0fb,#0fb,#0fc,#0fb,#0f6,#2f0,#3f0,#3f0,#4f0,#4f0,#5f0,#4f0,#5f0,#6f0,#5f0,#4f0,#4f0,#4f0,#1f0)"></i><i style="background:linear-gradient(#0f6,#0f8,#0fe,#0df,#0fe,#0f9,#0fa,#0f8,#0f7,#0f6,#0f5,#0f2,#0f1,#0f2,#0f7,#0f1,#0f2,#0f0,#2f0,#1f0,#0f7,#0f0,#0f1,#0f3,#0f0,#1f0,#0f4,#0f5,#0f7,#0f6,#0fa,#0fb,#0fc,#0f9,#0f8,#0fb,#0f8,#0fb,#0f8,#0f6,#0f1,#3f0,#3f0,#4f0,#4f0,#5f0,#6f0,#6f0,#7f0,#7f0,#7f0,#7f0,#6f0,#4f0,#1f0)"></i><i style="background:linear-gradient(#0f5,#0f5,#0fa,#0fa,#0fa,#0f8,#0f7,#0f6,#0f8,#0f4,#0f4,#0f5,#0f7,#0f8,#0f5,#0f4,#0f6,#0f6,#0f3,#0f2,#0f4,#0f3,#0f4,#0f8,#0f3,#0f5,#0f5,#0f5,#0f6,#0f7,#0f8,#0fc,#0f9,#0f8,#0f8,#0f7,#0fa,#0fd,#0fa,#0f7,#0f2,#3f0,#6f0,#4f0,#5f0,#6f0,#7f0,#9f0,#7f0,#6f0,#6f0,#6f0,#4f0,#4f0,#1f0)"></i><i style="background:linear-gradient(#0ff,#0fe,#0ff,#0af,#0bf,#0ff,#0ef,#0ff,#0fc,#0fe,#0fa,#0f7,#0f7,#0f9,#0f7,#0fb,#0fa,#0f8,#0f7,#0f9,#0fb,#0fa,#0fb,#0fc,#0fb,#0f9,#0fe,#0f9,#0f9,#0fd,#0fc,#0fd,#0ef,#0fd,#0fc,#0fb,#0ef,#0fe,#0fc,#0fb,#0f7,#0f0,#2f0,#1f0,#2f0,#2f0,#2f0,#5f0,#5f0,#2f0,#2f0,#2f0,#5f0,#2f0,#0f3)"></i><i style="background:linear-gradient(#0ef,#0fe,#0fa,#0fd,#0ff,#0ff,#0fe,#0fd,#0ff,#0fc,#0fa,#0f9,#0f7,#0f6,#0f9,#0fa,#0fa,#0fc,#0fe,#0fc,#0ff,#0fc,#0fc,#0ef,#0fe,#0fc,#0fc,#0fa,#0fa,#0f9,#0fc,#0fc,#0fc,#0ff,#0ff,#0f8,#0fc,#0ff,#0fe,#0f8,#0f0,#2f0,#1f0,#4f0,#4f0,#4f0,#5f0,#5f0,#6f0,#4f0,#4f0,#4f0,#4f0,#3f0,#0f0)"></i><i style="background:linear-gradient(#0ef,#0ef,#0fc,#0fd,#0ef,#08f,#0df,#0fe,#0fd,#0fc,#0fd,#0fd,#0fb,#0f9,#0fe,#0ef,#0ff,#0ff,#0df,#0fe,#0fa,#0fc,#0fc,#0fb,#0fb,#0fd,#0fc,#0fb,#0fc,#0f7,#0f6,#0fa,#0fc,#0fc,#0fc,#0fa,#0ff,#0ef,#0fc,#0f7,#0f1,#0f1,#3f0,#3f0,#3f0,#4f0,#4f0,#4f0,#4f0,#4f0,#3f0,#3f0,#4f0,#2f0,#0f0)"></i><i style="background:linear-gradient(#0ef,#0ff,#0fd,#0cf,#0fd,#0fb,#0ff,#0ef,#0bf,#0f8,#0f9,#0fb,#0fa,#0f8,#0fe,#0fd,#0fd,#0fe,#0fd,#0fb,#0f9,#0fa,#0fb,#0ff,#0fb,#0f6,#0f8,#0f8,#0f8,#0fc,#0fa,#0fc,#0fd,#0fe,#0ff,#0fb,#0fa,#0fb,#0f9,#0f8,#0f4,#2f0,#3f0,#4f0,#4f0,#5f0,#5f0,#4f0,#5f0,#5f0,#5f0,#4f0,#4f0,#2f0,#0f0)"></i><i style="background:linear-gradient(#0df,#0ef,#0fc,#0ff,#0fd,#0ef,#0ff,#0fe,#0fd,#0df,#0ff,#0f9,#0f7,#0f8,#0fe,#0f8,#0f8,#0f8,#0f9,#0f8,#0fa,#0fa,#0f9,#0f5,#0f9,#0f7,#0f9,#0f9,#0f9,#0fc,#0fe,#0f7,#0fb,#0fd,#0fe,#0cf,#0f8,#0fa,#0fb,#0fa,#0f5,#1f0,#3f0,#3f0,#4f0,#4f0,#5f0,#8f0,#5f0,#4f0,#4f0,#4f0,#5f0,#3f0,#0f0)"></i><i style="background:linear-gradient(#0cf,#0df,#0f9,#0fb,#0ff,#0fe,#0fe,#0fd,#0ff,#0fd,#0fc,#0fb,#0fa,#0fa,#0fd,#0f8,#0f9,#0fb,#0fe,#0df,#0f9,#0fb,#0fb,#0fb,#0fd,#0fe,#0fa,#0fd,#0fd,#0f7,#0df,#0fa,#0ff,#0fc,#0fb,#0fb,#0f7,#0fc,#0fd,#0fa,#0f4,#0f0,#3f0,#4f0,#4f0,#4f0,#6f0,#5f0,#4f0,#5f0,#4f0,#4f0,#4f0,#4f0,#0f0)"></i><i style="background:linear-gradient(#0f7,#0f6,#0fb,#0ff,#0fc,#0cf,#0cf,#0cf,#0f8,#0ff,#0fc,#0fb,#0fc,#0fc,#0f9,#0fb,#0fa,#0f9,#0fa,#0fa,#0fc,#0fb,#0fb,#0fc,#0f8,#0f7,#0f9,#0fb,#0fb,#0fb,#0f9,#0fb,#0fa,#0fb,#0fc,#0fc,#0fc,#0fc,#0fb,#0f8,#0f3,#4f0,#5f0,#6f0,#6f0,#6f0,#6f0,#9f0,#9f0,#6f0,#5f0,#6f0,#5f0,#5f0,#1f0)"></i><i style="background:linear-gradient(#0ef,#0ff,#0fd,#0fc,#0f8,#0fc,#0ef,#0df,#0fd,#0fc,#0fb,#0fb,#0fa,#0f8,#0fa,#0fb,#0fc,#0ff,#0ff,#0f8,#0fc,#0fc,#0fc,#0fb,#0fb,#0fd,#0f8,#0fc,#0fc,#0fc,#0fe,#0fa,#0fb,#0fa,#0fa,#0fa,#0fa,#0fd,#0fd,#0f8,#0f0,#2f0,#2f0,#4f0,#4f0,#4f0,#5f0,#4f0,#5f0,#5f0,#4f0,#4f0,#4f0,#3f0,#2f0)"></i><i style="background:linear-gradient(#0f9,#0f8,#0fc,#0ff,#0ff,#0fe,#0fd,#0fc,#0ef,#0df,#0fb,#0fa,#0fd,#0fd,#0f7,#0fb,#0fa,#0f8,#0f9,#0fb,#0f9,#0fc,#0fb,#0f9,#0fb,#0fc,#0fc,#0fd,#0fd,#0fc,#0fc,#0fc,#0fe,#0fe,#0fd,#0f8,#0fb,#0fb,#0fc,#0f8,#0f2,#4f0,#3f0,#4f0,#5f0,#5f0,#5f0,#6f0,#5f0,#4f0,#4f0,#6f0,#5f0,#5f0,#0f1)"></i><i style="background:linear-gradient(#0cf,#0df,#0af,#0ff,#0fe,#0fc,#0fd,#0fc,#0fa,#0fc,#0fa,#0fc,#0fc,#0fb,#0f8,#0fb,#0fb,#0fd,#0ff,#0ff,#0fb,#0f9,#0f9,#0fa,#0ff,#0fd,#0fb,#0f8,#0f8,#0f7,#0fc,#0ff,#0fd,#0fa,#0f9,#0fc,#0df,#0fc,#0fa,#0f7,#0f1,#1f0,#3f0,#4f0,#5f0,#6f0,#6f0,#6f0,#4f0,#4f0,#5f0,#6f0,#5f0,#4f0,#0f0)"></i><i style="background:linear-gradient(#0fd,#0fc,#0fc,#0fe,#0ff,#0af,#0fb,#0f7,#0fd,#0fc,#0fa,#0fc,#0fb,#0f9,#0df,#0f9,#0fa,#0fb,#0f9,#0f9,#0fc,#0fa,#0f9,#0f5,#0fc,#0f9,#0fa,#0fa,#0fa,#0f7,#0fb,#0fc,#0fb,#0f9,#0f8,#0fc,#0f8,#0fb,#0fb,#0f8,#0f2,#2f0,#4f0,#5f0,#5f0,#5f0,#5f0,#8f0,#8f0,#5f0,#5f0,#5f0,#5f0,#5f0,#2f0)"></i><i style="background:linear-gradient(#0fa,#0f9,#0fd,#0f9,#0fb,#0fe,#0df,#0df,#0fe,#0fc,#0fa,#0fc,#0fc,#0fa,#0fc,#0f8,#0fb,#0fe,#0fa,#0fc,#0ef,#0fa,#0fb,#0fd,#0fd,#0f8,#0fd,#0fb,#0fc,#0af,#0fd,#0fa,#0ff,#0fb,#0f9,#0fc,#0fb,#0fc,#0ff,#0fa,#0f2,#3f0,#2f0,#3f0,#4f0,#4f0,#4f0,#6f0,#6f0,#5f0,#4f0,#6f0,#5f0,#4f0,#1f0)"></i><i style="background:linear-gradient(#0ef,#0ff,#0fb,#0cf,#0ef,#0ff,#0ef,#0ff,#0fc,#0fb,#0fa,#0fb,#0fb,#0fb,#0fc,#0ff,#0fe,#0fc,#0fc,#0fc,#0f9,#0fd,#0fd,#0fa,#0fd,#0fd,#0f7,#0f9,#0f9,#0fa,#0fb,#0f9,#0fd,#0f9,#0f8,#0f8,#0ff,#0fb,#0fb,#0f7,#0f1,#2f0,#3f0,#5f0,#5f0,#5f0,#5f0,#5f0,#6f0,#6f0,#6f0,#7f0,#5f0,#6f0,#1f0)"></i><i style="background:linear-gradient(#0ef,#0ff,#0f9,#0fe,#0fd,#0fe,#0fd,#0fc,#0fd,#0fb,#0fa,#0f8,#0fb,#0fe,#0fc,#0ff,#0fb,#0f6,#0f8,#0ff,#0fd,#0fb,#0fc,#0fd,#0f9,#0f7,#0fc,#0f8,#0f8,#0f7,#0fe,#0fd,#0f9,#0fb,#0fd,#0f7,#0f9,#0fa,#0fa,#0f9,#0f4,#3f0,#4f0,#4f0,#4f0,#5f0,#5f0,#6f0,#7f0,#4f0,#4f0,#6f0,#6f0,#4f0,#0f0)"></i><i style="background:linear-gradient(#0fb,#0fa,#0fd,#0fd,#0af,#0fe,#0fb,#0fb,#0fa,#0fa,#0f9,#0fc,#0f9,#0f4,#0fc,#0f6,#0f8,#0fb,#0fa,#0f8,#0fb,#0fa,#0fa,#0f9,#0fa,#0f8,#0fa,#0f7,#0f7,#0fc,#0ff,#0fc,#0fa,#0f8,#0f8,#0fa,#0f7,#0fa,#0fb,#0f8,#0f2,#5f0,#4f0,#5f0,#6f0,#7f0,#6f0,#9f0,#9f0,#9f0,#8f0,#8f0,#8f0,#7f0,#2f0)"></i><i style="background:linear-gradient(#0fb,#0fa,#0f9,#0ef,#0df,#0df,#0fe,#0fd,#0ef,#0ff,#0fe,#0df,#0fe,#0fa,#0af,#0fb,#0fd,#0ff,#0fd,#0fc,#0ef,#0df,#0df,#0fd,#0fb,#0fe,#0f7,#0fc,#0fc,#0f8,#0fa,#0fb,#0fd,#0fa,#0f9,#0fd,#0fd,#0fd,#0fe,#0fb,#0f5,#1f0,#3f0,#4f0,#4f0,#3f0,#2f0,#6f0,#5f0,#4f0,#4f0,#4f0,#3f0,#3f0,#0f1)"></i><i style="background:linear-gradient(#0df,#0df,#0fa,#0ff,#0fe,#0fc,#0fc,#0fb,#0fd,#0fd,#0fb,#0fb,#0fc,#0fc,#0f6,#0df,#0fe,#0fd,#0ff,#0fb,#0fe,#0fd,#0fd,#0fd,#0fd,#0fb,#0fa,#0f9,#0f9,#0ef,#0fb,#0ef,#0ef,#0fa,#0f9,#0fd,#0fe,#0fc,#0fc,#0fa,#0f6,#2f0,#3f0,#4f0,#4f0,#4f0,#5f0,#5f0,#7f0,#7f0,#7f0,#7f0,#6f0,#4f0,#1f0)"></i><i style="background:linear-gradient(#0ef,#0ff,#0fa,#0fd,#0fd,#0df,#0fd,#0fb,#0fc,#0fc,#0f8,#0f9,#0fc,#0fe,#0fd,#0fc,#0fb,#0fa,#0fb,#0fc,#0f9,#0fc,#0fd,#0df,#0ef,#0df,#0fc,#0fa,#0fa,#0fb,#0fe,#0fe,#0fa,#0f9,#0f8,#0fb,#0fb,#0fb,#0fd,#0fa,#0f4,#1f0,#3f0,#4f0,#5f0,#6f0,#5f0,#5f0,#4f0,#5f0,#5f0,#6f0,#5f0,#4f0,#1f0)"></i><i style="background:linear-gradient(#0f9,#0f8,#0fb,#0fb,#0fc,#0fd,#0cf,#0bf,#0bf,#0fd,#0fc,#0f8,#0f9,#0fb,#0f8,#0fb,#0fc,#0fb,#0fa,#0ff,#0fc,#0fb,#0fc,#0fe,#0ff,#0fc,#0fa,#0fb,#0fb,#0fe,#0f8,#0fa,#0fd,#0fa,#0f9,#0fe,#0f9,#0fc,#0fb,#0f8,#0f3,#2f0,#3f0,#2f0,#3f0,#4f0,#4f0,#4f0,#7f0,#6f0,#5f0,#3f0,#4f0,#4f0,#0f0)"></i><i style="background:linear-gradient(#0fa,#0f9,#0f8,#0fe,#0fe,#0fa,#0fa,#0fa,#0fb,#0f9,#0f8,#0f6,#0f6,#0f9,#0fa,#0f7,#0f6,#0f6,#0fa,#0fb,#0fc,#0fd,#0fe,#0fd,#0fb,#0fb,#0fc,#0f6,#0f6,#0f8,#0f8,#0fd,#0f8,#0fa,#0fa,#0fb,#0fa,#0fc,#0f8,#0f4,#1f0,#5f0,#6f0,#5f0,#6f0,#7f0,#8f0,#8f0,#9f0,#7f0,#7f0,#7f0,#9f0,#6f0,#3f0)"></i><i style="background:linear-gradient(#0fb,#0fb,#0f6,#0fc,#0f7,#0fc,#0fc,#0fc,#0fb,#0fa,#0fc,#0fd,#0fb,#0fa,#0f9,#0f9,#0f8,#0fa,#0ff,#0ff,#0fc,#0ef,#0df,#0bf,#0df,#0ef,#0fc,#0fb,#0fb,#0fe,#0fa,#0fc,#0f9,#0fc,#0fd,#0fb,#0f9,#0fc,#0fc,#0f8,#0f3,#3f0,#4f0,#4f0,#5f0,#6f0,#5f0,#4f0,#5f0,#6f0,#6f0,#6f0,#6f0,#6f0,#1f0)"></i><i style="background:linear-gradient(#0ff,#0fe,#0fb,#0ff,#0bf,#0fa,#0fc,#0fd,#0fa,#0fe,#0fd,#0f9,#0f6,#0f6,#0f8,#0fa,#0f9,#0fb,#0fc,#0f9,#0fd,#0cf,#0bf,#0ef,#0df,#0fa,#0fd,#0fa,#0fa,#0fa,#0fe,#0f9,#0fa,#0fc,#0fc,#0fd,#0f9,#0f9,#0f8,#0f7,#0f3,#3f0,#4f0,#5f0,#6f0,#6f0,#5f0,#5f0,#7f0,#7f0,#7f0,#6f0,#3f0,#4f0,#1f0)"></i><i style="background:linear-gradient(#0f7,#0f8,#0fc,#0cf,#0ff,#0fd,#0f8,#0f6,#0fb,#0f8,#0fb,#0fb,#0fb,#0fc,#0f6,#0fd,#0fb,#0f8,#0f8,#0fa,#0fc,#09f,#0af,#0fa,#0fa,#0fd,#0fb,#0f7,#0f7,#0fc,#0fc,#0fc,#0fa,#0f9,#0fa,#0fc,#0f9,#0fb,#0fb,#0f6,#1f0,#3f0,#4f0,#5f0,#5f0,#6f0,#6f0,#6f0,#7f0,#8f0,#7f0,#6f0,#6f0,#4f0,#2f0)"></i><i style="background:linear-gradient(#0df,#0ef,#0fe,#0ff,#0fc,#0ff,#0fe,#0fd,#0ef,#0fb,#0fc,#0fe,#0fc,#0fa,#0fc,#0f8,#0fa,#0fe,#0fe,#0fa,#0bf,#06f,#02f,#08f,#0ef,#0ff,#0ff,#0f7,#0f7,#0fe,#0fc,#0ff,#0f8,#0fe,#0df,#0fc,#0fd,#0fd,#0fa,#0f7,#0f2,#3f0,#3f0,#5f0,#5f0,#6f0,#6f0,#6f0,#6f0,#7f0,#6f0,#4f0,#5f0,#4f0,#2f0)"></i><i style="background:linear-gradient(#0fb,#0fa,#0fa,#0fc,#0fe,#0fd,#0fa,#0f9,#0fc,#0fb,#0f8,#0fa,#0f9,#0f6,#0f9,#0fb,#0fa,#0fa,#0fd,#0fd,#0fe,#0ef,#0df,#0cf,#0fe,#0fc,#0fa,#0fd,#0fe,#0fb,#0fd,#0fc,#0f8,#0fb,#0fc,#0fa,#0fe,#0fa,#0fb,#0f8,#0f1,#2f0,#4f0,#4f0,#4f0,#5f0,#6f0,#6f0,#7f0,#6f0,#6f0,#5f0,#4f0,#3f0,#1f0)"></i><i style="background:linear-gradient(#0fa,#0fb,#0f7,#0fd,#0fe,#0fd,#0f7,#0f4,#0fb,#0fa,#0f8,#0f9,#0fc,#0fd,#0fb,#0f8,#0f9,#0fa,#0fb,#0fe,#0fe,#0cf,#0bf,#0ff,#0cf,#0ff,#0ef,#0fb,#0fc,#0ff,#0fe,#0fa,#0fb,#0fb,#0fb,#0f8,#0ff,#0fd,#0fe,#0fb,#0f5,#3f0,#3f0,#3f0,#3f0,#3f0,#4f0,#6f0,#6f0,#5f0,#4f0,#4f0,#3f0,#2f0,#0f1)"></i><i style="background:linear-gradient(#0f7,#0f7,#0f9,#0f7,#0f8,#0f8,#0f9,#0f9,#0fa,#0fb,#0f9,#0f6,#0f7,#0f9,#0f7,#0f4,#0f7,#0fa,#0fa,#0fd,#0fb,#0df,#0bf,#0df,#0f9,#0fd,#0f9,#0fb,#0fc,#0fc,#0f9,#0ff,#0fd,#0ff,#0ff,#0fe,#0cf,#0ff,#0ef,#0fb,#0f5,#5f0,#3f0,#2f0,#3f0,#4f0,#5f0,#5f0,#5f0,#4f0,#4f0,#3f0,#4f0,#1f0,#0f0)"></i><i style="background:linear-gradient(#0f4,#0f4,#0f9,#0f6,#0f7,#0f5,#0f6,#0f6,#0f4,#0f5,#0f9,#0f8,#0f4,#0f3,#0f3,#0f6,#0f6,#0f6,#0f3,#0f5,#0fc,#0fd,#0fe,#0fc,#0f9,#0f9,#0f9,#0f3,#0f4,#0fa,#0ef,#0fb,#0fd,#0fc,#0fb,#0fb,#0f9,#0fa,#0fb,#0fb,#0f8,#3f0,#1f0,#5f0,#5f0,#5f0,#5f0,#5f0,#5f0,#4f0,#4f0,#5f0,#5f0,#4f0,#2f0)"></i><i style="background:linear-gradient(#0f7,#0f7,#0fc,#0f7,#0f7,#0f8,#0f8,#0f8,#0fc,#0fd,#0f8,#0f5,#0f8,#0fa,#0fa,#0fa,#0fa,#0f8,#0f7,#0f8,#0fb,#0fe,#0ef,#0ff,#0fa,#0f7,#0f7,#0f8,#0fa,#0fc,#0cf,#0fe,#0fe,#0fd,#0fd,#0f8,#0fa,#0fe,#0fd,#0f9,#0f4,#0f1,#3f0,#1f0,#2f0,#3f0,#3f0,#3f0,#4f0,#3f0,#3f0,#3f0,#3f0,#2f0,#0f1)"></i><i style="background:linear-gradient(#0f1,#0f1,#0f3,#0f4,#0f7,#0f8,#0f5,#0f4,#0f3,#0fa,#0f7,#0f6,#0f4,#0f3,#0f2,#0f8,#0f7,#0f6,#0f8,#0f9,#0fa,#0f9,#0fc,#0fe,#0fa,#0f5,#0f9,#0f6,#0f8,#0f6,#0fa,#0fc,#0fd,#0fb,#0fa,#0fb,#0fc,#0ff,#0fa,#0f6,#0f1,#3f0,#6f0,#6f0,#6f0,#6f0,#5f0,#7f0,#7f0,#5f0,#5f0,#5f0,#5f0,#5f0,#2f0)"></i><i style="background:linear-gradient(#0f6,#0f6,#0f3,#0f1,#0f3,#0f1,#0f0,#0f0,#0f3,#0f2,#0f4,#0f3,#0f5,#0f8,#0f4,#0f2,#0f4,#0f5,#0f3,#0f5,#0f4,#0f9,#0fb,#0fb,#0fb,#0f6,#0f5,#0f4,#0f5,#0f7,#0fc,#0fc,#0fe,#0ef,#0df,#0fa,#0fb,#0f7,#0f7,#0f7,#0f3,#5f0,#4f0,#6f0,#7f0,#7f0,#8f0,#7f0,#6f0,#8f0,#7f0,#7f0,#8f0,#4f0,#2f0)"></i><i style="background:linear-gradient(#0f6,#0f6,#0f5,#0f9,#0f7,#0f6,#0f4,#0f4,#0f7,#0f8,#0f5,#0f6,#0f7,#0f7,#0fa,#0f2,#0f3,#0f6,#0f7,#0fa,#0ef,#0fd,#0ff,#0fc,#0fd,#0f8,#0fa,#0f8,#0f9,#0fc,#0fb,#0fa,#0fb,#0fc,#0fd,#0ef,#0f9,#0ef,#0fe,#0f9,#0f2,#0f0,#2f0,#2f0,#2f0,#2f0,#2f0,#4f0,#4f0,#5f0,#5f0,#2f0,#4f0,#3f0,#0f0)"></i><i style="background:linear-gradient(#0f5,#0f5,#0f6,#0f5,#0f4,#0f6,#0f4,#0f4,#0f6,#0f5,#0f4,#0f3,#0f4,#0f4,#0fa,#0f2,#0f2,#0f5,#0f6,#0f5,#0f7,#0cf,#0cf,#0fd,#0fa,#0f7,#0f5,#0f3,#0f5,#0f7,#0fc,#0fb,#0ff,#0fc,#0fb,#0df,#0fa,#0fc,#0f9,#0f8,#0f5,#1f0,#3f0,#4f0,#4f0,#4f0,#5f0,#5f0,#8f0,#6f0,#6f0,#5f0,#4f0,#5f0,#0f0)"></i><i style="background:linear-gradient(#0f4,#0f4,#0f3,#0f4,#0f5,#0f2,#0f3,#0f3,#0f6,#0f5,#0f1,#0f1,#0f4,#0f4,#0f5,#0f3,#0f3,#0f3,#0f2,#0f3,#0f8,#0fa,#0fc,#0fc,#0f9,#0f5,#0f2,#0f2,#0f4,#0f3,#0f7,#0fc,#0fc,#0fa,#0fa,#0f9,#0fb,#0fa,#0fb,#0f7,#1f0,#2f0,#4f0,#6f0,#6f0,#6f0,#8f0,#6f0,#7f0,#7f0,#7f0,#6f0,#6f0,#5f0,#2f0)"></i><i style="background:linear-gradient(#0f2,#0f2,#0f7,#0f3,#0f6,#0f4,#0f6,#0f6,#0f8,#0f3,#0f4,#0f4,#0f4,#0f4,#0f4,#1f0,#0f1,#0f3,#0f4,#0f7,#0f9,#0ff,#0ef,#0fc,#0fd,#0f9,#0f3,#0f5,#0f6,#0fb,#0fd,#0fe,#0fe,#0fd,#0fc,#0ff,#0fd,#0fb,#0fb,#0f8,#0f3,#0f0,#3f0,#2f0,#3f0,#3f0,#3f0,#5f0,#7f0,#5f0,#4f0,#4f0,#3f0,#3f0,#0f0)"></i><i style="background:linear-gradient(#0f0,#0f0,#0f2,#0f5,#0f8,#0f5,#0f4,#0f3,#0f5,#0f7,#0f6,#0f8,#0f6,#0f3,#0f4,#0f0,#0f3,#0f6,#0f7,#0fa,#0f9,#0fc,#0fc,#0f8,#0fa,#0f7,#0f6,#0f8,#0fa,#0fa,#0fa,#0df,#0fe,#0fb,#0fa,#0fb,#0fa,#0fa,#0fc,#0fb,#0f5,#0f0,#4f0,#3f0,#3f0,#4f0,#4f0,#5f0,#6f0,#7f0,#6f0,#3f0,#5f0,#2f0,#1f0)"></i><i style="background:linear-gradient(#2f0,#2f0,#0f3,#0f2,#0f3,#0f4,#0f7,#0f8,#0f3,#0f5,#0f6,#0f7,#0f5,#0f3,#0f7,#0f3,#0f6,#0f9,#0f7,#0f8,#0f9,#0fb,#0fc,#0fa,#0f6,#0f4,#0f7,#0f6,#0f8,#0f7,#0fa,#0fd,#0ef,#0ff,#0ff,#0fd,#0fc,#0fb,#0fd,#0fd,#0f9,#1f0,#2f0,#2f0,#2f0,#2f0,#3f0,#6f0,#4f0,#4f0,#3f0,#3f0,#3f0,#2f0,#0f1)"></i><i style="background:linear-gradient(#0f1,#0f1,#0f1,#0f2,#0f4,#0f0,#0f3,#0f4,#0f0,#0f2,#0f5,#0f6,#0f4,#0f3,#0f3,#0f3,#0f4,#0f4,#0f4,#0f5,#0f4,#0f6,#0f7,#0f7,#0f4,#0f1,#0f0,#0f4,#0f6,#0f7,#0fc,#0f7,#0fa,#0f9,#0f9,#0fe,#0f9,#0fb,#0f9,#0f7,#0f2,#2f0,#5f0,#3f0,#4f0,#4f0,#5f0,#7f0,#6f0,#6f0,#5f0,#6f0,#6f0,#7f0,#1f0)"></i></div><div id="sb"><div class="st" style="top:107px;height:2px;background:linear-gradient(90deg,#10f,#20f,#02f,#20f,#00f,#00f,#06f,#05f,#01f,#01f,#30f,#03f,#02f,#02f,#00f,#00f,#03f,#00f,#10f,#01f,#00f,#10f,#0f0,#0f4,#0f9,#0fa,#0f5,#0f8,#0f5,#0f6,#0f8,#0f8,#0f4,#0f6,#0f8,#0f5,#0f8,#0f5,#0f8,#0f6,#0f5,#0f7,#0f5,#0f8,#0f5,#0f7,#0f6,#0f8,#0f5,#0f1,#0f7,#0f6,#0f7,#0f7,#0f8,#0f5,#0f8,#0f4,#0f7,#0f7,#0f7,#0f7,#0f6,#0f7,#0f8,#0f6,#0f7,#0f4,#0f4,#0f8,#0f6,#0f5,#0f7,#0f7,#0f6,#0f6,#0f8,#0f6,#0f6,#0f5,#0f7,#0f8,#0f6,#0f5,#0f8,#0f6,#0f5,#0f7,#0f8,#0f5,#0f3,#0f3,#0f7,#0f7,#0f8,#0f6,#0f6,#0f7,#0f5,#0f6,#0f3,#0f6,#0f6,#0f7,#0f4,#0f6,#0f4,#0f7,#0f6,#0f5,#0f8,#0f5,#0f5,#0f8,#0f5,#0f7,#0f7,#0f7,#0f5,#0f7,#0f7,#0f6,#0f7,#0f5,#0f7,#0f6,#0f6,#0f6,#0f6,#0f4,#0f7,#0f5,#0f2,#0f5,#0f6,#0f6,#0f6,#0f5,#0f5,#0f7,#0f5,#0f6,#0f8,#0f9,#0f5,#0f6,#0f5,#0f8,#0f4,#0f7,#0f8,#0f7,#0f4,#0f3,#0f6,#0f7,#0f4,#0f4,#0fa,#0f6,#0f5,#0f6,#0f3,#0f7,#0f5,#0f6,#0f6,#0f5,#0f5,#0f7,#0f4,#0f5,#0f3,#0f8,#0f7,#0f5,#0f6,#0f9,#0f8,#0f9,#0f6,#0f5,#0fb,#0f6,#0f5,#0f7,#0f7,#0f4,#0f9,#0f5,#0f5,#0f6,#0f5,#0f4,#0f6,#0f5,#0f6,#0f6,#0f5,#0f3,#0f7,#0f4,#0f8,#0f5,#0f4,#0f7,#0f9,#0f6,#0f7,#0f4,#0f3,#0f5,#0f5,#0f7,#0f7,#0f5,#0f7,#0f4,#0f8,#0f6,#0f6,#0f5,#0f9,#0f6,#0f7,#0f8,#0f7,#0f8,#0f5,#0f9,#0f5,#0f4,#0f6,#0f6,#0f6,#0f5,#0f6,#0f7,#0f5,#0f6,#0f7,#0f6,#0f5,#0f7,#0f4,#0f7,#0f8,#0f3,#0f9,#0f9,#0f5,#0f6,#0f6,#0f8,#0f8,#0f8,#0f7,#0f7,#0f5,#0f6,#0f5,#0f6,#0f9,#0f5,#0f9,#0f5,#0f5,#0f7,#0f4,#0f5,#0f6,#0f6,#0f6,#0f4,#0f6,#0f4,#0f5,#0f7,#0f5,#0f6,#0f3,#0f7,#0f6,#0f6,#0f8,#0f7,#0f6,#0f9,#0f5,#0f8,#0f3,#0f5,#0f6,#0f6,#0f8,#0f9,#0f4,#0f5,#0f7,#0f6,#0f4,#0f5,#0f7,#0f7,#0f5,#0f6,#0f6,#0f6,#0f6)"></div><div class="st" style="top:109px;height:3px;background:linear-gradient(90deg,#10f,#20f,#02f,#20f,#00f,#00f,#06f,#05f,#01f,#01f,#30f,#03f,#02f,#02f,#00f,#00f,#03f,#00f,#10f,#01f,#00f,#10f,#0f0,#0bf,#0ef,#0fe,#0bf,#0df,#0ef,#0fc,#0df,#0fc,#0ef,#0fe,#0fd,#0cf,#0fe,#0fd,#0fb,#0ff,#0fc,#0fd,#0ef,#0fd,#0ff,#0fb,#0cf,#0fc,#0ef,#0fd,#0fe,#0bf,#0df,#0ef,#0fb,#0df,#0fd,#0fc,#0fe,#0bf,#0df,#0fe,#0ff,#0df,#0fe,#0ff,#0fe,#0fc,#0ef,#0ff,#0cf,#0ef,#0fe,#0f9,#0ff,#0fe,#0df,#0ef,#0ff,#0ff,#0ef,#0fd,#0ff,#0df,#0fb,#0cf,#0fd,#0fe,#0ff,#0ef,#0df,#0cf,#0fd,#0fb,#0cf,#0df,#0ff,#0ff,#0fd,#0df,#0bf,#0ff,#0ef,#0ff,#0cf,#0ff,#0fc,#0ff,#0fd,#0cf,#0fd,#0ef,#0ff,#0bf,#0fd,#0ef,#0fd,#0ff,#0df,#0fd,#0fc,#0ff,#0ef,#0fe,#0fe,#0df,#0cf,#0fd,#0df,#0df,#0ff,#0ff,#0df,#0df,#0ff,#08f,#0df,#0cf,#0fd,#0ef,#0fe,#0fe,#0df,#0fd,#0ff,#0ff,#0bf,#0ef,#0fe,#0ef,#0fd,#0df,#0df,#0cf,#0cf,#09f,#0cf,#0fb,#0fe,#0ef,#0fc,#0ef,#0df,#0df,#0fd,#0fe,#0ef,#0ef,#0ef,#0fe,#0fe,#0fe,#0fe,#0fe,#0df,#0df,#0df,#0df,#0fa,#0fe,#0fd,#0ef,#0fd,#0ff,#0fd,#0cf,#0fc,#0fe,#0df,#0fe,#0df,#0fd,#0fd,#0ef,#0ef,#0ff,#0ff,#0fc,#0df,#0ef,#0ef,#0fc,#0fc,#0fc,#0cf,#0fa,#09f,#0ff,#0ff,#0ff,#0fa,#0fc,#0fc,#0df,#0fa,#0df,#0fd,#0fb,#0fd,#0fe,#0fd,#0df,#0fd,#0ff,#0fd,#0ff,#0fd,#0df,#0fd,#0fc,#0df,#0df,#0cf,#0ff,#0af,#0ff,#0df,#0fe,#0ff,#0fa,#0fe,#0fe,#0fe,#0fd,#0fe,#0ef,#0fd,#0fd,#0af,#0df,#0fe,#0fb,#0fd,#0ff,#0fe,#0fd,#0ff,#0fd,#0df,#0fd,#0df,#0ef,#0ff,#0fc,#0af,#0fc,#0df,#0ff,#0fb,#0ef,#0af,#0fb,#0ff,#0ff,#0fe,#0df,#0df,#0cf,#0ff,#0df,#0ff,#0fe,#0df,#0ef,#0fe,#0bf,#0fb,#0fb,#0ff,#0fd,#0fe,#0cf,#0ef,#0ff,#0ef,#0fb,#0fe,#0fe,#0cf,#0cf,#0ef,#0fc,#0cf,#0ef,#0fe,#0df,#0df,#0ef,#0cf)"></div><div class="st" style="top:112px;height:2.5px;background:linear-gradient(90deg,#60f,#40f,#50f,#60f,#80f,#50f,#60f,#30f,#50f,#60f,#30f,#60f,#60f,#60f,#60f,#50f,#60f,#60f,#70f,#70f,#60f,#60f,#0f0,#00f,#30f,#03f,#07f,#07f,#02f,#03f,#09f,#20f,#03f,#02f,#10f,#03f,#02f,#10f,#01f,#08f,#02f,#00f,#05f,#02f,#03f,#03f,#01f,#04f,#10f,#03f,#00f,#07f,#05f,#06f,#04f,#05f,#00f,#20f,#06f,#02f,#02f,#30f,#09f,#02f,#02f,#00f,#04f,#02f,#40f,#10f,#03f,#03f,#20f,#03f,#01f,#40f,#04f,#10f,#10f,#02f,#20f,#03f,#05f,#00f,#05f,#05f,#20f,#10f,#01f,#02f,#10f,#10f,#01f,#03f,#02f,#05f,#04f,#03f,#01f,#10f,#08f,#10f,#00f,#02f,#10f,#03f,#00f,#02f,#07f,#02f,#02f,#05f,#03f,#03f,#10f,#00f,#05f,#00f,#00f,#07f,#01f,#05f,#02f,#01f,#02f,#01f,#10f,#05f,#01f,#06f,#02f,#00f,#30f,#01f,#04f,#01f,#02f,#20f,#03f,#01f,#10f,#06f,#03f,#01f,#01f,#00f,#01f,#03f,#01f,#03f,#06f,#02f,#03f,#05f,#01f,#03f,#02f,#00f,#00f,#0af,#01f,#04f,#00f,#00f,#20f,#01f,#07f,#02f,#10f,#04f,#03f,#02f,#10f,#01f,#05f,#01f,#07f,#03f,#01f,#02f,#06f,#20f,#00f,#10f,#02f,#04f,#02f,#00f,#03f,#20f,#05f,#00f,#06f,#00f,#06f,#05f,#03f,#30f,#01f,#03f,#00f,#05f,#00f,#00f,#09f,#01f,#00f,#01f,#05f,#10f,#01f,#03f,#01f,#03f,#10f,#06f,#04f,#06f,#05f,#05f,#01f,#03f,#00f,#03f,#10f,#05f,#05f,#00f,#00f,#00f,#20f,#01f,#20f,#10f,#10f,#02f,#04f,#03f,#00f,#03f,#06f,#10f,#07f,#04f,#01f,#01f,#00f,#02f,#0af,#20f,#02f,#01f,#10f,#02f,#01f,#07f,#01f,#04f,#01f,#00f,#04f,#00f,#01f,#02f,#00f,#02f,#08f,#00f,#10f,#06f,#10f,#10f,#10f,#03f,#04f,#00f,#03f,#10f,#04f,#03f,#01f,#01f,#05f,#02f,#00f,#05f,#10f,#10f,#04f,#00f,#10f,#20f,#01f,#01f,#10f,#02f,#10f,#20f,#01f,#30f,#00f,#03f,#20f,#30f,#02f,#03f,#07f,#00f,#01f)"></div><div class="st" style="top:114.5px;height:2px;background:linear-gradient(90deg,#70f,#60f,#50f,#70f,#60f,#70f,#70f,#50f,#70f,#50f,#60f,#60f,#80f,#80f,#50f,#70f,#70f,#70f,#70f,#80f,#60f,#70f,#0ff,#20f,#40f,#00f,#60f,#20f,#60f,#50f,#10f,#30f,#60f,#40f,#80f,#60f,#60f,#80f,#30f,#70f,#50f,#20f,#30f,#60f,#50f,#40f,#70f,#40f,#40f,#20f,#40f,#40f,#80f,#40f,#30f,#40f,#50f,#50f,#60f,#40f,#70f,#30f,#50f,#40f,#50f,#50f,#70f,#10f,#20f,#40f,#60f,#10f,#40f,#50f,#60f,#50f,#20f,#60f,#50f,#50f,#30f,#20f,#40f,#40f,#40f,#60f,#50f,#70f,#40f,#50f,#40f,#60f,#00f,#20f,#50f,#60f,#50f,#50f,#50f,#40f,#70f,#60f,#40f,#80f,#00f,#30f,#40f,#30f,#40f,#50f,#40f,#40f,#20f,#40f,#20f,#10f,#30f,#40f,#70f,#60f,#70f,#50f,#30f,#80f,#40f,#80f,#50f,#30f,#60f,#20f,#40f,#50f,#50f,#50f,#40f,#70f,#50f,#60f,#40f,#60f,#40f,#10f,#10f,#50f,#40f,#30f,#50f,#40f,#60f,#30f,#60f,#00f,#60f,#40f,#20f,#40f,#80f,#30f,#40f,#30f,#80f,#00f,#80f,#20f,#70f,#70f,#30f,#60f,#00f,#20f,#40f,#50f,#50f,#40f,#40f,#50f,#40f,#40f,#20f,#60f,#50f,#30f,#30f,#80f,#30f,#50f,#20f,#50f,#60f,#02f,#60f,#70f,#40f,#30f,#30f,#40f,#70f,#00f,#80f,#40f,#70f,#40f,#40f,#40f,#60f,#60f,#80f,#60f,#70f,#50f,#70f,#40f,#40f,#30f,#30f,#50f,#30f,#30f,#70f,#20f,#60f,#50f,#20f,#50f,#30f,#60f,#60f,#20f,#50f,#20f,#20f,#30f,#30f,#60f,#60f,#40f,#30f,#70f,#50f,#40f,#30f,#50f,#60f,#40f,#60f,#60f,#40f,#00f,#00f,#70f,#00f,#70f,#50f,#60f,#20f,#50f,#30f,#50f,#50f,#60f,#50f,#60f,#00f,#10f,#20f,#01f,#50f,#60f,#60f,#70f,#50f,#40f,#60f,#40f,#40f,#60f,#70f,#40f,#50f,#60f,#80f,#10f,#30f,#50f,#60f,#30f,#60f,#40f,#80f,#40f,#30f,#20f,#40f,#30f,#40f,#40f,#50f,#80f,#60f,#40f,#80f,#20f,#30f,#70f,#30f,#50f,#10f,#60f,#20f)"></div><div class="st" style="top:116.5px;height:2px;background:linear-gradient(90deg,#80f,#80f,#000,#000,#000,#000,#80f,#80f,#000,#000,#80f,#000,#80f,#000,#000,#80f,#80f,#000,#000,#80f,#80f,#000,#40f,#80f,#70f,#70f,#70f,#80f,#70f,#70f,#70f,#70f,#80f,#70f,#70f,#70f,#70f,#80f,#70f,#80f,#60f,#70f,#80f,#70f,#60f,#60f,#60f,#80f,#70f,#80f,#60f,#60f,#80f,#70f,#80f,#70f,#80f,#80f,#60f,#70f,#60f,#70f,#80f,#80f,#60f,#60f,#70f,#50f,#70f,#60f,#70f,#60f,#80f,#70f,#80f,#70f,#80f,#70f,#80f,#80f,#70f,#80f,#80f,#60f,#80f,#60f,#60f,#60f,#70f,#80f,#80f,#80f,#80f,#80f,#70f,#60f,#80f,#60f,#80f,#50f,#60f,#60f,#70f,#80f,#80f,#70f,#80f,#70f,#70f,#80f,#60f,#70f,#70f,#70f,#80f,#70f,#80f,#70f,#80f,#60f,#60f,#80f,#70f,#70f,#60f,#70f,#70f,#50f,#70f,#70f,#70f,#70f,#80f,#60f,#80f,#80f,#60f,#60f,#70f,#80f,#80f,#60f,#80f,#70f,#80f,#60f,#80f,#70f,#70f,#70f,#80f,#60f,#80f,#70f,#80f,#70f,#60f,#80f,#60f,#80f,#60f,#60f,#60f,#70f,#70f,#80f,#70f,#70f,#60f,#50f,#60f,#80f,#70f,#70f,#80f,#80f,#70f,#80f,#50f,#80f,#70f,#60f,#70f,#60f,#80f,#70f,#80f,#80f,#70f,#80f,#60f,#80f,#70f,#80f,#80f,#80f,#80f,#60f,#80f,#70f,#80f,#70f,#80f,#80f,#70f,#70f,#70f,#70f,#70f,#80f,#80f,#70f,#80f,#70f,#70f,#80f,#70f,#70f,#80f,#70f,#70f,#80f,#70f,#60f,#80f,#70f,#80f,#80f,#70f,#80f,#70f,#60f,#70f,#80f,#70f,#70f,#70f,#80f,#70f,#70f,#80f,#80f,#70f,#80f,#80f,#70f,#70f,#80f,#70f,#70f,#80f,#70f,#60f,#70f,#70f,#80f,#50f,#80f,#70f,#80f,#80f,#70f,#70f,#60f,#60f,#60f,#70f,#80f,#80f,#60f,#70f,#80f,#80f,#80f,#70f,#60f,#60f,#70f,#70f,#70f,#80f,#80f,#70f,#70f,#70f,#70f,#70f,#80f,#70f,#70f,#60f,#80f,#60f,#70f,#70f,#70f,#70f,#80f,#80f,#60f,#70f,#60f,#70f,#60f,#80f,#80f,#80f,#60f,#70f)"></div></div>
<svg width="1024" height="708" viewBox="0 0 1024 708" shape-rendering="crispEdges">
<defs><linearGradient id="rb" x1="0" y1="0" x2="0" y2="1"><stop offset="0" stop-color="#ff1000"/><stop offset=".2" stop-color="#ffff00"/><stop offset=".4" stop-color="#00ff00"/><stop offset=".6" stop-color="#00ffff"/><stop offset=".8" stop-color="#0000ff"/><stop offset="1" stop-color="#8000ff"/></linearGradient><linearGradient id="g0"><stop offset="0" stop-color="#20f000"/><stop offset="0.25" stop-color="#a0ff00"/><stop offset="0.5" stop-color="#ffff00"/><stop offset="0.75" stop-color="#ffb000"/><stop offset="1" stop-color="#ff9c00"/></linearGradient><linearGradient id="g1"><stop offset="0" stop-color="#20f000"/><stop offset="0.25" stop-color="#b0ff00"/><stop offset="0.5" stop-color="#ffff00"/><stop offset="0.75" stop-color="#ff6000"/><stop offset="1" stop-color="#ff1400"/></linearGradient><linearGradient id="g2"><stop offset="0" stop-color="#00f000"/><stop offset="0.25" stop-color="#30f800"/><stop offset="0.5" stop-color="#a0ff00"/><stop offset="0.75" stop-color="#fff000"/><stop offset="1" stop-color="#ffa400"/></linearGradient><linearGradient id="g3"><stop offset="0" stop-color="#00f820"/><stop offset="0.25" stop-color="#00f010"/><stop offset="0.5" stop-color="#10f000"/><stop offset="0.75" stop-color="#70ff00"/><stop offset="1" stop-color="#b4ff00"/></linearGradient><linearGradient id="g4"><stop offset="0" stop-color="#00ff70"/><stop offset="0.25" stop-color="#00f830"/><stop offset="0.5" stop-color="#00f008"/><stop offset="0.75" stop-color="#08f000"/><stop offset="1" stop-color="#10f400"/></linearGradient><linearGradient id="g5"><stop offset="0" stop-color="#00f8f0"/><stop offset="0.25" stop-color="#00ffe8"/><stop offset="0.5" stop-color="#00fcd0"/><stop offset="0.75" stop-color="#00f8a0"/><stop offset="1" stop-color="#00f888"/></linearGradient><linearGradient id="g6"><stop offset="0" stop-color="#00a0ff"/><stop offset="0.25" stop-color="#0088ff"/><stop offset="0.5" stop-color="#0090ff"/><stop offset="0.75" stop-color="#00b8ff"/><stop offset="1" stop-color="#00d0f8"/></linearGradient><linearGradient id="g7"><stop offset="0" stop-color="#0070ff"/><stop offset="0.25" stop-color="#0030ff"/><stop offset="0.5" stop-color="#0020ff"/><stop offset="0.75" stop-color="#0040ff"/><stop offset="1" stop-color="#0050f4"/></linearGradient><linearGradient id="g8"><stop offset="0" stop-color="#0080ff"/><stop offset="0.25" stop-color="#0028ff"/><stop offset="0.5" stop-color="#1000ff"/><stop offset="0.75" stop-color="#2800ff"/><stop offset="1" stop-color="#3000f4"/></linearGradient><linearGradient id="g9"><stop offset="0" stop-color="#00a8ff"/><stop offset="0.25" stop-color="#0040ff"/><stop offset="0.5" stop-color="#1000ff"/><stop offset="0.75" stop-color="#5000ff"/><stop offset="1" stop-color="#5000ff"/></linearGradient><linearGradient id="g10"><stop offset="0" stop-color="#00e8ff"/><stop offset="0.25" stop-color="#00a0ff"/><stop offset="0.5" stop-color="#0030ff"/><stop offset="0.75" stop-color="#2000ff"/><stop offset="1" stop-color="#3000f8"/></linearGradient></defs>
<rect x="210" y="61" width="620" height="1" fill="#fff"/>
<rect x="210" y="220" width="620" height="1" fill="#fff"/>
<rect x="210" y="61" width="1" height="160" fill="#fff"/>
<rect x="829" y="61" width="1" height="160" fill="#fff"/>
<rect x="211" y="62" width="1" height="5" fill="#fff"/>
<rect x="211" y="214" width="1" height="6" fill="#fff"/>
<rect x="216" y="62" width="1" height="5" fill="#fff"/>
<rect x="216" y="214" width="1" height="6" fill="#fff"/>
<rect x="222" y="62" width="1" height="5" fill="#fff"/>
<rect x="222" y="214" width="1" height="6" fill="#fff"/>
<rect x="228" y="62" width="1" height="9" fill="#fff"/>
<rect x="228" y="210" width="1" height="10" fill="#fff"/>
<rect x="234" y="62" width="1" height="5" fill="#fff"/>
<rect x="234" y="214" width="1" height="6" fill="#fff"/>
<rect x="240" y="62" width="1" height="5" fill="#fff"/>
<rect x="240" y="214" width="1" height="6" fill="#fff"/>
<rect x="246" y="62" width="1" height="5" fill="#fff"/>
<rect x="246" y="214" width="1" height="6" fill="#fff"/>
<rect x="252" y="62" width="1" height="5" fill="#fff"/>
<rect x="252" y="214" width="1" height="6" fill="#fff"/>
<rect x="257" y="62" width="1" height="5" fill="#fff"/>
<rect x="257" y="214" width="1" height="6" fill="#fff"/>
<rect x="263" y="62" width="1" height="5" fill="#fff"/>
<rect x="263" y="214" width="1" height="6" fill="#fff"/>
<rect x="269" y="62" width="1" height="5" fill="#fff"/>
<rect x="269" y="214" width="1" height="6" fill="#fff"/>
<rect x="275" y="62" width="1" height="5" fill="#fff"/>
<rect x="275" y="214" width="1" height="6" fill="#fff"/>
<rect x="281" y="62" width="1" height="9" fill="#fff"/>
<rect x="281" y="210" width="1" height="10" fill="#fff"/>
<rect x="287" y="62" width="1" height="5" fill="#fff"/>
<rect x="287" y="214" width="1" height="6" fill="#fff"/>
<rect x="293" y="62" width="1" height="5" fill="#fff"/>
<rect x="293" y="214" width="1" height="6" fill="#fff"/>
<rect x="298" y="62" width="1" height="5" fill="#fff"/>
<rect x="298" y="214" width="1" height="6" fill="#fff"/>
<rect x="304" y="62" width="1" height="5" fill="#fff"/>
<rect x="304" y="214" width="1" height="6" fill="#fff"/>
<rect x="310" y="62" width="1" height="5" fill="#fff"/>
<rect x="310" y="214" width="1" height="6" fill="#fff"/>
<rect x="316" y="62" width="1" height="5" fill="#fff"/>
<rect x="316" y="214" width="1" height="6" fill="#fff"/>
<rect x="322" y="62" width="1" height="5" fill="#fff"/>
<rect x="322" y="214" width="1" height="6" fill="#fff"/>
<rect x="328" y="62" width="1" height="5" fill="#fff"/>
<rect x="328" y="214" width="1" height="6" fill="#fff"/>
<rect x="334" y="62" width="1" height="9" fill="#fff"/>
<rect x="334" y="210" width="1" height="10" fill="#fff"/>
<rect x="339" y="62" width="1" height="5" fill="#fff"/>
<rect x="339" y="214" width="1" height="6" fill="#fff"/>
<rect x="345" y="62" width="1" height="5" fill="#fff"/>
<rect x="345" y="214" width="1" height="6" fill="#fff"/>
<rect x="351" y="62" width="1" height="5" fill="#fff"/>
<rect x="351" y="214" width="1" height="6" fill="#fff"/>
<rect x="357" y="62" width="1" height="5" fill="#fff"/>
<rect x="357" y="214" width="1" height="6" fill="#fff"/>
<rect x="363" y="62" width="1" height="5" fill="#fff"/>
<rect x="363" y="214" width="1" height="6" fill="#fff"/>
<rect x="369" y="62" width="1" height="5" fill="#fff"/>
<rect x="369" y="214" width="1" height="6" fill="#fff"/>
<rect x="375" y="62" width="1" height="5" fill="#fff"/>
<rect x="375" y="214" width="1" height="6" fill="#fff"/>
<rect x="381" y="62" width="1" height="5" fill="#fff"/>
<rect x="381" y="214" width="1" height="6" fill="#fff"/>
<rect x="386" y="62" width="1" height="9" fill="#fff"/>
<rect x="386" y="210" width="1" height="10" fill="#fff"/>
<rect x="392" y="62" width="1" height="5" fill="#fff"/>
<rect x="392" y="214" width="1" height="6" fill="#fff"/>
<rect x="398" y="62" width="1" height="5" fill="#fff"/>
<rect x="398" y="214" width="1" height="6" fill="#fff"/>
<rect x="404" y="62" width="1" height="5" fill="#fff"/>
<rect x="404" y="214" width="1" height="6" fill="#fff"/>
<rect x="410" y="62" width="1" height="5" fill="#fff"/>
<rect x="410" y="214" width="1" height="6" fill="#fff"/>
<rect x="416" y="62" width="1" height="5" fill="#fff"/>
<rect x="416" y="214" width="1" height="6" fill="#fff"/>
<rect x="422" y="62" width="1" height="5" fill="#fff"/>
<rect x="422" y="214" width="1" height="6" fill="#fff"/>
<rect x="427" y="62" width="1" height="5" fill="#fff"/>
<rect x="427" y="214" width="1" height="6" fill="#fff"/>
<rect x="433" y="62" width="1" height="5" fill="#fff"/>
<rect x="433" y="214" width="1" height="6" fill="#fff"/>
<rect x="439" y="62" width="1" height="9" fill="#fff"/>
<rect x="439" y="210" width="1" height="10" fill="#fff"/>
<rect x="445" y="62" width="1" height="5" fill="#fff"/>
<rect x="445" y="214" width="1" height="6" fill="#fff"/>
<rect x="451" y="62" width="1" height="5" fill="#fff"/>
<rect x="451" y="214" width="1" height="6" fill="#fff"/>
<rect x="457" y="62" width="1" height="5" fill="#fff"/>
<rect x="457" y="214" width="1" height="6" fill="#fff"/>
<rect x="463" y="62" width="1" height="5" fill="#fff"/>
<rect x="463" y="214" width="1" height="6" fill="#fff"/>
<rect x="468" y="62" width="1" height="5" fill="#fff"/>
<rect x="468" y="214" width="1" height="6" fill="#fff"/>
<rect x="474" y="62" width="1" height="5" fill="#fff"/>
<rect x="474" y="214" width="1" height="6" fill="#fff"/>
<rect x="480" y="62" width="1" height="5" fill="#fff"/>
<rect x="480" y="214" width="1" height="6" fill="#fff"/>
<rect x="486" y="62" width="1" height="5" fill="#fff"/>
<rect x="486" y="214" width="1" height="6" fill="#fff"/>
<rect x="492" y="62" width="1" height="9" fill="#fff"/>
<rect x="492" y="210" width="1" height="10" fill="#fff"/>
<rect x="498" y="62" width="1" height="5" fill="#fff"/>
<rect x="498" y="214" width="1" height="6" fill="#fff"/>
<rect x="504" y="62" width="1" height="5" fill="#fff"/>
<rect x="504" y="214" width="1" height="6" fill="#fff"/>
<rect x="510" y="62" width="1" height="5" fill="#fff"/>
<rect x="510" y="214" width="1" height="6" fill="#fff"/>
<rect x="515" y="62" width="1" height="5" fill="#fff"/>
<rect x="515" y="214" width="1" height="6" fill="#fff"/>
<rect x="521" y="62" width="1" height="5" fill="#fff"/>
<rect x="521" y="214" width="1" height="6" fill="#fff"/>
<rect x="527" y="62" width="1" height="5" fill="#fff"/>
<rect x="527" y="214" width="1" height="6" fill="#fff"/>
<rect x="533" y="62" width="1" height="5" fill="#fff"/>
<rect x="533" y="214" width="1" height="6" fill="#fff"/>
<rect x="539" y="62" width="1" height="5" fill="#fff"/>
<rect x="539" y="214" width="1" height="6" fill="#fff"/>
<rect x="545" y="62" width="1" height="9" fill="#fff"/>
<rect x="545" y="210" width="1" height="10" fill="#fff"/>
<rect x="551" y="62" width="1" height="5" fill="#fff"/>
<rect x="551" y="214" width="1" height="6" fill="#fff"/>
<rect x="556" y="62" width="1" height="5" fill="#fff"/>
<rect x="556" y="214" width="1" height="6" fill="#fff"/>
<rect x="562" y="62" width="1" height="5" fill="#fff"/>
<rect x="562" y="214" width="1" height="6" fill="#fff"/>
<rect x="568" y="62" width="1" height="5" fill="#fff"/>
<rect x="568" y="214" width="1" height="6" fill="#fff"/>
<rect x="574" y="62" width="1" height="5" fill="#fff"/>
<rect x="574" y="214" width="1" height="6" fill="#fff"/>
<rect x="580" y="62" width="1" height="5" fill="#fff"/>
<rect x="580" y="214" width="1" height="6" fill="#fff"/>
<rect x="586" y="62" width="1" height="5" fill="#fff"/>
<rect x="586" y="214" width="1" height="6" fill="#fff"/>
<rect x="592" y="62" width="1" height="5" fill="#fff"/>
<rect x="592" y="214" width="1" height="6" fill="#fff"/>
<rect x="597" y="62" width="1" height="9" fill="#fff"/>
<rect x="597" y="210" width="1" height="10" fill="#fff"/>
<rect x="603" y="62" width="1" height="5" fill="#fff"/>
<rect x="603" y="214" width="1" height="6" fill="#fff"/>
<rect x="609" y="62" width="1" height="5" fill="#fff"/>
<rect x="609" y="214" width="1" height="6" fill="#fff"/>
<rect x="615" y="62" width="1" height="5" fill="#fff"/>
<rect x="615" y="214" width="1" height="6" fill="#fff"/>
<rect x="621" y="62" width="1" height="5" fill="#fff"/>
<rect x="621" y="214" width="1" height="6" fill="#fff"/>
<rect x="627" y="62" width="1" height="5" fill="#fff"/>
<rect x="627" y="214" width="1" height="6" fill="#fff"/>
<rect x="633" y="62" width="1" height="5" fill="#fff"/>
<rect x="633" y="214" width="1" height="6" fill="#fff"/>
<rect x="639" y="62" width="1" height="5" fill="#fff"/>
<rect x="639" y="214" width="1" height="6" fill="#fff"/>
<rect x="644" y="62" width="1" height="5" fill="#fff"/>
<rect x="644" y="214" width="1" height="6" fill="#fff"/>
<rect x="650" y="62" width="1" height="9" fill="#fff"/>
<rect x="650" y="210" width="1" height="10" fill="#fff"/>
<rect x="656" y="62" width="1" height="5" fill="#fff"/>
<rect x="656" y="214" width="1" height="6" fill="#fff"/>
<rect x="662" y="62" width="1" height="5" fill="#fff"/>
<rect x="662" y="214" width="1" height="6" fill="#fff"/>
<rect x="668" y="62" width="1" height="5" fill="#fff"/>
<rect x="668" y="214" width="1" height="6" fill="#fff"/>
<rect x="674" y="62" width="1" height="5" fill="#fff"/>
<rect x="674" y="214" width="1" height="6" fill="#fff"/>
<rect x="680" y="62" width="1" height="5" fill="#fff"/>
<rect x="680" y="214" width="1" height="6" fill="#fff"/>
<rect x="685" y="62" width="1" height="5" fill="#fff"/>
<rect x="685" y="214" width="1" height="6" fill="#fff"/>
<rect x="691" y="62" width="1" height="5" fill="#fff"/>
<rect x="691" y="214" width="1" height="6" fill="#fff"/>
<rect x="697" y="62" width="1" height="5" fill="#fff"/>
<rect x="697" y="214" width="1" height="6" fill="#fff"/>
<rect x="703" y="62" width="1" height="9" fill="#fff"/>
<rect x="703" y="210" width="1" height="10" fill="#fff"/>
<rect x="709" y="62" width="1" height="5" fill="#fff"/>
<rect x="709" y="214" width="1" height="6" fill="#fff"/>
<rect x="715" y="62" width="1" height="5" fill="#fff"/>
<rect x="715" y="214" width="1" height="6" fill="#fff"/>
<rect x="721" y="62" width="1" height="5" fill="#fff"/>
<rect x="721" y="214" width="1" height="6" fill="#fff"/>
<rect x="726" y="62" width="1" height="5" fill="#fff"/>
<rect x="726" y="214" width="1" height="6" fill="#fff"/>
<rect x="732" y="62" width="1" height="5" fill="#fff"/>
<rect x="732" y="214" width="1" height="6" fill="#fff"/>
<rect x="738" y="62" width="1" height="5" fill="#fff"/>
<rect x="738" y="214" width="1" height="6" fill="#fff"/>
<rect x="744" y="62" width="1" height="5" fill="#fff"/>
<rect x="744" y="214" width="1" height="6" fill="#fff"/>
<rect x="750" y="62" width="1" height="5" fill="#fff"/>
<rect x="750" y="214" width="1" height="6" fill="#fff"/>
<rect x="756" y="62" width="1" height="9" fill="#fff"/>
<rect x="756" y="210" width="1" height="10" fill="#fff"/>
<rect x="762" y="62" width="1" height="5" fill="#fff"/>
<rect x="762" y="214" width="1" height="6" fill="#fff"/>
<rect x="767" y="62" width="1" height="5" fill="#fff"/>
<rect x="767" y="214" width="1" height="6" fill="#fff"/>
<rect x="773" y="62" width="1" height="5" fill="#fff"/>
<rect x="773" y="214" width="1" height="6" fill="#fff"/>
<rect x="779" y="62" width="1" height="5" fill="#fff"/>
<rect x="779" y="214" width="1" height="6" fill="#fff"/>
<rect x="785" y="62" width="1" height="5" fill="#fff"/>
<rect x="785" y="214" width="1" height="6" fill="#fff"/>
<rect x="791" y="62" width="1" height="5" fill="#fff"/>
<rect x="791" y="214" width="1" height="6" fill="#fff"/>
<rect x="797" y="62" width="1" height="5" fill="#fff"/>
<rect x="797" y="214" width="1" height="6" fill="#fff"/>
<rect x="803" y="62" width="1" height="5" fill="#fff"/>
<rect x="803" y="214" width="1" height="6" fill="#fff"/>
<rect x="809" y="62" width="1" height="9" fill="#fff"/>
<rect x="809" y="210" width="1" height="10" fill="#fff"/>
<rect x="814" y="62" width="1" height="5" fill="#fff"/>
<rect x="814" y="214" width="1" height="6" fill="#fff"/>
<rect x="820" y="62" width="1" height="5" fill="#fff"/>
<rect x="820" y="214" width="1" height="6" fill="#fff"/>
<rect x="826" y="62" width="1" height="5" fill="#fff"/>
<rect x="826" y="214" width="1" height="6" fill="#fff"/>
<rect x="204" y="61" width="6" height="1" fill="#fff"/>
<rect x="830" y="61" width="6" height="1" fill="#fff"/>
<rect x="201" y="81" width="9" height="1" fill="#fff"/>
<rect x="830" y="81" width="9" height="1" fill="#fff"/>
<rect x="204" y="88" width="6" height="1" fill="#fff"/>
<rect x="830" y="88" width="6" height="1" fill="#fff"/>
<rect x="204" y="97" width="6" height="1" fill="#fff"/>
<rect x="830" y="97" width="6" height="1" fill="#fff"/>
<rect x="204" y="109" width="6" height="1" fill="#fff"/>
<rect x="830" y="109" width="6" height="1" fill="#fff"/>
<rect x="204" y="130" width="6" height="1" fill="#fff"/>
<rect x="830" y="130" width="6" height="1" fill="#fff"/>
<rect x="201" y="150" width="9" height="1" fill="#fff"/>
<rect x="830" y="150" width="9" height="1" fill="#fff"/>
<rect x="204" y="157" width="6" height="1" fill="#fff"/>
<rect x="830" y="157" width="6" height="1" fill="#fff"/>
<rect x="204" y="166" width="6" height="1" fill="#fff"/>
<rect x="830" y="166" width="6" height="1" fill="#fff"/>
<rect x="204" y="178" width="6" height="1" fill="#fff"/>
<rect x="830" y="178" width="6" height="1" fill="#fff"/>
<rect x="204" y="199" width="6" height="1" fill="#fff"/>
<rect x="830" y="199" width="6" height="1" fill="#fff"/>
<rect x="201" y="220" width="9" height="1" fill="#fff"/>
<rect x="830" y="220" width="9" height="1" fill="#fff"/>
<text x="176.2" y="86.7" font-size="13.5" textLength="11.2" lengthAdjust="spacingAndGlyphs">10</text>
<text x="188.3" y="80" font-size="9" textLength="6.2" lengthAdjust="spacingAndGlyphs">2</text>
<text x="176.2" y="155.8" font-size="13.5" textLength="11.2" lengthAdjust="spacingAndGlyphs">10</text>
<text x="188.3" y="149.1" font-size="9" textLength="6.2" lengthAdjust="spacingAndGlyphs">1</text>
<text x="176.2" y="224.9" font-size="13.5" textLength="11.2" lengthAdjust="spacingAndGlyphs">10</text>
<text x="188.3" y="218.2" font-size="9" textLength="6.2" lengthAdjust="spacingAndGlyphs">0</text>
<text x="118" y="239.4" font-size="14.5" textLength="63.5" lengthAdjust="spacingAndGlyphs">GMT(min)</text>
<text x="210.8" y="239.4" font-size="14.5" textLength="35.6" lengthAdjust="spacingAndGlyphs">12:00</text>
<text x="316.334" y="239.4" font-size="14.5" textLength="35.6" lengthAdjust="spacingAndGlyphs">13:00</text>
<text x="421.868" y="239.4" font-size="14.5" textLength="35.6" lengthAdjust="spacingAndGlyphs">14:00</text>
<text x="527.402" y="239.4" font-size="14.5" textLength="35.6" lengthAdjust="spacingAndGlyphs">15:00</text>
<text x="580.169" y="239.4" font-size="14.5" textLength="35.6" lengthAdjust="spacingAndGlyphs">15:30</text>
<text x="685.703" y="239.4" font-size="14.5" textLength="35.6" lengthAdjust="spacingAndGlyphs">16:30</text>
<text x="791.237" y="239.4" font-size="14.5" textLength="35.6" lengthAdjust="spacingAndGlyphs">17:30</text>
<text x="418.2" y="31.2" font-size="17.2" textLength="88.3" lengthAdjust="spacingAndGlyphs">2005/259</text>
<text x="516" y="31.2" font-size="17.2" textLength="106.1" lengthAdjust="spacingAndGlyphs">11:50:00.000</text>
<text x="264.2" y="52.3" font-size="16.6" textLength="111" lengthAdjust="spacingAndGlyphs">ELSSCIL/MEx</text>
<text x="386.7" y="52.3" font-size="16.6" textLength="65.7" lengthAdjust="spacingAndGlyphs">ELS-07</text>
<text x="461.9" y="52.3" font-size="16.6" textLength="52" lengthAdjust="spacingAndGlyphs">LR-Bk</text>
<text x="534" y="52.3" font-size="16.6" textLength="241.8" lengthAdjust="spacingAndGlyphs">(ergs/(cm**2-sr-sec-eV))</text>
<text x="69.6" y="205" font-size="16" textLength="65.8" lengthAdjust="spacingAndGlyphs" transform="rotate(-90 69.6 205)">Electron</text>
<text x="69.6" y="130.4" font-size="16" textLength="55.6" lengthAdjust="spacingAndGlyphs" transform="rotate(-90 69.6 130.4)">Energy</text>
<text x="88.8" y="140.8" font-size="16" text-anchor="middle" textLength="33" lengthAdjust="spacingAndGlyphs" transform="rotate(-90 88.8 140.8)">(eV)</text>
<text x="851.9" y="59.8" font-size="16.8" textLength="31.5" lengthAdjust="spacingAndGlyphs">DEF</text>
<rect x="850" y="77" width="33" height="128" fill="#fff"/>
<rect x="851" y="78" width="31" height="126" fill="url(#rb)"/>
<rect x="878" y="81" width="4" height="1" fill="#fff"/>
<rect x="878" y="86" width="4" height="1" fill="#fff"/>
<rect x="878" y="94" width="4" height="1" fill="#fff"/>
<rect x="878" y="107" width="4" height="1" fill="#fff"/>
<text x="894.6" y="82.8" font-size="17.4" textLength="16.4" lengthAdjust="spacingAndGlyphs">10</text>
<text x="914.5" y="73.4" font-size="11.8" textLength="13" lengthAdjust="spacingAndGlyphs">&#8722;3</text>
<rect x="875" y="119" width="7" height="1" fill="#fff"/>
<rect x="878" y="123" width="4" height="1" fill="#fff"/>
<rect x="878" y="129" width="4" height="1" fill="#fff"/>
<rect x="878" y="136" width="4" height="1" fill="#fff"/>
<rect x="878" y="149" width="4" height="1" fill="#fff"/>
<text x="894.6" y="124.9" font-size="17.4" textLength="16.4" lengthAdjust="spacingAndGlyphs">10</text>
<text x="914.5" y="115.5" font-size="11.8" textLength="13" lengthAdjust="spacingAndGlyphs">&#8722;4</text>
<rect x="875" y="161" width="7" height="1" fill="#fff"/>
<rect x="878" y="165" width="4" height="1" fill="#fff"/>
<rect x="878" y="171" width="4" height="1" fill="#fff"/>
<rect x="878" y="178" width="4" height="1" fill="#fff"/>
<rect x="878" y="191" width="4" height="1" fill="#fff"/>
<text x="894.6" y="167" font-size="17.4" textLength="16.4" lengthAdjust="spacingAndGlyphs">10</text>
<text x="914.5" y="157.6" font-size="11.8" textLength="13" lengthAdjust="spacingAndGlyphs">&#8722;5</text>
<text x="894.6" y="209.1" font-size="17.4" textLength="16.4" lengthAdjust="spacingAndGlyphs">10</text>
<text x="914.5" y="199.7" font-size="11.8" textLength="13" lengthAdjust="spacingAndGlyphs">&#8722;6</text>
<rect x="221" y="256" width="36" height="18" fill="url(#g0)"/>
<rect x="257" y="256" width="562" height="18" fill="#ff9c00"/>
<rect x="221" y="274" width="36" height="17" fill="url(#g1)"/>
<rect x="257" y="274" width="562" height="17" fill="#ff1400"/>
<rect x="221" y="291" width="36" height="18" fill="url(#g2)"/>
<rect x="257" y="291" width="562" height="18" fill="#ffa400"/>
<rect x="221" y="309" width="36" height="18" fill="url(#g3)"/>
<rect x="257" y="309" width="562" height="18" fill="#b4ff00"/>
<rect x="221" y="327" width="36" height="17" fill="url(#g4)"/>
<rect x="257" y="327" width="562" height="17" fill="#10f400"/>
<rect x="221" y="344" width="36" height="18" fill="url(#g5)"/>
<rect x="257" y="344" width="562" height="18" fill="#00f888"/>
<rect x="221" y="362" width="36" height="17" fill="url(#g6)"/>
<rect x="257" y="362" width="562" height="17" fill="#00d0f8"/>
<rect x="221" y="379" width="36" height="18" fill="url(#g7)"/>
<rect x="257" y="379" width="562" height="18" fill="#0050f4"/>
<rect x="221" y="397" width="36" height="18" fill="url(#g8)"/>
<rect x="257" y="397" width="562" height="18" fill="#3000f4"/>
<rect x="221" y="415" width="36" height="17" fill="url(#g9)"/>
<rect x="221" y="432" width="36" height="17" fill="url(#g10)"/>
<rect x="257" y="432" width="562" height="17" fill="#3000f8"/>
<rect x="221" y="273" width="598" height="1" fill="#000"/>
<rect x="221" y="290" width="598" height="1" fill="#000"/>
<rect x="221" y="308" width="598" height="1" fill="#000"/>
<rect x="221" y="326" width="598" height="1" fill="#000"/>
<rect x="221" y="343" width="598" height="1" fill="#000"/>
<rect x="221" y="361" width="598" height="1" fill="#000"/>
<rect x="221" y="378" width="598" height="1" fill="#000"/>
<rect x="221" y="396" width="598" height="1" fill="#000"/>
<rect x="221" y="414" width="598" height="1" fill="#000"/>
<rect x="221" y="431" width="598" height="1" fill="#000"/>
<rect x="232" y="256" width="1" height="193" fill="#000"/>
<rect x="248" y="256" width="1" height="193" fill="#000"/>
<rect x="263" y="256" width="1" height="193" fill="#000"/>
<rect x="279" y="256" width="1" height="193" fill="#000"/>
<rect x="294" y="256" width="1" height="193" fill="#000"/>
<rect x="310" y="256" width="1" height="193" fill="#000"/>
<rect x="325" y="256" width="1" height="193" fill="#000"/>
<rect x="341" y="256" width="1" height="193" fill="#000"/>
<rect x="356" y="256" width="1" height="193" fill="#000"/>
<rect x="372" y="256" width="1" height="193" fill="#000"/>
<rect x="387" y="256" width="1" height="193" fill="#000"/>
<rect x="403" y="256" width="1" height="193" fill="#000"/>
<rect x="419" y="256" width="1" height="193" fill="#000"/>
<rect x="434" y="256" width="1" height="193" fill="#000"/>
<rect x="450" y="256" width="1" height="193" fill="#000"/>
<rect x="465" y="256" width="1" height="193" fill="#000"/>
<rect x="481" y="256" width="1" height="193" fill="#000"/>
<rect x="496" y="256" width="1" height="193" fill="#000"/>
<rect x="512" y="256" width="1" height="193" fill="#000"/>
<rect x="527" y="256" width="1" height="193" fill="#000"/>
<rect x="543" y="256" width="1" height="193" fill="#000"/>
<rect x="558" y="256" width="1" height="193" fill="#000"/>
<rect x="574" y="256" width="1" height="193" fill="#000"/>
<rect x="590" y="256" width="1" height="193" fill="#000"/>
<rect x="605" y="256" width="1" height="193" fill="#000"/>
<rect x="621" y="256" width="1" height="193" fill="#000"/>
<rect x="636" y="256" width="1" height="193" fill="#000"/>
<rect x="652" y="256" width="1" height="193" fill="#000"/>
<rect x="667" y="256" width="1" height="193" fill="#000"/>
<rect x="683" y="256" width="1" height="193" fill="#000"/>
<rect x="698" y="256" width="1" height="193" fill="#000"/>
<rect x="714" y="256" width="1" height="193" fill="#000"/>
<rect x="729" y="256" width="1" height="193" fill="#000"/>
<rect x="745" y="256" width="1" height="193" fill="#000"/>
<rect x="761" y="256" width="1" height="193" fill="#000"/>
<rect x="776" y="256" width="1" height="193" fill="#000"/>
<rect x="792" y="256" width="1" height="193" fill="#000"/>
<rect x="807" y="256" width="1" height="193" fill="#000"/>
<rect x="254" y="414" width="565" height="18" fill="#000"/>
<rect x="210" y="255" width="620" height="1" fill="#fff"/>
<rect x="210" y="449" width="620" height="1" fill="#fff"/>
<rect x="210" y="255" width="1" height="195" fill="#fff"/>
<rect x="829" y="255" width="1" height="195" fill="#fff"/>
<rect x="211" y="256" width="1" height="6" fill="#fff"/>
<rect x="211" y="443" width="1" height="6" fill="#fff"/>
<rect x="216" y="256" width="1" height="6" fill="#fff"/>
<rect x="216" y="443" width="1" height="6" fill="#fff"/>
<rect x="222" y="256" width="1" height="6" fill="#fff"/>
<rect x="222" y="443" width="1" height="6" fill="#fff"/>
<rect x="228" y="256" width="1" height="9" fill="#fff"/>
<rect x="228" y="440" width="1" height="9" fill="#fff"/>
<rect x="234" y="256" width="1" height="6" fill="#fff"/>
<rect x="234" y="443" width="1" height="6" fill="#fff"/>
<rect x="240" y="256" width="1" height="6" fill="#fff"/>
<rect x="240" y="443" width="1" height="6" fill="#fff"/>
<rect x="246" y="256" width="1" height="6" fill="#fff"/>
<rect x="246" y="443" width="1" height="6" fill="#fff"/>
<rect x="252" y="256" width="1" height="6" fill="#fff"/>
<rect x="252" y="443" width="1" height="6" fill="#fff"/>
<rect x="257" y="256" width="1" height="6" fill="#fff"/>
<rect x="257" y="443" width="1" height="6" fill="#fff"/>
<rect x="263" y="256" width="1" height="6" fill="#fff"/>
<rect x="263" y="443" width="1" height="6" fill="#fff"/>
<rect x="269" y="256" width="1" height="6" fill="#fff"/>
<rect x="269" y="443" width="1" height="6" fill="#fff"/>
<rect x="275" y="256" width="1" height="6" fill="#fff"/>
<rect x="275" y="443" width="1" height="6" fill="#fff"/>
<rect x="281" y="256" width="1" height="9" fill="#fff"/>
<rect x="281" y="440" width="1" height="9" fill="#fff"/>
<rect x="287" y="256" width="1" height="6" fill="#fff"/>
<rect x="287" y="443" width="1" height="6" fill="#fff"/>
<rect x="293" y="256" width="1" height="6" fill="#fff"/>
<rect x="293" y="443" width="1" height="6" fill="#fff"/>
<rect x="298" y="256" width="1" height="6" fill="#fff"/>
<rect x="298" y="443" width="1" height="6" fill="#fff"/>
<rect x="304" y="256" width="1" height="6" fill="#fff"/>
<rect x="304" y="443" width="1" height="6" fill="#fff"/>
<rect x="310" y="256" width="1" height="6" fill="#fff"/>
<rect x="310" y="443" width="1" height="6" fill="#fff"/>
<rect x="316" y="256" width="1" height="6" fill="#fff"/>
<rect x="316" y="443" width="1" height="6" fill="#fff"/>
<rect x="322" y="256" width="1" height="6" fill="#fff"/>
<rect x="322" y="443" width="1" height="6" fill="#fff"/>
<rect x="328" y="256" width="1" height="6" fill="#fff"/>
<rect x="328" y="443" width="1" height="6" fill="#fff"/>
<rect x="334" y="256" width="1" height="9" fill="#fff"/>
<rect x="334" y="440" width="1" height="9" fill="#fff"/>
<rect x="339" y="256" width="1" height="6" fill="#fff"/>
<rect x="339" y="443" width="1" height="6" fill="#fff"/>
<rect x="345" y="256" width="1" height="6" fill="#fff"/>
<rect x="345" y="443" width="1" height="6" fill="#fff"/>
<rect x="351" y="256" width="1" height="6" fill="#fff"/>
<rect x="351" y="443" width="1" height="6" fill="#fff"/>
<rect x="357" y="256" width="1" height="6" fill="#fff"/>
<rect x="357" y="443" width="1" height="6" fill="#fff"/>
<rect x="363" y="256" width="1" height="6" fill="#fff"/>
<rect x="363" y="443" width="1" height="6" fill="#fff"/>
<rect x="369" y="256" width="1" height="6" fill="#fff"/>
<rect x="369" y="443" width="1" height="6" fill="#fff"/>
<rect x="375" y="256" width="1" height="6" fill="#fff"/>
<rect x="375" y="443" width="1" height="6" fill="#fff"/>
<rect x="381" y="256" width="1" height="6" fill="#fff"/>
<rect x="381" y="443" width="1" height="6" fill="#fff"/>
<rect x="386" y="256" width="1" height="9" fill="#fff"/>
<rect x="386" y="440" width="1" height="9" fill="#fff"/>
<rect x="392" y="256" width="1" height="6" fill="#fff"/>
<rect x="392" y="443" width="1" height="6" fill="#fff"/>
<rect x="398" y="256" width="1" height="6" fill="#fff"/>
<rect x="398" y="443" width="1" height="6" fill="#fff"/>
<rect x="404" y="256" width="1" height="6" fill="#fff"/>
<rect x="404" y="443" width="1" height="6" fill="#fff"/>
<rect x="410" y="256" width="1" height="6" fill="#fff"/>
<rect x="410" y="443" width="1" height="6" fill="#fff"/>
<rect x="416" y="256" width="1" height="6" fill="#fff"/>
<rect x="416" y="443" width="1" height="6" fill="#fff"/>
<rect x="422" y="256" width="1" height="6" fill="#fff"/>
<rect x="422" y="443" width="1" height="6" fill="#fff"/>
<rect x="427" y="256" width="1" height="6" fill="#fff"/>
<rect x="427" y="443" width="1" height="6" fill="#fff"/>
<rect x="433" y="256" width="1" height="6" fill="#fff"/>
<rect x="433" y="443" width="1" height="6" fill="#fff"/>
<rect x="439" y="256" width="1" height="9" fill="#fff"/>
<rect x="439" y="440" width="1" height="9" fill="#fff"/>
<rect x="445" y="256" width="1" height="6" fill="#fff"/>
<rect x="445" y="443" width="1" height="6" fill="#fff"/>
<rect x="451" y="256" width="1" height="6" fill="#fff"/>
<rect x="451" y="443" width="1" height="6" fill="#fff"/>
<rect x="457" y="256" width="1" height="6" fill="#fff"/>
<rect x="457" y="443" width="1" height="6" fill="#fff"/>
<rect x="463" y="256" width="1" height="6" fill="#fff"/>
<rect x="463" y="443" width="1" height="6" fill="#fff"/>
<rect x="468" y="256" width="1" height="6" fill="#fff"/>
<rect x="468" y="443" width="1" height="6" fill="#fff"/>
<rect x="474" y="256" width="1" height="6" fill="#fff"/>
<rect x="474" y="443" width="1" height="6" fill="#fff"/>
<rect x="480" y="256" width="1" height="6" fill="#fff"/>
<rect x="480" y="443" width="1" height="6" fill="#fff"/>
<rect x="486" y="256" width="1" height="6" fill="#fff"/>
<rect x="486" y="443" width="1" height="6" fill="#fff"/>
<rect x="492" y="256" width="1" height="9" fill="#fff"/>
<rect x="492" y="440" width="1" height="9" fill="#fff"/>
<rect x="498" y="256" width="1" height="6" fill="#fff"/>
<rect x="498" y="443" width="1" height="6" fill="#fff"/>
<rect x="504" y="256" width="1" height="6" fill="#fff"/>
<rect x="504" y="443" width="1" height="6" fill="#fff"/>
<rect x="510" y="256" width="1" height="6" fill="#fff"/>
<rect x="510" y="443" width="1" height="6" fill="#fff"/>
<rect x="515" y="256" width="1" height="6" fill="#fff"/>
<rect x="515" y="443" width="1" height="6" fill="#fff"/>
<rect x="521" y="256" width="1" height="6" fill="#fff"/>
<rect x="521" y="443" width="1" height="6" fill="#fff"/>
<rect x="527" y="256" width="1" height="6" fill="#fff"/>
<rect x="527" y="443" width="1" height="6" fill="#fff"/>
<rect x="533" y="256" width="1" height="6" fill="#fff"/>
<rect x="533" y="443" width="1" height="6" fill="#fff"/>
<rect x="539" y="256" width="1" height="6" fill="#fff"/>
<rect x="539" y="443" width="1" height="6" fill="#fff"/>
<rect x="545" y="256" width="1" height="9" fill="#fff"/>
<rect x="545" y="440" width="1" height="9" fill="#fff"/>
<rect x="551" y="256" width="1" height="6" fill="#fff"/>
<rect x="551" y="443" width="1" height="6" fill="#fff"/>
<rect x="556" y="256" width="1" height="6" fill="#fff"/>
<rect x="556" y="443" width="1" height="6" fill="#fff"/>
<rect x="562" y="256" width="1" height="6" fill="#fff"/>
<rect x="562" y="443" width="1" height="6" fill="#fff"/>
<rect x="568" y="256" width="1" height="6" fill="#fff"/>
<rect x="568" y="443" width="1" height="6" fill="#fff"/>
<rect x="574" y="256" width="1" height="6" fill="#fff"/>
<rect x="574" y="443" width="1" height="6" fill="#fff"/>
<rect x="580" y="256" width="1" height="6" fill="#fff"/>
<rect x="580" y="443" width="1" height="6" fill="#fff"/>
<rect x="586" y="256" width="1" height="6" fill="#fff"/>
<rect x="586" y="443" width="1" height="6" fill="#fff"/>
<rect x="592" y="256" width="1" height="6" fill="#fff"/>
<rect x="592" y="443" width="1" height="6" fill="#fff"/>
<rect x="597" y="256" width="1" height="9" fill="#fff"/>
<rect x="597" y="440" width="1" height="9" fill="#fff"/>
<rect x="603" y="256" width="1" height="6" fill="#fff"/>
<rect x="603" y="443" width="1" height="6" fill="#fff"/>
<rect x="609" y="256" width="1" height="6" fill="#fff"/>
<rect x="609" y="443" width="1" height="6" fill="#fff"/>
<rect x="615" y="256" width="1" height="6" fill="#fff"/>
<rect x="615" y="443" width="1" height="6" fill="#fff"/>
<rect x="621" y="256" width="1" height="6" fill="#fff"/>
<rect x="621" y="443" width="1" height="6" fill="#fff"/>
<rect x="627" y="256" width="1" height="6" fill="#fff"/>
<rect x="627" y="443" width="1" height="6" fill="#fff"/>
<rect x="633" y="256" width="1" height="6" fill="#fff"/>
<rect x="633" y="443" width="1" height="6" fill="#fff"/>
<rect x="639" y="256" width="1" height="6" fill="#fff"/>
<rect x="639" y="443" width="1" height="6" fill="#fff"/>
<rect x="644" y="256" width="1" height="6" fill="#fff"/>
<rect x="644" y="443" width="1" height="6" fill="#fff"/>
<rect x="650" y="256" width="1" height="9" fill="#fff"/>
<rect x="650" y="440" width="1" height="9" fill="#fff"/>
<rect x="656" y="256" width="1" height="6" fill="#fff"/>
<rect x="656" y="443" width="1" height="6" fill="#fff"/>
<rect x="662" y="256" width="1" height="6" fill="#fff"/>
<rect x="662" y="443" width="1" height="6" fill="#fff"/>
<rect x="668" y="256" width="1" height="6" fill="#fff"/>
<rect x="668" y="443" width="1" height="6" fill="#fff"/>
<rect x="674" y="256" width="1" height="6" fill="#fff"/>
<rect x="674" y="443" width="1" height="6" fill="#fff"/>
<rect x="680" y="256" width="1" height="6" fill="#fff"/>
<rect x="680" y="443" width="1" height="6" fill="#fff"/>
<rect x="685" y="256" width="1" height="6" fill="#fff"/>
<rect x="685" y="443" width="1" height="6" fill="#fff"/>
<rect x="691" y="256" width="1" height="6" fill="#fff"/>
<rect x="691" y="443" width="1" height="6" fill="#fff"/>
<rect x="697" y="256" width="1" height="6" fill="#fff"/>
<rect x="697" y="443" width="1" height="6" fill="#fff"/>
<rect x="703" y="256" width="1" height="9" fill="#fff"/>
<rect x="703" y="440" width="1" height="9" fill="#fff"/>
<rect x="709" y="256" width="1" height="6" fill="#fff"/>
<rect x="709" y="443" width="1" height="6" fill="#fff"/>
<rect x="715" y="256" width="1" height="6" fill="#fff"/>
<rect x="715" y="443" width="1" height="6" fill="#fff"/>
<rect x="721" y="256" width="1" height="6" fill="#fff"/>
<rect x="721" y="443" width="1" height="6" fill="#fff"/>
<rect x="726" y="256" width="1" height="6" fill="#fff"/>
<rect x="726" y="443" width="1" height="6" fill="#fff"/>
<rect x="732" y="256" width="1" height="6" fill="#fff"/>
<rect x="732" y="443" width="1" height="6" fill="#fff"/>
<rect x="738" y="256" width="1" height="6" fill="#fff"/>
<rect x="738" y="443" width="1" height="6" fill="#fff"/>
<rect x="744" y="256" width="1" height="6" fill="#fff"/>
<rect x="744" y="443" width="1" height="6" fill="#fff"/>
<rect x="750" y="256" width="1" height="6" fill="#fff"/>
<rect x="750" y="443" width="1" height="6" fill="#fff"/>
<rect x="756" y="256" width="1" height="9" fill="#fff"/>
<rect x="756" y="440" width="1" height="9" fill="#fff"/>
<rect x="762" y="256" width="1" height="6" fill="#fff"/>
<rect x="762" y="443" width="1" height="6" fill="#fff"/>
<rect x="767" y="256" width="1" height="6" fill="#fff"/>
<rect x="767" y="443" width="1" height="6" fill="#fff"/>
<rect x="773" y="256" width="1" height="6" fill="#fff"/>
<rect x="773" y="443" width="1" height="6" fill="#fff"/>
<rect x="779" y="256" width="1" height="6" fill="#fff"/>
<rect x="779" y="443" width="1" height="6" fill="#fff"/>
<rect x="785" y="256" width="1" height="6" fill="#fff"/>
<rect x="785" y="443" width="1" height="6" fill="#fff"/>
<rect x="791" y="256" width="1" height="6" fill="#fff"/>
<rect x="791" y="443" width="1" height="6" fill="#fff"/>
<rect x="797" y="256" width="1" height="6" fill="#fff"/>
<rect x="797" y="443" width="1" height="6" fill="#fff"/>
<rect x="803" y="256" width="1" height="6" fill="#fff"/>
<rect x="803" y="443" width="1" height="6" fill="#fff"/>
<rect x="809" y="256" width="1" height="9" fill="#fff"/>
<rect x="809" y="440" width="1" height="9" fill="#fff"/>
<rect x="814" y="256" width="1" height="6" fill="#fff"/>
<rect x="814" y="443" width="1" height="6" fill="#fff"/>
<rect x="820" y="256" width="1" height="6" fill="#fff"/>
<rect x="820" y="443" width="1" height="6" fill="#fff"/>
<rect x="826" y="256" width="1" height="6" fill="#fff"/>
<rect x="826" y="443" width="1" height="6" fill="#fff"/>
<text x="117.6" y="269.57" font-size="14" text-anchor="end" textLength="43.2" lengthAdjust="spacingAndGlyphs">ELS-11</text>
<text x="127" y="269.57" font-size="14" textLength="30.3" lengthAdjust="spacingAndGlyphs">Pitch</text>
<text x="167" y="269.57" font-size="14" textLength="35.8" lengthAdjust="spacingAndGlyphs">Angle</text>
<text x="117.6" y="287.21" font-size="14" text-anchor="end" textLength="49.7" lengthAdjust="spacingAndGlyphs">ELS-10</text>
<text x="127" y="287.21" font-size="14" textLength="30.3" lengthAdjust="spacingAndGlyphs">Pitch</text>
<text x="167" y="287.21" font-size="14" textLength="35.8" lengthAdjust="spacingAndGlyphs">Angle</text>
<text x="117.6" y="304.85" font-size="14" text-anchor="end" textLength="49.7" lengthAdjust="spacingAndGlyphs">ELS-09</text>
<text x="127" y="304.85" font-size="14" textLength="30.3" lengthAdjust="spacingAndGlyphs">Pitch</text>
<text x="167" y="304.85" font-size="14" textLength="35.8" lengthAdjust="spacingAndGlyphs">Angle</text>
<text x="117.6" y="322.49" font-size="14" text-anchor="end" textLength="49.7" lengthAdjust="spacingAndGlyphs">ELS-08</text>
<text x="127" y="322.49" font-size="14" textLength="30.3" lengthAdjust="spacingAndGlyphs">Pitch</text>
<text x="167" y="322.49" font-size="14" textLength="35.8" lengthAdjust="spacingAndGlyphs">Angle</text>
<text x="117.6" y="340.13" font-size="14" text-anchor="end" textLength="49.7" lengthAdjust="spacingAndGlyphs">ELS-07</text>
<text x="127" y="340.13" font-size="14" textLength="30.3" lengthAdjust="spacingAndGlyphs">Pitch</text>
<text x="167" y="340.13" font-size="14" textLength="35.8" lengthAdjust="spacingAndGlyphs">Angle</text>
<text x="117.6" y="357.77" font-size="14" text-anchor="end" textLength="49.7" lengthAdjust="spacingAndGlyphs">ELS-06</text>
<text x="127" y="357.77" font-size="14" textLength="30.3" lengthAdjust="spacingAndGlyphs">Pitch</text>
<text x="167" y="357.77" font-size="14" textLength="35.8" lengthAdjust="spacingAndGlyphs">Angle</text>
<text x="117.6" y="375.41" font-size="14" text-anchor="end" textLength="49.7" lengthAdjust="spacingAndGlyphs">ELS-05</text>
<text x="127" y="375.41" font-size="14" textLength="30.3" lengthAdjust="spacingAndGlyphs">Pitch</text>
<text x="167" y="375.41" font-size="14" textLength="35.8" lengthAdjust="spacingAndGlyphs">Angle</text>
<text x="117.6" y="393.05" font-size="14" text-anchor="end" textLength="49.7" lengthAdjust="spacingAndGlyphs">ELS-04</text>
<text x="127" y="393.05" font-size="14" textLength="30.3" lengthAdjust="spacingAndGlyphs">Pitch</text>
<text x="167" y="393.05" font-size="14" textLength="35.8" lengthAdjust="spacingAndGlyphs">Angle</text>
<text x="117.6" y="410.69" font-size="14" text-anchor="end" textLength="49.7" lengthAdjust="spacingAndGlyphs">ELS-03</text>
<text x="127" y="410.69" font-size="14" textLength="30.3" lengthAdjust="spacingAndGlyphs">Pitch</text>
<text x="167" y="410.69" font-size="14" textLength="35.8" lengthAdjust="spacingAndGlyphs">Angle</text>
<text x="117.6" y="428.33" font-size="14" text-anchor="end" textLength="49.7" lengthAdjust="spacingAndGlyphs">ELS-02</text>
<text x="127" y="428.33" font-size="14" textLength="30.3" lengthAdjust="spacingAndGlyphs">Pitch</text>
<text x="167" y="428.33" font-size="14" textLength="35.8" lengthAdjust="spacingAndGlyphs">Angle</text>
<text x="117.6" y="445.97" font-size="14" text-anchor="end" textLength="49.7" lengthAdjust="spacingAndGlyphs">ELS-01</text>
<text x="127" y="445.97" font-size="14" textLength="30.3" lengthAdjust="spacingAndGlyphs">Pitch</text>
<text x="167" y="445.97" font-size="14" textLength="35.8" lengthAdjust="spacingAndGlyphs">Angle</text>
<text x="118" y="469" font-size="14.5" textLength="63.5" lengthAdjust="spacingAndGlyphs">GMT(min)</text>
<text x="210.8" y="469" font-size="14.5" textLength="35.6" lengthAdjust="spacingAndGlyphs">12:00</text>
<text x="316.334" y="469" font-size="14.5" textLength="35.6" lengthAdjust="spacingAndGlyphs">13:00</text>
<text x="421.868" y="469" font-size="14.5" textLength="35.6" lengthAdjust="spacingAndGlyphs">14:00</text>
<text x="527.402" y="469" font-size="14.5" textLength="35.6" lengthAdjust="spacingAndGlyphs">15:00</text>
<text x="580.169" y="469" font-size="14.5" textLength="35.6" lengthAdjust="spacingAndGlyphs">15:30</text>
<text x="685.703" y="469" font-size="14.5" textLength="35.6" lengthAdjust="spacingAndGlyphs">16:30</text>
<text x="791.237" y="469" font-size="14.5" textLength="35.6" lengthAdjust="spacingAndGlyphs">17:30</text>
<text x="852" y="258.4" font-size="16.8" textLength="31" lengthAdjust="spacingAndGlyphs">Deg</text>
<rect x="850" y="275" width="33" height="155" fill="#fff"/>
<rect x="851" y="276" width="31" height="153" fill="url(#rb)"/>
<rect x="878" y="283" width="4" height="1" fill="#fff"/>
<rect x="878" y="290" width="4" height="1" fill="#fff"/>
<rect x="878" y="298" width="4" height="1" fill="#fff"/>
<rect x="878" y="306" width="4" height="1" fill="#fff"/>
<rect x="875" y="313" width="7" height="1" fill="#fff"/>
<rect x="878" y="321" width="4" height="1" fill="#fff"/>
<rect x="878" y="329" width="4" height="1" fill="#fff"/>
<rect x="878" y="337" width="4" height="1" fill="#fff"/>
<rect x="878" y="344" width="4" height="1" fill="#fff"/>
<rect x="875" y="352" width="7" height="1" fill="#fff"/>
<rect x="878" y="360" width="4" height="1" fill="#fff"/>
<rect x="878" y="367" width="4" height="1" fill="#fff"/>
<rect x="878" y="375" width="4" height="1" fill="#fff"/>
<rect x="878" y="383" width="4" height="1" fill="#fff"/>
<rect x="875" y="391" width="7" height="1" fill="#fff"/>
<rect x="878" y="398" width="4" height="1" fill="#fff"/>
<rect x="878" y="406" width="4" height="1" fill="#fff"/>
<rect x="878" y="414" width="4" height="1" fill="#fff"/>
<rect x="878" y="421" width="4" height="1" fill="#fff"/>
<text x="894.3" y="281.2" font-size="17.6" textLength="28.2" lengthAdjust="spacingAndGlyphs">180</text>
<text x="894.3" y="319.78" font-size="17.6" textLength="28.2" lengthAdjust="spacingAndGlyphs">135</text>
<text x="894.3" y="358.36" font-size="17.6" textLength="19" lengthAdjust="spacingAndGlyphs">90</text>
<text x="894.3" y="396.94" font-size="17.6" textLength="19" lengthAdjust="spacingAndGlyphs">45</text>
<text x="894.3" y="435.52" font-size="17.6" textLength="9" lengthAdjust="spacingAndGlyphs">0</text>
<rect x="210" y="501" width="620" height="1" fill="#fff"/>
<rect x="210" y="678" width="620" height="1" fill="#fff"/>
<rect x="210" y="501" width="1" height="178" fill="#fff"/>
<rect x="829" y="501" width="1" height="178" fill="#fff"/>
<rect x="211" y="502" width="1" height="5" fill="#fff"/>
<rect x="211" y="672" width="1" height="6" fill="#fff"/>
<rect x="216" y="502" width="1" height="5" fill="#fff"/>
<rect x="216" y="672" width="1" height="6" fill="#fff"/>
<rect x="222" y="502" width="1" height="5" fill="#fff"/>
<rect x="222" y="672" width="1" height="6" fill="#fff"/>
<rect x="228" y="502" width="1" height="9" fill="#fff"/>
<rect x="228" y="669" width="1" height="9" fill="#fff"/>
<rect x="234" y="502" width="1" height="5" fill="#fff"/>
<rect x="234" y="672" width="1" height="6" fill="#fff"/>
<rect x="240" y="502" width="1" height="5" fill="#fff"/>
<rect x="240" y="672" width="1" height="6" fill="#fff"/>
<rect x="246" y="502" width="1" height="5" fill="#fff"/>
<rect x="246" y="672" width="1" height="6" fill="#fff"/>
<rect x="252" y="502" width="1" height="5" fill="#fff"/>
<rect x="252" y="672" width="1" height="6" fill="#fff"/>
<rect x="257" y="502" width="1" height="5" fill="#fff"/>
<rect x="257" y="672" width="1" height="6" fill="#fff"/>
<rect x="263" y="502" width="1" height="5" fill="#fff"/>
<rect x="263" y="672" width="1" height="6" fill="#fff"/>
<rect x="269" y="502" width="1" height="5" fill="#fff"/>
<rect x="269" y="672" width="1" height="6" fill="#fff"/>
<rect x="275" y="502" width="1" height="5" fill="#fff"/>
<rect x="275" y="672" width="1" height="6" fill="#fff"/>
<rect x="281" y="502" width="1" height="9" fill="#fff"/>
<rect x="281" y="669" width="1" height="9" fill="#fff"/>
<rect x="287" y="502" width="1" height="5" fill="#fff"/>
<rect x="287" y="672" width="1" height="6" fill="#fff"/>
<rect x="293" y="502" width="1" height="5" fill="#fff"/>
<rect x="293" y="672" width="1" height="6" fill="#fff"/>
<rect x="298" y="502" width="1" height="5" fill="#fff"/>
<rect x="298" y="672" width="1" height="6" fill="#fff"/>
<rect x="304" y="502" width="1" height="5" fill="#fff"/>
<rect x="304" y="672" width="1" height="6" fill="#fff"/>
<rect x="310" y="502" width="1" height="5" fill="#fff"/>
<rect x="310" y="672" width="1" height="6" fill="#fff"/>
<rect x="316" y="502" width="1" height="5" fill="#fff"/>
<rect x="316" y="672" width="1" height="6" fill="#fff"/>
<rect x="322" y="502" width="1" height="5" fill="#fff"/>
<rect x="322" y="672" width="1" height="6" fill="#fff"/>
<rect x="328" y="502" width="1" height="5" fill="#fff"/>
<rect x="328" y="672" width="1" height="6" fill="#fff"/>
<rect x="334" y="502" width="1" height="9" fill="#fff"/>
<rect x="334" y="669" width="1" height="9" fill="#fff"/>
<rect x="339" y="502" width="1" height="5" fill="#fff"/>
<rect x="339" y="672" width="1" height="6" fill="#fff"/>
<rect x="345" y="502" width="1" height="5" fill="#fff"/>
<rect x="345" y="672" width="1" height="6" fill="#fff"/>
<rect x="351" y="502" width="1" height="5" fill="#fff"/>
<rect x="351" y="672" width="1" height="6" fill="#fff"/>
<rect x="357" y="502" width="1" height="5" fill="#fff"/>
<rect x="357" y="672" width="1" height="6" fill="#fff"/>
<rect x="363" y="502" width="1" height="5" fill="#fff"/>
<rect x="363" y="672" width="1" height="6" fill="#fff"/>
<rect x="369" y="502" width="1" height="5" fill="#fff"/>
<rect x="369" y="672" width="1" height="6" fill="#fff"/>
<rect x="375" y="502" width="1" height="5" fill="#fff"/>
<rect x="375" y="672" width="1" height="6" fill="#fff"/>
<rect x="381" y="502" width="1" height="5" fill="#fff"/>
<rect x="381" y="672" width="1" height="6" fill="#fff"/>
<rect x="386" y="502" width="1" height="9" fill="#fff"/>
<rect x="386" y="669" width="1" height="9" fill="#fff"/>
<rect x="392" y="502" width="1" height="5" fill="#fff"/>
<rect x="392" y="672" width="1" height="6" fill="#fff"/>
<rect x="398" y="502" width="1" height="5" fill="#fff"/>
<rect x="398" y="672" width="1" height="6" fill="#fff"/>
<rect x="404" y="502" width="1" height="5" fill="#fff"/>
<rect x="404" y="672" width="1" height="6" fill="#fff"/>
<rect x="410" y="502" width="1" height="5" fill="#fff"/>
<rect x="410" y="672" width="1" height="6" fill="#fff"/>
<rect x="416" y="502" width="1" height="5" fill="#fff"/>
<rect x="416" y="672" width="1" height="6" fill="#fff"/>
<rect x="422" y="502" width="1" height="5" fill="#fff"/>
<rect x="422" y="672" width="1" height="6" fill="#fff"/>
<rect x="427" y="502" width="1" height="5" fill="#fff"/>
<rect x="427" y="672" width="1" height="6" fill="#fff"/>
<rect x="433" y="502" width="1" height="5" fill="#fff"/>
<rect x="433" y="672" width="1" height="6" fill="#fff"/>
<rect x="439" y="502" width="1" height="9" fill="#fff"/>
<rect x="439" y="669" width="1" height="9" fill="#fff"/>
<rect x="445" y="502" width="1" height="5" fill="#fff"/>
<rect x="445" y="672" width="1" height="6" fill="#fff"/>
<rect x="451" y="502" width="1" height="5" fill="#fff"/>
<rect x="451" y="672" width="1" height="6" fill="#fff"/>
<rect x="457" y="502" width="1" height="5" fill="#fff"/>
<rect x="457" y="672" width="1" height="6" fill="#fff"/>
<rect x="463" y="502" width="1" height="5" fill="#fff"/>
<rect x="463" y="672" width="1" height="6" fill="#fff"/>
<rect x="468" y="502" width="1" height="5" fill="#fff"/>
<rect x="468" y="672" width="1" height="6" fill="#fff"/>
<rect x="474" y="502" width="1" height="5" fill="#fff"/>
<rect x="474" y="672" width="1" height="6" fill="#fff"/>
<rect x="480" y="502" width="1" height="5" fill="#fff"/>
<rect x="480" y="672" width="1" height="6" fill="#fff"/>
<rect x="486" y="502" width="1" height="5" fill="#fff"/>
<rect x="486" y="672" width="1" height="6" fill="#fff"/>
<rect x="492" y="502" width="1" height="9" fill="#fff"/>
<rect x="492" y="669" width="1" height="9" fill="#fff"/>
<rect x="498" y="502" width="1" height="5" fill="#fff"/>
<rect x="498" y="672" width="1" height="6" fill="#fff"/>
<rect x="504" y="502" width="1" height="5" fill="#fff"/>
<rect x="504" y="672" width="1" height="6" fill="#fff"/>
<rect x="510" y="502" width="1" height="5" fill="#fff"/>
<rect x="510" y="672" width="1" height="6" fill="#fff"/>
<rect x="515" y="502" width="1" height="5" fill="#fff"/>
<rect x="515" y="672" width="1" height="6" fill="#fff"/>
<rect x="521" y="502" width="1" height="5" fill="#fff"/>
<rect x="521" y="672" width="1" height="6" fill="#fff"/>
<rect x="527" y="502" width="1" height="5" fill="#fff"/>
<rect x="527" y="672" width="1" height="6" fill="#fff"/>
<rect x="533" y="502" width="1" height="5" fill="#fff"/>
<rect x="533" y="672" width="1" height="6" fill="#fff"/>
<rect x="539" y="502" width="1" height="5" fill="#fff"/>
<rect x="539" y="672" width="1" height="6" fill="#fff"/>
<rect x="545" y="502" width="1" height="9" fill="#fff"/>
<rect x="545" y="669" width="1" height="9" fill="#fff"/>
<rect x="551" y="502" width="1" height="5" fill="#fff"/>
<rect x="551" y="672" width="1" height="6" fill="#fff"/>
<rect x="556" y="502" width="1" height="5" fill="#fff"/>
<rect x="556" y="672" width="1" height="6" fill="#fff"/>
<rect x="562" y="502" width="1" height="5" fill="#fff"/>
<rect x="562" y="672" width="1" height="6" fill="#fff"/>
<rect x="568" y="502" width="1" height="5" fill="#fff"/>
<rect x="568" y="672" width="1" height="6" fill="#fff"/>
<rect x="574" y="502" width="1" height="5" fill="#fff"/>
<rect x="574" y="672" width="1" height="6" fill="#fff"/>
<rect x="580" y="502" width="1" height="5" fill="#fff"/>
<rect x="580" y="672" width="1" height="6" fill="#fff"/>
<rect x="586" y="502" width="1" height="5" fill="#fff"/>
<rect x="586" y="672" width="1" height="6" fill="#fff"/>
<rect x="592" y="502" width="1" height="5" fill="#fff"/>
<rect x="592" y="672" width="1" height="6" fill="#fff"/>
<rect x="597" y="502" width="1" height="9" fill="#fff"/>
<rect x="597" y="669" width="1" height="9" fill="#fff"/>
<rect x="603" y="502" width="1" height="5" fill="#fff"/>
<rect x="603" y="672" width="1" height="6" fill="#fff"/>
<rect x="609" y="502" width="1" height="5" fill="#fff"/>
<rect x="609" y="672" width="1" height="6" fill="#fff"/>
<rect x="615" y="502" width="1" height="5" fill="#fff"/>
<rect x="615" y="672" width="1" height="6" fill="#fff"/>
<rect x="621" y="502" width="1" height="5" fill="#fff"/>
<rect x="621" y="672" width="1" height="6" fill="#fff"/>
<rect x="627" y="502" width="1" height="5" fill="#fff"/>
<rect x="627" y="672" width="1" height="6" fill="#fff"/>
<rect x="633" y="502" width="1" height="5" fill="#fff"/>
<rect x="633" y="672" width="1" height="6" fill="#fff"/>
<rect x="639" y="502" width="1" height="5" fill="#fff"/>
<rect x="639" y="672" width="1" height="6" fill="#fff"/>
<rect x="644" y="502" width="1" height="5" fill="#fff"/>
<rect x="644" y="672" width="1" height="6" fill="#fff"/>
<rect x="650" y="502" width="1" height="9" fill="#fff"/>
<rect x="650" y="669" width="1" height="9" fill="#fff"/>
<rect x="656" y="502" width="1" height="5" fill="#fff"/>
<rect x="656" y="672" width="1" height="6" fill="#fff"/>
<rect x="662" y="502" width="1" height="5" fill="#fff"/>
<rect x="662" y="672" width="1" height="6" fill="#fff"/>
<rect x="668" y="502" width="1" height="5" fill="#fff"/>
<rect x="668" y="672" width="1" height="6" fill="#fff"/>
<rect x="674" y="502" width="1" height="5" fill="#fff"/>
<rect x="674" y="672" width="1" height="6" fill="#fff"/>
<rect x="680" y="502" width="1" height="5" fill="#fff"/>
<rect x="680" y="672" width="1" height="6" fill="#fff"/>
<rect x="685" y="502" width="1" height="5" fill="#fff"/>
<rect x="685" y="672" width="1" height="6" fill="#fff"/>
<rect x="691" y="502" width="1" height="5" fill="#fff"/>
<rect x="691" y="672" width="1" height="6" fill="#fff"/>
<rect x="697" y="502" width="1" height="5" fill="#fff"/>
<rect x="697" y="672" width="1" height="6" fill="#fff"/>
<rect x="703" y="502" width="1" height="9" fill="#fff"/>
<rect x="703" y="669" width="1" height="9" fill="#fff"/>
<rect x="709" y="502" width="1" height="5" fill="#fff"/>
<rect x="709" y="672" width="1" height="6" fill="#fff"/>
<rect x="715" y="502" width="1" height="5" fill="#fff"/>
<rect x="715" y="672" width="1" height="6" fill="#fff"/>
<rect x="721" y="502" width="1" height="5" fill="#fff"/>
<rect x="721" y="672" width="1" height="6" fill="#fff"/>
<rect x="726" y="502" width="1" height="5" fill="#fff"/>
<rect x="726" y="672" width="1" height="6" fill="#fff"/>
<rect x="732" y="502" width="1" height="5" fill="#fff"/>
<rect x="732" y="672" width="1" height="6" fill="#fff"/>
<rect x="738" y="502" width="1" height="5" fill="#fff"/>
<rect x="738" y="672" width="1" height="6" fill="#fff"/>
<rect x="744" y="502" width="1" height="5" fill="#fff"/>
<rect x="744" y="672" width="1" height="6" fill="#fff"/>
<rect x="750" y="502" width="1" height="5" fill="#fff"/>
<rect x="750" y="672" width="1" height="6" fill="#fff"/>
<rect x="756" y="502" width="1" height="9" fill="#fff"/>
<rect x="756" y="669" width="1" height="9" fill="#fff"/>
<rect x="762" y="502" width="1" height="5" fill="#fff"/>
<rect x="762" y="672" width="1" height="6" fill="#fff"/>
<rect x="767" y="502" width="1" height="5" fill="#fff"/>
<rect x="767" y="672" width="1" height="6" fill="#fff"/>
<rect x="773" y="502" width="1" height="5" fill="#fff"/>
<rect x="773" y="672" width="1" height="6" fill="#fff"/>
<rect x="779" y="502" width="1" height="5" fill="#fff"/>
<rect x="779" y="672" width="1" height="6" fill="#fff"/>
<rect x="785" y="502" width="1" height="5" fill="#fff"/>
<rect x="785" y="672" width="1" height="6" fill="#fff"/>
<rect x="791" y="502" width="1" height="5" fill="#fff"/>
<rect x="791" y="672" width="1" height="6" fill="#fff"/>
<rect x="797" y="502" width="1" height="5" fill="#fff"/>
<rect x="797" y="672" width="1" height="6" fill="#fff"/>
<rect x="803" y="502" width="1" height="5" fill="#fff"/>
<rect x="803" y="672" width="1" height="6" fill="#fff"/>
<rect x="809" y="502" width="1" height="9" fill="#fff"/>
<rect x="809" y="669" width="1" height="9" fill="#fff"/>
<rect x="814" y="502" width="1" height="5" fill="#fff"/>
<rect x="814" y="672" width="1" height="6" fill="#fff"/>
<rect x="820" y="502" width="1" height="5" fill="#fff"/>
<rect x="820" y="672" width="1" height="6" fill="#fff"/>
<rect x="826" y="502" width="1" height="5" fill="#fff"/>
<rect x="826" y="672" width="1" height="6" fill="#fff"/>
<rect x="201" y="501" width="9" height="1" fill="#fff"/>
<rect x="830" y="501" width="10" height="1" fill="#fff"/>
<rect x="204" y="508" width="6" height="1" fill="#fff"/>
<rect x="830" y="508" width="6" height="1" fill="#fff"/>
<rect x="204" y="515" width="6" height="1" fill="#fff"/>
<rect x="830" y="515" width="6" height="1" fill="#fff"/>
<rect x="204" y="522" width="6" height="1" fill="#fff"/>
<rect x="830" y="522" width="6" height="1" fill="#fff"/>
<rect x="204" y="529" width="6" height="1" fill="#fff"/>
<rect x="830" y="529" width="6" height="1" fill="#fff"/>
<rect x="201" y="536" width="9" height="1" fill="#fff"/>
<rect x="830" y="536" width="10" height="1" fill="#fff"/>
<rect x="204" y="543" width="6" height="1" fill="#fff"/>
<rect x="830" y="543" width="6" height="1" fill="#fff"/>
<rect x="204" y="550" width="6" height="1" fill="#fff"/>
<rect x="830" y="550" width="6" height="1" fill="#fff"/>
<rect x="204" y="557" width="6" height="1" fill="#fff"/>
<rect x="830" y="557" width="6" height="1" fill="#fff"/>
<rect x="204" y="564" width="6" height="1" fill="#fff"/>
<rect x="830" y="564" width="6" height="1" fill="#fff"/>
<rect x="201" y="572" width="9" height="1" fill="#fff"/>
<rect x="830" y="572" width="10" height="1" fill="#fff"/>
<rect x="204" y="579" width="6" height="1" fill="#fff"/>
<rect x="830" y="579" width="6" height="1" fill="#fff"/>
<rect x="204" y="586" width="6" height="1" fill="#fff"/>
<rect x="830" y="586" width="6" height="1" fill="#fff"/>
<rect x="204" y="593" width="6" height="1" fill="#fff"/>
<rect x="830" y="593" width="6" height="1" fill="#fff"/>
<rect x="204" y="600" width="6" height="1" fill="#fff"/>
<rect x="830" y="600" width="6" height="1" fill="#fff"/>
<rect x="201" y="607" width="9" height="1" fill="#fff"/>
<rect x="830" y="607" width="10" height="1" fill="#fff"/>
<rect x="204" y="614" width="6" height="1" fill="#fff"/>
<rect x="830" y="614" width="6" height="1" fill="#fff"/>
<rect x="204" y="621" width="6" height="1" fill="#fff"/>
<rect x="830" y="621" width="6" height="1" fill="#fff"/>
<rect x="204" y="628" width="6" height="1" fill="#fff"/>
<rect x="830" y="628" width="6" height="1" fill="#fff"/>
<rect x="204" y="635" width="6" height="1" fill="#fff"/>
<rect x="830" y="635" width="6" height="1" fill="#fff"/>
<rect x="201" y="643" width="9" height="1" fill="#fff"/>
<rect x="830" y="643" width="10" height="1" fill="#fff"/>
<rect x="204" y="650" width="6" height="1" fill="#fff"/>
<rect x="830" y="650" width="6" height="1" fill="#fff"/>
<rect x="204" y="657" width="6" height="1" fill="#fff"/>
<rect x="830" y="657" width="6" height="1" fill="#fff"/>
<rect x="204" y="664" width="6" height="1" fill="#fff"/>
<rect x="830" y="664" width="6" height="1" fill="#fff"/>
<rect x="204" y="671" width="6" height="1" fill="#fff"/>
<rect x="830" y="671" width="6" height="1" fill="#fff"/>
<rect x="201" y="678" width="9" height="1" fill="#fff"/>
<rect x="830" y="678" width="10" height="1" fill="#fff"/>
<text x="197" y="505.6" font-size="14.5" text-anchor="end" textLength="9.5" lengthAdjust="spacingAndGlyphs">4</text>
<text x="197" y="541" font-size="14.5" text-anchor="end" textLength="9.5" lengthAdjust="spacingAndGlyphs">3</text>
<text x="197" y="576.4" font-size="14.5" text-anchor="end" textLength="9.5" lengthAdjust="spacingAndGlyphs">2</text>
<text x="197" y="611.8" font-size="14.5" text-anchor="end" textLength="9.5" lengthAdjust="spacingAndGlyphs">1</text>
<text x="197" y="647.2" font-size="14.5" text-anchor="end" textLength="9.5" lengthAdjust="spacingAndGlyphs">0</text>
<text x="197" y="682.6" font-size="14.5" text-anchor="end" textLength="16.2" lengthAdjust="spacingAndGlyphs">&#8722;1</text>
<text x="846" y="505.8" font-size="14" textLength="54" lengthAdjust="spacingAndGlyphs">1.0e+04</text>
<text x="846" y="541.2" font-size="14" textLength="57" lengthAdjust="spacingAndGlyphs">6.0e+03</text>
<text x="846" y="576.6" font-size="14" textLength="57" lengthAdjust="spacingAndGlyphs">2.0e+03</text>
<text x="846" y="612" font-size="14" textLength="67.5" lengthAdjust="spacingAndGlyphs">&#8722;2.0e+03</text>
<text x="846" y="647.4" font-size="14" textLength="67.5" lengthAdjust="spacingAndGlyphs">&#8722;6.0e+03</text>
<text x="846" y="682.8" font-size="14" textLength="64.5" lengthAdjust="spacingAndGlyphs">&#8722;1.0e+04</text>
<text x="118" y="697.5" font-size="14.5" textLength="63.5" lengthAdjust="spacingAndGlyphs">GMT(min)</text>
<text x="210.8" y="697.5" font-size="14.5" textLength="35.6" lengthAdjust="spacingAndGlyphs">12:00</text>
<text x="316.334" y="697.5" font-size="14.5" textLength="35.6" lengthAdjust="spacingAndGlyphs">13:00</text>
<text x="421.868" y="697.5" font-size="14.5" textLength="35.6" lengthAdjust="spacingAndGlyphs">14:00</text>
<text x="527.402" y="697.5" font-size="14.5" textLength="35.6" lengthAdjust="spacingAndGlyphs">15:00</text>
<text x="580.169" y="697.5" font-size="14.5" textLength="35.6" lengthAdjust="spacingAndGlyphs">15:30</text>
<text x="685.703" y="697.5" font-size="14.5" textLength="35.6" lengthAdjust="spacingAndGlyphs">16:30</text>
<text x="791.237" y="697.5" font-size="14.5" textLength="35.6" lengthAdjust="spacingAndGlyphs">17:30</text>
<text x="211.9" y="492.5" font-size="16.6" textLength="136.5" lengthAdjust="spacingAndGlyphs">SAF_BXuT/Data</text>
<text x="359.4" y="492.5" font-size="16.6" textLength="56.2" lengthAdjust="spacingAndGlyphs">Quality</text>
<text x="425.6" y="492.5" font-size="16.6" textLength="22.8" lengthAdjust="spacingAndGlyphs">(L)</text>
<text x="530.9" y="492.5" font-size="16.6" style="fill:#00f400" textLength="136" lengthAdjust="spacingAndGlyphs">MEXORBMC/SPF</text>
<text x="676.3" y="492.5" font-size="16.6" style="fill:#00f400" textLength="14" lengthAdjust="spacingAndGlyphs">X,</text>
<text x="701.3" y="492.5" font-size="16.6" style="fill:#00f400" textLength="92.1" lengthAdjust="spacingAndGlyphs">Spacecraft</text>
<text x="804.4" y="492.5" font-size="16.6" style="fill:#00f400" textLength="25" lengthAdjust="spacingAndGlyphs">(R)</text>
<text x="69.6" y="660.5" font-size="16" textLength="29" lengthAdjust="spacingAndGlyphs" transform="rotate(-90 69.6 660.5)">Raw</text>
<text x="69.6" y="620.2" font-size="16" textLength="33.9" lengthAdjust="spacingAndGlyphs" transform="rotate(-90 69.6 620.2)">Data</text>
<text x="69.6" y="573.5" font-size="16" textLength="55.5" lengthAdjust="spacingAndGlyphs" transform="rotate(-90 69.6 573.5)">Quality</text>
<text x="88.5" y="589.5" font-size="16" text-anchor="middle" textLength="45" lengthAdjust="spacingAndGlyphs" transform="rotate(-90 88.5 589.5)">(Raw)</text>
<text x="969.7" y="504.4" font-size="16" textLength="92.1" lengthAdjust="spacingAndGlyphs" transform="rotate(90 969.7 504.4)">Component</text>
<text x="969.7" y="606.4" font-size="16" textLength="68.5" lengthAdjust="spacingAndGlyphs" transform="rotate(90 969.7 606.4)">Distance</text>
<text x="950.8" y="589.6" font-size="16" text-anchor="middle" textLength="39" lengthAdjust="spacingAndGlyphs" transform="rotate(90 950.8 589.6)">(km)</text>
<rect x="221" y="607" width="11" height="1" fill="#fff"/>
<rect x="233" y="607" width="14" height="1" fill="#fff"/>
<rect x="249" y="607" width="14" height="1" fill="#fff"/>
<rect x="264" y="607" width="15" height="1" fill="#fff"/>
<rect x="280" y="607" width="8" height="1" fill="#fff"/>
<rect x="289" y="643" width="5" height="1" fill="#fff"/>
<rect x="295" y="643" width="15" height="1" fill="#fff"/>
<rect x="311" y="643" width="14" height="1" fill="#fff"/>
<rect x="326" y="643" width="15" height="1" fill="#fff"/>
<rect x="342" y="643" width="14" height="1" fill="#fff"/>
<rect x="358" y="643" width="14" height="1" fill="#fff"/>
<rect x="373" y="643" width="14" height="1" fill="#fff"/>
<rect x="389" y="643" width="14" height="1" fill="#fff"/>
<rect x="404" y="643" width="14" height="1" fill="#fff"/>
<rect x="420" y="643" width="14" height="1" fill="#fff"/>
<rect x="435" y="643" width="15" height="1" fill="#fff"/>
<rect x="451" y="643" width="14" height="1" fill="#fff"/>
<rect x="466" y="643" width="15" height="1" fill="#fff"/>
<rect x="482" y="643" width="14" height="1" fill="#fff"/>
<rect x="497" y="643" width="15" height="1" fill="#fff"/>
<rect x="513" y="643" width="14" height="1" fill="#fff"/>
<rect x="529" y="643" width="14" height="1" fill="#fff"/>
<rect x="544" y="643" width="14" height="1" fill="#fff"/>
<rect x="560" y="643" width="14" height="1" fill="#fff"/>
<rect x="575" y="643" width="14" height="1" fill="#fff"/>
<rect x="591" y="643" width="14" height="1" fill="#fff"/>
<rect x="606" y="643" width="15" height="1" fill="#fff"/>
<rect x="622" y="643" width="14" height="1" fill="#fff"/>
<rect x="637" y="643" width="15" height="1" fill="#fff"/>
<rect x="653" y="643" width="9" height="1" fill="#fff"/>
<rect x="663" y="607" width="4" height="1" fill="#fff"/>
<rect x="668" y="607" width="15" height="1" fill="#fff"/>
<rect x="684" y="607" width="14" height="1" fill="#fff"/>
<rect x="700" y="607" width="14" height="1" fill="#fff"/>
<rect x="715" y="607" width="14" height="1" fill="#fff"/>
<rect x="731" y="607" width="14" height="1" fill="#fff"/>
<rect x="746" y="607" width="14" height="1" fill="#fff"/>
<rect x="762" y="607" width="14" height="1" fill="#fff"/>
<rect x="777" y="607" width="15" height="1" fill="#fff"/>
<rect x="793" y="607" width="14" height="1" fill="#fff"/>
<rect x="808" y="607" width="11" height="1" fill="#fff"/>
<rect x="288" y="618" width="1" height="1" fill="#fff"/>
<rect x="662" y="629" width="1" height="1" fill="#fff"/>
<clipPath id="c3"><rect x="211" y="502" width="618" height="176"/></clipPath>
<g clip-path="url(#c3)" fill="none" stroke="#00f000" stroke-width="1"><polyline points="211.0,580.7 214.0,583.4 217.0,586.0 220.0,588.5 223.0,591.1 226.0,593.6 229.0,596.1 232.0,598.5 235.0,600.9 238.0,603.3 241.0,605.7 244.0,608.0 247.0,610.2 250.0,612.5 253.0,614.7 256.0,616.9 259.0,619.0 262.0,621.2 265.0,623.2 268.0,625.3 271.0,627.3 274.0,629.3 277.0,631.3 280.0,633.2 283.0,635.1 286.0,636.9 289.0,638.8 292.0,640.6 295.0,642.3 298.0,644.0 301.0,645.7 304.0,647.4 307.0,649.0 310.0,650.6 313.0,652.2 316.0,653.7 319.0,655.2 322.0,656.7 325.0,658.1 328.0,659.5 331.0,660.9 334.0,662.2 337.0,663.5 340.0,664.8 343.0,666.0 346.0,667.2 349.0,668.4 352.0,669.5 355.0,670.7 358.0,671.7 361.0,672.8 364.0,673.8 367.0,674.8 370.0,675.7 373.0,676.6 376.0,677.5"/><polyline points="643.0,677.6 646.0,676.7 649.0,675.8 652.0,674.9 655.0,674.0 658.0,673.0 661.0,672.1 664.0,671.1 667.0,670.0 670.0,669.0 673.0,667.9 676.0,666.9 679.0,665.7 682.0,664.6 685.0,663.5 688.0,662.3 691.0,661.1 694.0,659.9 697.0,658.6 700.0,657.4 703.0,656.1 706.0,654.8 709.0,653.5 712.0,652.1 715.0,650.7 718.0,649.3 721.0,647.9 724.0,646.5 727.0,645.0 730.0,643.5 733.0,642.0 736.0,640.5 739.0,639.0 742.0,637.4 745.0,635.8 748.0,634.2 751.0,632.6 754.0,630.9 757.0,629.2 760.0,627.5 763.0,625.8 766.0,624.1 769.0,622.3 772.0,620.5 775.0,618.7 778.0,616.9 781.0,615.0 784.0,613.1 787.0,611.2 790.0,609.3 793.0,607.4 796.0,605.4 799.0,603.4 802.0,601.4 805.0,599.4 808.0,597.3 811.0,595.2 814.0,593.1 817.0,591.0 820.0,588.9 823.0,586.7 826.0,584.5 829.0,582.3"/></g>
<g fill="#8000ff"><rect x="211" y="188.5" width="2" height="2.4"/><rect x="213" y="195.7" width="2" height="2.4"/><rect x="215" y="190.9" width="2" height="2.4"/><rect x="221" y="190.9" width="2" height="2.4"/><rect x="233" y="190.9" width="2" height="2.4"/><rect x="235" y="198.1" width="2" height="2.4"/><rect x="239" y="188.5" width="2" height="2.4"/><rect x="241" y="188.5" width="2" height="2.4"/><rect x="245" y="193.3" width="2" height="2.4"/><rect x="251" y="193.3" width="2" height="2.4"/><rect x="253" y="190.9" width="2" height="2.4"/><rect x="253" y="195.7" width="2" height="2.4"/><rect x="257" y="188.5" width="2" height="2.4"/><rect x="261" y="195.7" width="2" height="2.4"/><rect x="265" y="188.5" width="2" height="2.4"/><rect x="265" y="190.9" width="2" height="2.4"/><rect x="267" y="188.5" width="2" height="2.4"/><rect x="267" y="190.9" width="2" height="2.4"/><rect x="267" y="193.3" width="2" height="2.4"/><rect x="273" y="190.9" width="2" height="2.4"/><rect x="273" y="200.5" width="2" height="2.4"/><rect x="275" y="190.9" width="2" height="2.4"/><rect x="277" y="188.5" width="2" height="2.4"/><rect x="279" y="193.3" width="2" height="2.4"/><rect x="281" y="210.1" width="2" height="2.4"/><rect x="283" y="195.7" width="2" height="2.4"/><rect x="289" y="188.5" width="2" height="2.4"/><rect x="293" y="188.5" width="2" height="2.4"/><rect x="293" y="190.9" width="2" height="2.4"/><rect x="295" y="188.5" width="2" height="2.4"/><rect x="297" y="195.7" width="2" height="2.4"/><rect x="299" y="190.9" width="2" height="2.4"/><rect x="307" y="190.9" width="2" height="2.4"/><rect x="307" y="217.3" width="2" height="2.4"/><rect x="313" y="193.3" width="2" height="2.4"/><rect x="315" y="190.9" width="2" height="2.4"/><rect x="317" y="188.5" width="2" height="2.4"/><rect x="321" y="193.3" width="2" height="2.4"/><rect x="321" y="214.9" width="2" height="2.4"/><rect x="323" y="188.5" width="2" height="2.4"/><rect x="323" y="190.9" width="2" height="2.4"/><rect x="323" y="190.9" width="2" height="2.4"/><rect x="327" y="190.9" width="2" height="2.4"/><rect x="329" y="188.5" width="2" height="2.4"/><rect x="329" y="193.3" width="2" height="2.4"/><rect x="333" y="188.5" width="2" height="2.4"/><rect x="337" y="188.5" width="2" height="2.4"/><rect x="337" y="190.9" width="2" height="2.4"/><rect x="337" y="193.3" width="2" height="2.4"/><rect x="343" y="188.5" width="2" height="2.4"/><rect x="357" y="190.9" width="2" height="2.4"/><rect x="361" y="188.5" width="2" height="2.4"/><rect x="361" y="190.9" width="2" height="2.4"/><rect x="365" y="190.9" width="2" height="2.4"/><rect x="371" y="188.5" width="2" height="2.4"/><rect x="371" y="190.9" width="2" height="2.4"/><rect x="371" y="190.9" width="2" height="2.4"/><rect x="375" y="188.5" width="2" height="2.4"/><rect x="377" y="190.9" width="2" height="2.4"/><rect x="377" y="190.9" width="2" height="2.4"/><rect x="377" y="198.1" width="2" height="2.4"/><rect x="381" y="190.9" width="2" height="2.4"/><rect x="381" y="195.7" width="2" height="2.4"/><rect x="383" y="217.3" width="2" height="2.4"/><rect x="385" y="188.5" width="2" height="2.4"/><rect x="395" y="188.5" width="2" height="2.4"/><rect x="399" y="190.9" width="2" height="2.4"/><rect x="401" y="200.5" width="2" height="2.4"/><rect x="403" y="188.5" width="2" height="2.4"/><rect x="405" y="188.5" width="2" height="2.4"/><rect x="409" y="193.3" width="2" height="2.4"/><rect x="411" y="202.9" width="2" height="2.4"/><rect x="413" y="190.9" width="2" height="2.4"/><rect x="413" y="198.1" width="2" height="2.4"/><rect x="415" y="193.3" width="2" height="2.4"/><rect x="417" y="188.5" width="2" height="2.4"/><rect x="417" y="190.9" width="2" height="2.4"/><rect x="417" y="214.9" width="2" height="2.4"/><rect x="419" y="190.9" width="2" height="2.4"/><rect x="429" y="190.9" width="2" height="2.4"/><rect x="431" y="188.5" width="2" height="2.4"/><rect x="431" y="190.9" width="2" height="2.4"/><rect x="431" y="212.5" width="2" height="2.4"/><rect x="433" y="190.9" width="2" height="2.4"/><rect x="437" y="190.9" width="2" height="2.4"/><rect x="439" y="190.9" width="2" height="2.4"/><rect x="441" y="190.9" width="2" height="2.4"/><rect x="443" y="193.3" width="2" height="2.4"/><rect x="449" y="188.5" width="2" height="2.4"/><rect x="449" y="190.9" width="2" height="2.4"/><rect x="451" y="190.9" width="2" height="2.4"/><rect x="453" y="188.5" width="2" height="2.4"/><rect x="457" y="190.9" width="2" height="2.4"/><rect x="457" y="195.7" width="2" height="2.4"/><rect x="463" y="190.9" width="2" height="2.4"/><rect x="469" y="190.9" width="2" height="2.4"/><rect x="473" y="193.3" width="2" height="2.4"/><rect x="473" y="195.7" width="2" height="2.4"/><rect x="475" y="190.9" width="2" height="2.4"/><rect x="477" y="190.9" width="2" height="2.4"/><rect x="483" y="188.5" width="2" height="2.4"/><rect x="483" y="193.3" width="2" height="2.4"/><rect x="485" y="188.5" width="2" height="2.4"/><rect x="485" y="190.9" width="2" height="2.4"/><rect x="485" y="195.7" width="2" height="2.4"/><rect x="487" y="190.9" width="2" height="2.4"/><rect x="487" y="193.3" width="2" height="2.4"/><rect x="489" y="193.3" width="2" height="2.4"/><rect x="491" y="193.3" width="2" height="2.4"/><rect x="491" y="207.7" width="2" height="2.4"/><rect x="493" y="193.3" width="2" height="2.4"/><rect x="495" y="190.9" width="2" height="2.4"/><rect x="499" y="188.5" width="2" height="2.4"/><rect x="501" y="188.5" width="2" height="2.4"/><rect x="505" y="190.9" width="2" height="2.4"/><rect x="505" y="198.1" width="2" height="2.4"/><rect x="511" y="190.9" width="2" height="2.4"/><rect x="513" y="188.5" width="2" height="2.4"/><rect x="515" y="190.9" width="2" height="2.4"/><rect x="515" y="190.9" width="2" height="2.4"/><rect x="517" y="188.5" width="2" height="2.4"/><rect x="523" y="188.5" width="2" height="2.4"/><rect x="523" y="190.9" width="2" height="2.4"/><rect x="527" y="190.9" width="2" height="2.4"/><rect x="527" y="193.3" width="2" height="2.4"/><rect x="529" y="214.9" width="2" height="2.4"/><rect x="531" y="188.5" width="2" height="2.4"/><rect x="533" y="193.3" width="2" height="2.4"/><rect x="535" y="188.5" width="2" height="2.4"/><rect x="537" y="188.5" width="2" height="2.4"/><rect x="539" y="188.5" width="2" height="2.4"/><rect x="539" y="214.9" width="2" height="2.4"/><rect x="541" y="193.3" width="2" height="2.4"/><rect x="545" y="188.5" width="2" height="2.4"/><rect x="547" y="188.5" width="2" height="2.4"/><rect x="547" y="195.7" width="2" height="2.4"/><rect x="549" y="190.9" width="2" height="2.4"/><rect x="549" y="198.1" width="2" height="2.4"/><rect x="563" y="188.5" width="2" height="2.4"/><rect x="565" y="188.5" width="2" height="2.4"/><rect x="567" y="198.1" width="2" height="2.4"/><rect x="569" y="188.5" width="2" height="2.4"/><rect x="569" y="190.9" width="2" height="2.4"/><rect x="575" y="190.9" width="2" height="2.4"/><rect x="577" y="190.9" width="2" height="2.4"/><rect x="579" y="188.5" width="2" height="2.4"/><rect x="579" y="190.9" width="2" height="2.4"/><rect x="579" y="217.3" width="2" height="2.4"/><rect x="583" y="188.5" width="2" height="2.4"/><rect x="585" y="212.5" width="2" height="2.4"/><rect x="589" y="188.5" width="2" height="2.4"/><rect x="593" y="188.5" width="2" height="2.4"/><rect x="593" y="193.3" width="2" height="2.4"/><rect x="595" y="188.5" width="2" height="2.4"/><rect x="595" y="190.9" width="2" height="2.4"/><rect x="595" y="202.9" width="2" height="2.4"/><rect x="597" y="190.9" width="2" height="2.4"/><rect x="599" y="190.9" width="2" height="2.4"/><rect x="601" y="193.3" width="2" height="2.4"/><rect x="601" y="198.1" width="2" height="2.4"/><rect x="603" y="190.9" width="2" height="2.4"/><rect x="605" y="188.5" width="2" height="2.4"/><rect x="605" y="193.3" width="2" height="2.4"/><rect x="607" y="188.5" width="2" height="2.4"/><rect x="615" y="188.5" width="2" height="2.4"/><rect x="617" y="188.5" width="2" height="2.4"/><rect x="619" y="190.9" width="2" height="2.4"/><rect x="621" y="188.5" width="2" height="2.4"/><rect x="621" y="193.3" width="2" height="2.4"/><rect x="625" y="190.9" width="2" height="2.4"/><rect x="625" y="190.9" width="2" height="2.4"/><rect x="627" y="210.1" width="2" height="2.4"/><rect x="629" y="188.5" width="2" height="2.4"/><rect x="633" y="190.9" width="2" height="2.4"/><rect x="633" y="190.9" width="2" height="2.4"/><rect x="637" y="190.9" width="2" height="2.4"/><rect x="637" y="193.3" width="2" height="2.4"/><rect x="639" y="193.3" width="2" height="2.4"/><rect x="639" y="195.7" width="2" height="2.4"/><rect x="643" y="188.5" width="2" height="2.4"/><rect x="643" y="190.9" width="2" height="2.4"/><rect x="645" y="188.5" width="2" height="2.4"/><rect x="647" y="190.9" width="2" height="2.4"/><rect x="649" y="193.3" width="2" height="2.4"/><rect x="649" y="210.1" width="2" height="2.4"/><rect x="651" y="190.9" width="2" height="2.4"/><rect x="659" y="188.5" width="2" height="2.4"/><rect x="659" y="190.9" width="2" height="2.4"/><rect x="659" y="193.3" width="2" height="2.4"/><rect x="661" y="188.5" width="2" height="2.4"/><rect x="661" y="190.9" width="2" height="2.4"/><rect x="663" y="190.9" width="2" height="2.4"/><rect x="681" y="190.9" width="2" height="2.4"/><rect x="681" y="193.3" width="2" height="2.4"/><rect x="681" y="212.5" width="2" height="2.4"/><rect x="683" y="190.9" width="2" height="2.4"/><rect x="683" y="214.9" width="2" height="2.4"/><rect x="685" y="188.5" width="2" height="2.4"/><rect x="687" y="190.9" width="2" height="2.4"/><rect x="689" y="190.9" width="2" height="2.4"/><rect x="689" y="193.3" width="2" height="2.4"/><rect x="689" y="195.7" width="2" height="2.4"/><rect x="691" y="190.9" width="2" height="2.4"/><rect x="695" y="190.9" width="2" height="2.4"/><rect x="695" y="193.3" width="2" height="2.4"/><rect x="697" y="190.9" width="2" height="2.4"/><rect x="699" y="190.9" width="2" height="2.4"/><rect x="699" y="190.9" width="2" height="2.4"/><rect x="703" y="190.9" width="2" height="2.4"/><rect x="703" y="210.1" width="2" height="2.4"/><rect x="707" y="190.9" width="2" height="2.4"/><rect x="709" y="188.5" width="2" height="2.4"/><rect x="711" y="190.9" width="2" height="2.4"/><rect x="713" y="188.5" width="2" height="2.4"/><rect x="713" y="190.9" width="2" height="2.4"/><rect x="717" y="188.5" width="2" height="2.4"/><rect x="721" y="193.3" width="2" height="2.4"/><rect x="723" y="188.5" width="2" height="2.4"/><rect x="725" y="188.5" width="2" height="2.4"/><rect x="725" y="190.9" width="2" height="2.4"/><rect x="727" y="188.5" width="2" height="2.4"/><rect x="729" y="198.1" width="2" height="2.4"/><rect x="731" y="190.9" width="2" height="2.4"/><rect x="735" y="188.5" width="2" height="2.4"/><rect x="735" y="217.3" width="2" height="2.4"/><rect x="737" y="188.5" width="2" height="2.4"/><rect x="737" y="202.9" width="2" height="2.4"/><rect x="741" y="190.9" width="2" height="2.4"/><rect x="743" y="188.5" width="2" height="2.4"/><rect x="743" y="193.3" width="2" height="2.4"/><rect x="745" y="188.5" width="2" height="2.4"/><rect x="745" y="190.9" width="2" height="2.4"/><rect x="747" y="188.5" width="2" height="2.4"/><rect x="747" y="198.1" width="2" height="2.4"/><rect x="751" y="210.1" width="2" height="2.4"/><rect x="755" y="190.9" width="2" height="2.4"/><rect x="757" y="190.9" width="2" height="2.4"/><rect x="757" y="210.1" width="2" height="2.4"/><rect x="759" y="188.5" width="2" height="2.4"/><rect x="759" y="190.9" width="2" height="2.4"/><rect x="759" y="207.7" width="2" height="2.4"/><rect x="765" y="188.5" width="2" height="2.4"/><rect x="767" y="198.1" width="2" height="2.4"/><rect x="769" y="193.3" width="2" height="2.4"/><rect x="769" y="212.5" width="2" height="2.4"/><rect x="771" y="190.9" width="2" height="2.4"/><rect x="773" y="193.3" width="2" height="2.4"/><rect x="775" y="190.9" width="2" height="2.4"/><rect x="777" y="188.5" width="2" height="2.4"/><rect x="779" y="188.5" width="2" height="2.4"/><rect x="781" y="190.9" width="2" height="2.4"/><rect x="783" y="190.9" width="2" height="2.4"/><rect x="787" y="193.3" width="2" height="2.4"/><rect x="791" y="190.9" width="2" height="2.4"/><rect x="791" y="193.3" width="2" height="2.4"/><rect x="801" y="188.5" width="2" height="2.4"/><rect x="803" y="190.9" width="2" height="2.4"/><rect x="807" y="190.9" width="2" height="2.4"/><rect x="807" y="193.3" width="2" height="2.4"/><rect x="809" y="188.5" width="2" height="2.4"/><rect x="809" y="190.9" width="2" height="2.4"/><rect x="811" y="188.5" width="2" height="2.4"/><rect x="815" y="195.7" width="2" height="2.4"/><rect x="817" y="202.9" width="2" height="2.4"/><rect x="819" y="188.5" width="2" height="2.4"/><rect x="819" y="190.9" width="2" height="2.4"/><rect x="821" y="190.9" width="2" height="2.4"/><rect x="823" y="188.5" width="2" height="2.4"/><rect x="825" y="193.3" width="2" height="2.4"/><rect x="827" y="190.9" width="2" height="2.4"/><rect x="827" y="193.3" width="2" height="2.4"/><rect x="255" y="187" width="2" height="11" fill="#5000ff"/></g>
</svg>
</div></body></html>
